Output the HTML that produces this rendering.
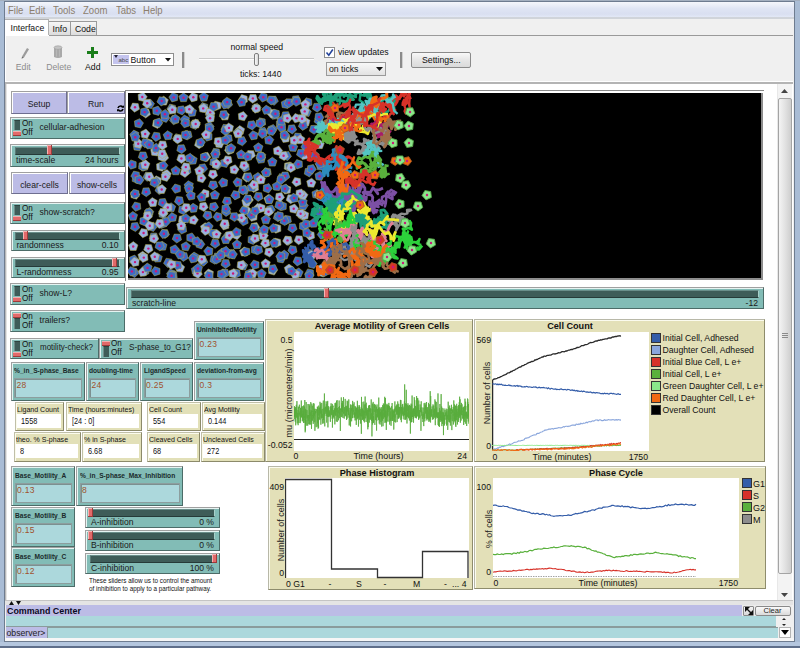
<!DOCTYPE html><html><head><meta charset="utf-8"><style>
*{margin:0;padding:0;box-sizing:border-box}
body{width:800px;height:648px;overflow:hidden;background:#fff;font-family:"Liberation Sans",sans-serif;position:relative}
div{position:absolute}
.t{white-space:nowrap}
</style></head><body>
<div style="left:0px;top:0px;width:800px;height:648px;background:#a9bcd5"></div>
<div style="left:0px;top:0px;width:800px;height:1px;background:#a4b0c0"></div>
<div style="left:4px;top:1px;width:791px;height:641px;background:#f0f0f0;border:1px solid #6e7c90"></div>
<div style="left:5px;top:2px;width:789px;height:15px;background:linear-gradient(#f5f7fc,#dfe5f4 45%,#d9dff1 80%,#e2e8f6)"></div>
<div style="left:5px;top:17px;width:789px;height:2px;background:#d0d4da"></div>
<div class="t" style="left:7.5px;top:3.94px;height:12.72px;line-height:12.72px;font-size:10.6px;color:#8c7e6c;transform:translateX(0) scaleX(0.9);transform-origin:0 50%;">File</div>
<div class="t" style="left:28.75px;top:3.94px;height:12.72px;line-height:12.72px;font-size:10.6px;color:#8c7e6c;transform:translateX(0) scaleX(0.9);transform-origin:0 50%;">Edit</div>
<div class="t" style="left:52.5px;top:3.94px;height:12.72px;line-height:12.72px;font-size:10.6px;color:#8c7e6c;transform:translateX(0) scaleX(0.9);transform-origin:0 50%;">Tools</div>
<div class="t" style="left:82.5px;top:3.94px;height:12.72px;line-height:12.72px;font-size:10.6px;color:#8c7e6c;transform:translateX(0) scaleX(0.9);transform-origin:0 50%;">Zoom</div>
<div class="t" style="left:116.25px;top:3.94px;height:12.72px;line-height:12.72px;font-size:10.6px;color:#8c7e6c;transform:translateX(0) scaleX(0.9);transform-origin:0 50%;">Tabs</div>
<div class="t" style="left:142.5px;top:3.94px;height:12.72px;line-height:12.72px;font-size:10.6px;color:#8c7e6c;transform:translateX(0) scaleX(0.9);transform-origin:0 50%;">Help</div>
<div style="left:5px;top:19px;width:788px;height:18px;background:#f0f0f0"></div>
<div style="left:48px;top:21px;width:23px;height:15px;background:linear-gradient(#f6f6f6,#dcdcdc);border:1px solid #9a9a9a"></div>
<div style="left:70px;top:21px;width:27px;height:15px;background:linear-gradient(#f6f6f6,#dcdcdc);border:1px solid #9a9a9a"></div>
<div style="left:5px;top:19px;width:44px;height:17px;background:#fff;border:1px solid #b0b0b0;border-bottom:none;border-left:none"></div>
<div class="t" style="left:10.5px;top:22.98px;height:10.44px;line-height:10.44px;font-size:8.7px;color:#111;transform:translateX(0) scaleX(1.0);transform-origin:0 50%;">Interface</div>
<div class="t" style="left:52.5px;top:24.28px;height:10.44px;line-height:10.44px;font-size:8.7px;color:#111;transform:translateX(0) scaleX(1.0);transform-origin:0 50%;">Info</div>
<div class="t" style="left:75px;top:24.28px;height:10.44px;line-height:10.44px;font-size:8.7px;color:#111;transform:translateX(0) scaleX(1.0);transform-origin:0 50%;">Code</div>
<div style="left:5px;top:35px;width:788px;height:49px;background:#f0f0f0;border-top:1px solid #9a9a9a;border-bottom:2px solid #b4b4b4;box-shadow:inset 1px -1px 0 #fff"></div>
<div style="left:49px;top:35px;width:744px;height:1px;background:#9a9a9a"></div>
<div style="left:5px;top:35px;width:44px;height:1px;background:#fff"></div>
<svg style="position:absolute;left:17px;top:46px" width="14" height="13" viewBox="0 0 14 13"><path d="M5 10.5 L10 2 L12 3.2 L7 11.6 Z" fill="#9c9c9c"/><path d="M5 10.5 L4.6 12.8 L7 11.6Z" fill="#6e6e6e"/></svg>
<div class="t" style="left:15.75px;top:61.78px;height:10.44px;line-height:10.44px;font-size:8.7px;color:#8c8c8c;transform:translateX(0) scaleX(1.0);transform-origin:0 50%;">Edit</div>
<svg style="position:absolute;left:52px;top:45px" width="12" height="14" viewBox="0 0 12 14"><path d="M2 2.8 L10 2.8 L10 12 Q6 14 2 12 Z" fill="#a9a9a9"/><ellipse cx="6" cy="2.6" rx="4" ry="1.8" fill="#c4c4c4" stroke="#9a9a9a" stroke-width="0.6"/><path d="M4.5 4.5 L4.5 11.5 M7.5 4.5 L7.5 11.5" stroke="#bcbcbc" stroke-width="0.8"/></svg>
<div class="t" style="left:46.25px;top:61.78px;height:10.44px;line-height:10.44px;font-size:8.7px;color:#8c8c8c;transform:translateX(0) scaleX(1.0);transform-origin:0 50%;">Delete</div>
<div style="left:91px;top:47px;width:3px;height:11px;background:#1a7e1a"></div>
<div style="left:87px;top:51px;width:11px;height:3px;background:#1a7e1a"></div>
<div class="t" style="left:85px;top:61.78px;height:10.44px;line-height:10.44px;font-size:8.7px;color:#111;transform:translateX(0) scaleX(1.0);transform-origin:0 50%;">Add</div>
<div style="left:111px;top:53px;width:63px;height:13px;background:#fff;border:1px solid #8e8e8e"></div>
<div style="left:113px;top:55px;width:16px;height:9px;background:#c4c4ee"></div>
<svg style="position:absolute;left:114px;top:55px" width="4" height="3"><path d="M0 0 L4 0 L2 3Z" fill="#223"/></svg>
<div class="t" style="left:118.5px;top:56.90px;height:7.20px;line-height:7.20px;font-size:6px;color:#444;transform:translateX(0) scaleX(1);transform-origin:0 50%;">abc</div>
<div class="t" style="left:130.5px;top:54.78px;height:10.44px;line-height:10.44px;font-size:8.7px;color:#111;transform:translateX(0) scaleX(1.0);transform-origin:0 50%;">Button</div>
<svg style="position:absolute;left:165px;top:58px" width="6" height="4"><path d="M0 0 L6 0 L3 3.5Z" fill="#111"/></svg>
<div style="left:182px;top:52px;width:3px;height:16px;background:#8a8a8a;border-right:1px solid #cfcfcf"></div>
<div style="left:400px;top:52px;width:3px;height:16px;background:#8a8a8a;border-right:1px solid #cfcfcf"></div>
<div class="t" style="left:230.5px;top:41.78px;height:10.44px;line-height:10.44px;font-size:8.7px;color:#111;transform:translateX(0) scaleX(1.0);transform-origin:0 50%;">normal speed</div>
<div style="left:199px;top:58px;width:115px;height:2px;background:#c9c9c9;border-bottom:1px solid #fff"></div>
<div style="left:254px;top:53px;width:5px;height:13px;background:linear-gradient(90deg,#fafafa,#d8d8d8);border:1px solid #7e7e7e;border-radius:2px"></div>
<div class="t" style="left:240px;top:68.78px;height:10.44px;line-height:10.44px;font-size:8.7px;color:#111;transform:translateX(0) scaleX(1.0);transform-origin:0 50%;">ticks: 1440</div>
<div style="left:324px;top:47px;width:11px;height:11px;background:#fff;border:1px solid #8e8f8f"></div>
<svg style="position:absolute;left:325px;top:48px" width="9" height="9"><path d="M1.5 4.5 L3.8 7.2 L7.8 1.5" fill="none" stroke="#24439a" stroke-width="1.6"/></svg>
<div class="t" style="left:338px;top:47.28px;height:10.44px;line-height:10.44px;font-size:8.7px;color:#111;transform:translateX(0) scaleX(1.0);transform-origin:0 50%;">view updates</div>
<div style="left:326px;top:62px;width:60px;height:14px;background:linear-gradient(#f8f8f8,#e2e2e2);border:1px solid #9a9a9a"></div>
<div class="t" style="left:329px;top:63.78px;height:10.44px;line-height:10.44px;font-size:8.7px;color:#111;transform:translateX(0) scaleX(1.0);transform-origin:0 50%;">on ticks</div>
<svg style="position:absolute;left:376px;top:67px" width="7" height="4"><path d="M0 0 L7 0 L3.5 4Z" fill="#111"/></svg>
<div style="left:411px;top:52px;width:60px;height:16px;background:linear-gradient(#f8f8f8,#e6e6e6 50%,#dadada);border:1px solid #8a8a8a;border-radius:2px"></div>
<div class="t" style="left:422px;top:54.78px;height:10.44px;line-height:10.44px;font-size:8.7px;color:#111;transform:translateX(0) scaleX(1.0);transform-origin:0 50%;">Settings...</div>
<div style="left:5px;top:84px;width:788px;height:516px;background:#fff;border-left:1px solid #b8b8b8;box-shadow:inset 1px 0 0 #e4e4e4"></div>
<div style="left:777px;top:84px;width:15px;height:516px;background:#f3f3f3;border-left:1px solid #e8e8e8"></div>
<svg style="position:absolute;left:781px;top:89px" width="7" height="4"><path d="M0 4 L7 4 L3.5 0Z" fill="#444"/></svg>
<div style="left:778px;top:98px;width:14px;height:476px;background:linear-gradient(90deg,#f4f4f4,#e2e2e2 50%,#cecece);border:1px solid #a4a4a4;border-radius:2px"></div>
<div style="left:782px;top:333px;width:6px;height:1px;background:#8a8a8a"></div>
<div style="left:782px;top:335px;width:6px;height:1px;background:#8a8a8a"></div>
<div style="left:782px;top:337px;width:6px;height:1px;background:#8a8a8a"></div>
<svg style="position:absolute;left:781px;top:593px" width="7" height="4"><path d="M0 0 L7 0 L3.5 4Z" fill="#444"/></svg>
<div style="left:11px;top:91px;width:56px;height:23px;background:#bcbce6;border-style:solid;border-width:1px;border-color:#a0a0a0 #6e6e90 #6e6e90 #a0a0a0;box-shadow:inset 1px 1px 0 #ffffff"></div>
<div class="t" style="left:39.0px;top:99.04px;height:10.32px;line-height:10.32px;font-size:8.6px;color:#1a1a1a;transform:translateX(-50%) scaleX(1.0);transform-origin:50% 50%;">Setup</div>
<div style="left:67px;top:91px;width:58px;height:23px;background:#bcbce6;border-style:solid;border-width:1px;border-color:#a0a0a0 #6e6e90 #6e6e90 #a0a0a0;box-shadow:inset 1px 1px 0 #ffffff"></div>
<div class="t" style="left:96px;top:99.04px;height:10.32px;line-height:10.32px;font-size:8.6px;color:#1a1a1a;transform:translateX(-50%) scaleX(1.0);transform-origin:50% 50%;">Run</div>
<svg style="position:absolute;left:116.5px;top:105px" width="7" height="7" viewBox="0 0 7 7"><path d="M1.0 3.0 Q1.6 1.0 3.6 1.0 Q5.0 1.0 5.6 2.0" fill="none" stroke="#000" stroke-width="1.6"/><path d="M6.0 4.0 Q5.4 6.0 3.4 6.0 Q2.0 6.0 1.4 5.0" fill="none" stroke="#000" stroke-width="1.6"/><path d="M4.4 2.8 L7 2.8 L7 0.2Z" fill="#000"/><path d="M2.6 4.2 L0 4.2 L0 6.8Z" fill="#000"/></svg>
<div style="left:10px;top:117px;width:115px;height:22px;background:#82bcb6;border-style:solid;border-width:1px;border-color:#a0a0a0 #4c6c68 #4c6c68 #a0a0a0;box-shadow:inset 1px 1px 0 #e6f4f2"></div>
<div style="left:14px;top:120px;width:6px;height:10px;background:#3e5c58;border-left:1px solid #6d8c88;border-top:1px solid #2e4440"></div>
<div style="left:13px;top:131px;width:8px;height:5px;background:#e26a6a;border-bottom:1px solid #9e3a3a;box-shadow:inset 0 1px 0 #f3b0b0"></div>
<div class="t" style="left:22px;top:117.70px;height:10.80px;line-height:10.80px;font-size:9px;color:#111;transform:translateX(0) scaleX(0.9);transform-origin:0 50%;">On</div>
<div class="t" style="left:22px;top:126.50px;height:10.80px;line-height:10.80px;font-size:9px;color:#111;transform:translateX(0) scaleX(0.9);transform-origin:0 50%;">Off</div>
<div class="t" style="left:39.5px;top:121.64px;height:10.32px;line-height:10.32px;font-size:8.6px;color:#1a1a1a;transform:translateX(0) scaleX(1.0);transform-origin:0 50%;">cellular-adhesion</div>
<div style="left:10px;top:144px;width:115px;height:23px;background:#82bcb6;border-style:solid;border-width:1px;border-color:#a0a0a0 #4c6c68 #4c6c68 #a0a0a0;box-shadow:inset 1px 1px 0 #e6f4f2"></div>
<div style="left:15px;top:147px;width:105px;height:8px;background:#3e5c58;border-top:1px solid #6a8e8a;border-left:1px solid #5a7a76;border-bottom:1px solid #263a38;border-right:1px solid #a8d0ca"></div>
<div style="left:47px;top:145px;width:5px;height:10px;background:#e26a6a;border-right:1px solid #9e3a3a;border-bottom:1px solid #9e3a3a;box-shadow:inset 1px 1px 0 #f5b4b4"></div>
<div class="t" style="left:16px;top:154.94px;height:10.32px;line-height:10.32px;font-size:8.6px;color:#1a1a1a;transform:translateX(0) scaleX(1.0);transform-origin:0 50%;">time-scale</div>
<div class="t" style="left:118.5px;top:154.94px;height:10.32px;line-height:10.32px;font-size:8.6px;color:#1a1a1a;transform:translateX(-100%) scaleX(1.0);transform-origin:100% 50%;">24 hours</div>
<div style="left:11px;top:172px;width:57px;height:22px;background:#bcbce6;border-style:solid;border-width:1px;border-color:#a0a0a0 #6e6e90 #6e6e90 #a0a0a0;box-shadow:inset 1px 1px 0 #ffffff"></div>
<div class="t" style="left:39.5px;top:179.54px;height:10.32px;line-height:10.32px;font-size:8.6px;color:#1a1a1a;transform:translateX(-50%) scaleX(1.0);transform-origin:50% 50%;">clear-cells</div>
<div style="left:69px;top:172px;width:56px;height:22px;background:#bcbce6;border-style:solid;border-width:1px;border-color:#a0a0a0 #6e6e90 #6e6e90 #a0a0a0;box-shadow:inset 1px 1px 0 #ffffff"></div>
<div class="t" style="left:97.0px;top:179.54px;height:10.32px;line-height:10.32px;font-size:8.6px;color:#1a1a1a;transform:translateX(-50%) scaleX(1.0);transform-origin:50% 50%;">show-cells</div>
<div style="left:10px;top:202px;width:115px;height:22px;background:#82bcb6;border-style:solid;border-width:1px;border-color:#a0a0a0 #4c6c68 #4c6c68 #a0a0a0;box-shadow:inset 1px 1px 0 #e6f4f2"></div>
<div style="left:14px;top:205px;width:6px;height:10px;background:#3e5c58;border-left:1px solid #6d8c88;border-top:1px solid #2e4440"></div>
<div style="left:13px;top:216px;width:8px;height:5px;background:#e26a6a;border-bottom:1px solid #9e3a3a;box-shadow:inset 0 1px 0 #f3b0b0"></div>
<div class="t" style="left:22px;top:202.70px;height:10.80px;line-height:10.80px;font-size:9px;color:#111;transform:translateX(0) scaleX(0.9);transform-origin:0 50%;">On</div>
<div class="t" style="left:22px;top:211.50px;height:10.80px;line-height:10.80px;font-size:9px;color:#111;transform:translateX(0) scaleX(0.9);transform-origin:0 50%;">Off</div>
<div class="t" style="left:39.5px;top:206.64px;height:10.32px;line-height:10.32px;font-size:8.6px;color:#1a1a1a;transform:translateX(0) scaleX(1.0);transform-origin:0 50%;">show-scratch?</div>
<div style="left:11px;top:230px;width:114px;height:21px;background:#82bcb6;border-style:solid;border-width:1px;border-color:#a0a0a0 #4c6c68 #4c6c68 #a0a0a0;box-shadow:inset 1px 1px 0 #e6f4f2"></div>
<div style="left:15px;top:232px;width:105px;height:8px;background:#3e5c58;border-top:1px solid #6a8e8a;border-left:1px solid #5a7a76;border-bottom:1px solid #263a38;border-right:1px solid #a8d0ca"></div>
<div style="left:23px;top:231px;width:5px;height:9px;background:#e26a6a;border-right:1px solid #9e3a3a;border-bottom:1px solid #9e3a3a;box-shadow:inset 1px 1px 0 #f5b4b4"></div>
<div class="t" style="left:16.5px;top:240.44px;height:10.32px;line-height:10.32px;font-size:8.6px;color:#1a1a1a;transform:translateX(0) scaleX(1.0);transform-origin:0 50%;">randomness</div>
<div class="t" style="left:118.5px;top:240.44px;height:10.32px;line-height:10.32px;font-size:8.6px;color:#1a1a1a;transform:translateX(-100%) scaleX(1.0);transform-origin:100% 50%;">0.10</div>
<div style="left:11px;top:257px;width:114px;height:21px;background:#82bcb6;border-style:solid;border-width:1px;border-color:#a0a0a0 #4c6c68 #4c6c68 #a0a0a0;box-shadow:inset 1px 1px 0 #e6f4f2"></div>
<div style="left:15px;top:259px;width:105px;height:8px;background:#3e5c58;border-top:1px solid #6a8e8a;border-left:1px solid #5a7a76;border-bottom:1px solid #263a38;border-right:1px solid #a8d0ca"></div>
<div style="left:112px;top:258px;width:5px;height:9px;background:#e26a6a;border-right:1px solid #9e3a3a;border-bottom:1px solid #9e3a3a;box-shadow:inset 1px 1px 0 #f5b4b4"></div>
<div class="t" style="left:16.5px;top:267.44px;height:10.32px;line-height:10.32px;font-size:8.6px;color:#1a1a1a;transform:translateX(0) scaleX(1.0);transform-origin:0 50%;">L-randomness</div>
<div class="t" style="left:118.5px;top:267.44px;height:10.32px;line-height:10.32px;font-size:8.6px;color:#1a1a1a;transform:translateX(-100%) scaleX(1.0);transform-origin:100% 50%;">0.95</div>
<div style="left:10px;top:283px;width:115px;height:22px;background:#82bcb6;border-style:solid;border-width:1px;border-color:#a0a0a0 #4c6c68 #4c6c68 #a0a0a0;box-shadow:inset 1px 1px 0 #e6f4f2"></div>
<div style="left:14px;top:286px;width:6px;height:10px;background:#3e5c58;border-left:1px solid #6d8c88;border-top:1px solid #2e4440"></div>
<div style="left:13px;top:297px;width:8px;height:5px;background:#e26a6a;border-bottom:1px solid #9e3a3a;box-shadow:inset 0 1px 0 #f3b0b0"></div>
<div class="t" style="left:22px;top:283.70px;height:10.80px;line-height:10.80px;font-size:9px;color:#111;transform:translateX(0) scaleX(0.9);transform-origin:0 50%;">On</div>
<div class="t" style="left:22px;top:292.50px;height:10.80px;line-height:10.80px;font-size:9px;color:#111;transform:translateX(0) scaleX(0.9);transform-origin:0 50%;">Off</div>
<div class="t" style="left:39.5px;top:287.64px;height:10.32px;line-height:10.32px;font-size:8.6px;color:#1a1a1a;transform:translateX(0) scaleX(1.0);transform-origin:0 50%;">show-L?</div>
<div style="left:10px;top:310px;width:115px;height:22px;background:#82bcb6;border-style:solid;border-width:1px;border-color:#a0a0a0 #4c6c68 #4c6c68 #a0a0a0;box-shadow:inset 1px 1px 0 #e6f4f2"></div>
<div style="left:14px;top:318px;width:6px;height:11px;background:#3e5c58;border-left:1px solid #6d8c88;border-top:1px solid #2e4440"></div>
<div style="left:13px;top:313px;width:8px;height:5px;background:#e26a6a;border-bottom:1px solid #9e3a3a;box-shadow:inset 0 1px 0 #f3b0b0"></div>
<div class="t" style="left:22px;top:310.70px;height:10.80px;line-height:10.80px;font-size:9px;color:#111;transform:translateX(0) scaleX(0.9);transform-origin:0 50%;">On</div>
<div class="t" style="left:22px;top:319.50px;height:10.80px;line-height:10.80px;font-size:9px;color:#111;transform:translateX(0) scaleX(0.9);transform-origin:0 50%;">Off</div>
<div class="t" style="left:39.5px;top:314.64px;height:10.32px;line-height:10.32px;font-size:8.6px;color:#1a1a1a;transform:translateX(0) scaleX(1.0);transform-origin:0 50%;">trailers?</div>
<div style="left:10px;top:338px;width:89px;height:21px;background:#82bcb6;border-style:solid;border-width:1px;border-color:#a0a0a0 #4c6c68 #4c6c68 #a0a0a0;box-shadow:inset 1px 1px 0 #e6f4f2"></div>
<div style="left:14px;top:341px;width:6px;height:10px;background:#3e5c58;border-left:1px solid #6d8c88;border-top:1px solid #2e4440"></div>
<div style="left:13px;top:352px;width:8px;height:5px;background:#e26a6a;border-bottom:1px solid #9e3a3a;box-shadow:inset 0 1px 0 #f3b0b0"></div>
<div class="t" style="left:22px;top:338.70px;height:10.80px;line-height:10.80px;font-size:9px;color:#111;transform:translateX(0) scaleX(0.9);transform-origin:0 50%;">On</div>
<div class="t" style="left:22px;top:347.50px;height:10.80px;line-height:10.80px;font-size:9px;color:#111;transform:translateX(0) scaleX(0.9);transform-origin:0 50%;">Off</div>
<div class="t" style="left:39.5px;top:342.14px;height:10.32px;line-height:10.32px;font-size:8.6px;color:#1a1a1a;transform:translateX(0) scaleX(0.93);transform-origin:0 50%;">motility-check?</div>
<div style="left:99px;top:338px;width:94px;height:21px;background:#82bcb6;border-style:solid;border-width:1px;border-color:#a0a0a0 #4c6c68 #4c6c68 #a0a0a0;box-shadow:inset 1px 1px 0 #e6f4f2"></div>
<div style="left:103px;top:346px;width:6px;height:11px;background:#3e5c58;border-left:1px solid #6d8c88;border-top:1px solid #2e4440"></div>
<div style="left:102px;top:341px;width:8px;height:5px;background:#e26a6a;border-bottom:1px solid #9e3a3a;box-shadow:inset 0 1px 0 #f3b0b0"></div>
<div class="t" style="left:111px;top:338.20px;height:10.80px;line-height:10.80px;font-size:9px;color:#111;transform:translateX(0) scaleX(0.9);transform-origin:0 50%;">On</div>
<div class="t" style="left:111px;top:347.00px;height:10.80px;line-height:10.80px;font-size:9px;color:#111;transform:translateX(0) scaleX(0.9);transform-origin:0 50%;">Off</div>
<div class="t" style="left:128.5px;top:341.89px;height:10.32px;line-height:10.32px;font-size:8.6px;color:#1a1a1a;transform:translateX(0) scaleX(0.95);transform-origin:0 50%;">S-phase_to_G1?</div>
<div style="left:194px;top:321px;width:70px;height:39px;background:#82bcb6;border-style:solid;border-width:1px;border-color:#a0a0a0 #4c6c68 #4c6c68 #a0a0a0;box-shadow:inset 1px 1px 0 #e6f4f2"></div>
<div class="t" style="left:197.0px;top:325.00px;height:9.60px;line-height:9.60px;font-size:8px;font-weight:bold;color:#1a2a2a;transform:translateX(0) scaleX(0.83);transform-origin:0 50%;">UninhibitedMotility</div>
<div style="left:197px;top:337px;width:64px;height:20px;background:#acd8dc;border:1px solid #8c9e9e;box-shadow:inset 1px 1px 0 #7c9090"></div>
<div class="t" style="left:199.5px;top:339.40px;height:10.20px;line-height:10.20px;font-size:8.5px;color:#a0522d;transform:translateX(0) scaleX(1.0);transform-origin:0 50%;letter-spacing:0.3px">0.23</div>
<div style="left:11px;top:362px;width:74px;height:39px;background:#82bcb6;border-style:solid;border-width:1px;border-color:#a0a0a0 #4c6c68 #4c6c68 #a0a0a0;box-shadow:inset 1px 1px 0 #e6f4f2"></div>
<div class="t" style="left:14.0px;top:366.00px;height:9.60px;line-height:9.60px;font-size:8px;font-weight:bold;color:#1a2a2a;transform:translateX(0) scaleX(0.83);transform-origin:0 50%;">%_in_S-phase_Base</div>
<div style="left:14px;top:378px;width:68px;height:20px;background:#acd8dc;border:1px solid #8c9e9e;box-shadow:inset 1px 1px 0 #7c9090"></div>
<div class="t" style="left:16.5px;top:380.40px;height:10.20px;line-height:10.20px;font-size:8.5px;color:#a0522d;transform:translateX(0) scaleX(1.0);transform-origin:0 50%;letter-spacing:0.3px">28</div>
<div style="left:86px;top:362px;width:53px;height:39px;background:#82bcb6;border-style:solid;border-width:1px;border-color:#a0a0a0 #4c6c68 #4c6c68 #a0a0a0;box-shadow:inset 1px 1px 0 #e6f4f2"></div>
<div class="t" style="left:89.0px;top:366.00px;height:9.60px;line-height:9.60px;font-size:8px;font-weight:bold;color:#1a2a2a;transform:translateX(0) scaleX(0.83);transform-origin:0 50%;">doubling-time</div>
<div style="left:89px;top:378px;width:47px;height:20px;background:#acd8dc;border:1px solid #8c9e9e;box-shadow:inset 1px 1px 0 #7c9090"></div>
<div class="t" style="left:91.5px;top:380.40px;height:10.20px;line-height:10.20px;font-size:8.5px;color:#a0522d;transform:translateX(0) scaleX(1.0);transform-origin:0 50%;letter-spacing:0.3px">24</div>
<div style="left:140px;top:362px;width:53px;height:39px;background:#82bcb6;border-style:solid;border-width:1px;border-color:#a0a0a0 #4c6c68 #4c6c68 #a0a0a0;box-shadow:inset 1px 1px 0 #e6f4f2"></div>
<div class="t" style="left:143.5px;top:366.00px;height:9.60px;line-height:9.60px;font-size:8px;font-weight:bold;color:#1a2a2a;transform:translateX(0) scaleX(0.83);transform-origin:0 50%;">LigandSpeed</div>
<div style="left:144px;top:378px;width:46px;height:20px;background:#acd8dc;border:1px solid #8c9e9e;box-shadow:inset 1px 1px 0 #7c9090"></div>
<div class="t" style="left:146px;top:380.40px;height:10.20px;line-height:10.20px;font-size:8.5px;color:#a0522d;transform:translateX(0) scaleX(1.0);transform-origin:0 50%;letter-spacing:0.3px">0.25</div>
<div style="left:194px;top:362px;width:70px;height:39px;background:#82bcb6;border-style:solid;border-width:1px;border-color:#a0a0a0 #4c6c68 #4c6c68 #a0a0a0;box-shadow:inset 1px 1px 0 #e6f4f2"></div>
<div class="t" style="left:197.0px;top:366.00px;height:9.60px;line-height:9.60px;font-size:8px;font-weight:bold;color:#1a2a2a;transform:translateX(0) scaleX(0.83);transform-origin:0 50%;">deviation-from-avg</div>
<div style="left:197px;top:378px;width:64px;height:20px;background:#acd8dc;border:1px solid #8c9e9e;box-shadow:inset 1px 1px 0 #7c9090"></div>
<div class="t" style="left:199.5px;top:380.40px;height:10.20px;line-height:10.20px;font-size:8.5px;color:#a0522d;transform:translateX(0) scaleX(1.0);transform-origin:0 50%;letter-spacing:0.3px">0.3</div>
<div style="left:15px;top:402px;width:49px;height:29px;background:#e2e0b8;border-style:solid;border-width:1px;border-color:#c0bfa8 #8c8a6a #8c8a6a #c0bfa8;box-shadow:inset 1px 1px 0 #fbfbec"></div>
<div class="t" style="left:16.8px;top:404.90px;height:9.60px;line-height:9.60px;font-size:8px;color:#111;transform:translateX(0) scaleX(0.88);transform-origin:0 50%;">Ligand Count</div>
<div style="left:17px;top:414px;width:44px;height:14px;background:#fff"></div>
<div class="t" style="left:20.5px;top:416.40px;height:10.20px;line-height:10.20px;font-size:8.5px;color:#111;transform:translateX(0) scaleX(0.86);transform-origin:0 50%;">1558</div>
<div style="left:66px;top:402px;width:76px;height:29px;background:#e2e0b8;border-style:solid;border-width:1px;border-color:#c0bfa8 #8c8a6a #8c8a6a #c0bfa8;box-shadow:inset 1px 1px 0 #fbfbec"></div>
<div class="t" style="left:67.8px;top:404.90px;height:9.60px;line-height:9.60px;font-size:8px;color:#111;transform:translateX(0) scaleX(0.88);transform-origin:0 50%;">Time (hours:minutes)</div>
<div style="left:68px;top:414px;width:71px;height:14px;background:#fff"></div>
<div class="t" style="left:71.5px;top:416.40px;height:10.20px;line-height:10.20px;font-size:8.5px;color:#111;transform:translateX(0) scaleX(0.86);transform-origin:0 50%;">[24 : 0]</div>
<div style="left:147px;top:402px;width:54px;height:29px;background:#e2e0b8;border-style:solid;border-width:1px;border-color:#c0bfa8 #8c8a6a #8c8a6a #c0bfa8;box-shadow:inset 1px 1px 0 #fbfbec"></div>
<div class="t" style="left:148.8px;top:404.90px;height:9.60px;line-height:9.60px;font-size:8px;color:#111;transform:translateX(0) scaleX(0.88);transform-origin:0 50%;">Cell Count</div>
<div style="left:149px;top:414px;width:49px;height:14px;background:#fff"></div>
<div class="t" style="left:152.5px;top:416.40px;height:10.20px;line-height:10.20px;font-size:8.5px;color:#111;transform:translateX(0) scaleX(0.86);transform-origin:0 50%;">554</div>
<div style="left:202px;top:402px;width:63px;height:29px;background:#e2e0b8;border-style:solid;border-width:1px;border-color:#c0bfa8 #8c8a6a #8c8a6a #c0bfa8;box-shadow:inset 1px 1px 0 #fbfbec"></div>
<div class="t" style="left:203.8px;top:404.90px;height:9.60px;line-height:9.60px;font-size:8px;color:#111;transform:translateX(0) scaleX(0.88);transform-origin:0 50%;">Avg Motility</div>
<div style="left:204px;top:414px;width:58px;height:14px;background:#fff"></div>
<div class="t" style="left:207.5px;top:416.40px;height:10.20px;line-height:10.20px;font-size:8.5px;color:#111;transform:translateX(0) scaleX(0.86);transform-origin:0 50%;">0.144</div>
<div style="left:14px;top:432px;width:67px;height:30px;background:#e2e0b8;border-style:solid;border-width:1px;border-color:#c0bfa8 #8c8a6a #8c8a6a #c0bfa8;box-shadow:inset 1px 1px 0 #fbfbec"></div>
<div class="t" style="left:15.8px;top:434.90px;height:9.60px;line-height:9.60px;font-size:8px;color:#111;transform:translateX(0) scaleX(0.88);transform-origin:0 50%;">theo. % S-phase</div>
<div style="left:16px;top:444px;width:62px;height:14px;background:#fff"></div>
<div class="t" style="left:19.5px;top:446.40px;height:10.20px;line-height:10.20px;font-size:8.5px;color:#111;transform:translateX(0) scaleX(0.86);transform-origin:0 50%;">8</div>
<div style="left:82px;top:432px;width:60px;height:30px;background:#e2e0b8;border-style:solid;border-width:1px;border-color:#c0bfa8 #8c8a6a #8c8a6a #c0bfa8;box-shadow:inset 1px 1px 0 #fbfbec"></div>
<div class="t" style="left:83.8px;top:434.90px;height:9.60px;line-height:9.60px;font-size:8px;color:#111;transform:translateX(0) scaleX(0.88);transform-origin:0 50%;">% in S-phase</div>
<div style="left:84px;top:444px;width:55px;height:14px;background:#fff"></div>
<div class="t" style="left:87.5px;top:446.40px;height:10.20px;line-height:10.20px;font-size:8.5px;color:#111;transform:translateX(0) scaleX(0.86);transform-origin:0 50%;">6.68</div>
<div style="left:147px;top:432px;width:53px;height:30px;background:#e2e0b8;border-style:solid;border-width:1px;border-color:#c0bfa8 #8c8a6a #8c8a6a #c0bfa8;box-shadow:inset 1px 1px 0 #fbfbec"></div>
<div class="t" style="left:148.8px;top:434.90px;height:9.60px;line-height:9.60px;font-size:8px;color:#111;transform:translateX(0) scaleX(0.88);transform-origin:0 50%;">Cleaved Cells</div>
<div style="left:149px;top:444px;width:48px;height:14px;background:#fff"></div>
<div class="t" style="left:152.5px;top:446.40px;height:10.20px;line-height:10.20px;font-size:8.5px;color:#111;transform:translateX(0) scaleX(0.86);transform-origin:0 50%;">68</div>
<div style="left:201px;top:432px;width:64px;height:30px;background:#e2e0b8;border-style:solid;border-width:1px;border-color:#c0bfa8 #8c8a6a #8c8a6a #c0bfa8;box-shadow:inset 1px 1px 0 #fbfbec"></div>
<div class="t" style="left:202.8px;top:434.90px;height:9.60px;line-height:9.60px;font-size:8px;color:#111;transform:translateX(0) scaleX(0.88);transform-origin:0 50%;">Uncleaved Cells</div>
<div style="left:203px;top:444px;width:59px;height:14px;background:#fff"></div>
<div class="t" style="left:206.5px;top:446.40px;height:10.20px;line-height:10.20px;font-size:8.5px;color:#111;transform:translateX(0) scaleX(0.86);transform-origin:0 50%;">272</div>
<div style="left:11px;top:466px;width:64px;height:40px;background:#82bcb6;border-style:solid;border-width:1px;border-color:#a0a0a0 #4c6c68 #4c6c68 #a0a0a0;box-shadow:inset 1px 1px 0 #e6f4f2"></div>
<div class="t" style="left:14.5px;top:470.50px;height:9.60px;line-height:9.60px;font-size:8px;font-weight:bold;color:#1a2a2a;transform:translateX(0) scaleX(0.83);transform-origin:0 50%;">Base_Motility_A</div>
<div style="left:15px;top:483px;width:57px;height:20px;background:#acd8dc;border:1px solid #8c9e9e;box-shadow:inset 1px 1px 0 #7c9090"></div>
<div class="t" style="left:17px;top:484.90px;height:10.20px;line-height:10.20px;font-size:8.5px;color:#a0522d;transform:translateX(0) scaleX(1.0);transform-origin:0 50%;letter-spacing:0.3px">0.13</div>
<div style="left:76px;top:466px;width:107px;height:40px;background:#82bcb6;border-style:solid;border-width:1px;border-color:#a0a0a0 #4c6c68 #4c6c68 #a0a0a0;box-shadow:inset 1px 1px 0 #e6f4f2"></div>
<div class="t" style="left:79.5px;top:470.50px;height:9.60px;line-height:9.60px;font-size:8px;font-weight:bold;color:#1a2a2a;transform:translateX(0) scaleX(0.83);transform-origin:0 50%;">%_in_S-phase_Max_Inhibition</div>
<div style="left:80px;top:483px;width:100px;height:20px;background:#acd8dc;border:1px solid #8c9e9e;box-shadow:inset 1px 1px 0 #7c9090"></div>
<div class="t" style="left:82px;top:484.90px;height:10.20px;line-height:10.20px;font-size:8.5px;color:#a0522d;transform:translateX(0) scaleX(1.0);transform-origin:0 50%;letter-spacing:0.3px">8</div>
<div style="left:11px;top:507px;width:64px;height:40px;background:#82bcb6;border-style:solid;border-width:1px;border-color:#a0a0a0 #4c6c68 #4c6c68 #a0a0a0;box-shadow:inset 1px 1px 0 #e6f4f2"></div>
<div class="t" style="left:14.5px;top:511.00px;height:9.60px;line-height:9.60px;font-size:8px;font-weight:bold;color:#1a2a2a;transform:translateX(0) scaleX(0.83);transform-origin:0 50%;">Base_Motility_B</div>
<div style="left:15px;top:523px;width:57px;height:21px;background:#acd8dc;border:1px solid #8c9e9e;box-shadow:inset 1px 1px 0 #7c9090"></div>
<div class="t" style="left:17px;top:525.40px;height:10.20px;line-height:10.20px;font-size:8.5px;color:#a0522d;transform:translateX(0) scaleX(1.0);transform-origin:0 50%;letter-spacing:0.3px">0.15</div>
<div style="left:11px;top:547px;width:64px;height:40px;background:#82bcb6;border-style:solid;border-width:1px;border-color:#a0a0a0 #4c6c68 #4c6c68 #a0a0a0;box-shadow:inset 1px 1px 0 #e6f4f2"></div>
<div class="t" style="left:14.5px;top:551.50px;height:9.60px;line-height:9.60px;font-size:8px;font-weight:bold;color:#1a2a2a;transform:translateX(0) scaleX(0.83);transform-origin:0 50%;">Base_Motility_C</div>
<div style="left:15px;top:564px;width:57px;height:20px;background:#acd8dc;border:1px solid #8c9e9e;box-shadow:inset 1px 1px 0 #7c9090"></div>
<div class="t" style="left:17px;top:565.90px;height:10.20px;line-height:10.20px;font-size:8.5px;color:#a0522d;transform:translateX(0) scaleX(1.0);transform-origin:0 50%;letter-spacing:0.3px">0.12</div>
<div style="left:85px;top:507px;width:135px;height:21px;background:#82bcb6;border-style:solid;border-width:1px;border-color:#a0a0a0 #4c6c68 #4c6c68 #a0a0a0;box-shadow:inset 1px 1px 0 #e6f4f2"></div>
<div style="left:90px;top:509px;width:125px;height:8px;background:#3e5c58;border-top:1px solid #6a8e8a;border-left:1px solid #5a7a76;border-bottom:1px solid #263a38;border-right:1px solid #a8d0ca"></div>
<div style="left:88px;top:508px;width:5px;height:9px;background:#e26a6a;border-right:1px solid #9e3a3a;border-bottom:1px solid #9e3a3a;box-shadow:inset 1px 1px 0 #f5b4b4"></div>
<div class="t" style="left:91px;top:517.44px;height:10.32px;line-height:10.32px;font-size:8.6px;color:#1a1a1a;transform:translateX(0) scaleX(1.0);transform-origin:0 50%;">A-inhibition</div>
<div class="t" style="left:214px;top:517.44px;height:10.32px;line-height:10.32px;font-size:8.6px;color:#1a1a1a;transform:translateX(-100%) scaleX(1.0);transform-origin:100% 50%;">0 %</div>
<div style="left:85px;top:530px;width:135px;height:21px;background:#82bcb6;border-style:solid;border-width:1px;border-color:#a0a0a0 #4c6c68 #4c6c68 #a0a0a0;box-shadow:inset 1px 1px 0 #e6f4f2"></div>
<div style="left:90px;top:532px;width:125px;height:8px;background:#3e5c58;border-top:1px solid #6a8e8a;border-left:1px solid #5a7a76;border-bottom:1px solid #263a38;border-right:1px solid #a8d0ca"></div>
<div style="left:88px;top:531px;width:5px;height:9px;background:#e26a6a;border-right:1px solid #9e3a3a;border-bottom:1px solid #9e3a3a;box-shadow:inset 1px 1px 0 #f5b4b4"></div>
<div class="t" style="left:91px;top:540.44px;height:10.32px;line-height:10.32px;font-size:8.6px;color:#1a1a1a;transform:translateX(0) scaleX(1.0);transform-origin:0 50%;">B-inhibition</div>
<div class="t" style="left:214px;top:540.44px;height:10.32px;line-height:10.32px;font-size:8.6px;color:#1a1a1a;transform:translateX(-100%) scaleX(1.0);transform-origin:100% 50%;">0 %</div>
<div style="left:85px;top:553px;width:135px;height:21px;background:#82bcb6;border-style:solid;border-width:1px;border-color:#a0a0a0 #4c6c68 #4c6c68 #a0a0a0;box-shadow:inset 1px 1px 0 #e6f4f2"></div>
<div style="left:90px;top:555px;width:125px;height:8px;background:#3e5c58;border-top:1px solid #6a8e8a;border-left:1px solid #5a7a76;border-bottom:1px solid #263a38;border-right:1px solid #a8d0ca"></div>
<div style="left:212px;top:554px;width:5px;height:9px;background:#e26a6a;border-right:1px solid #9e3a3a;border-bottom:1px solid #9e3a3a;box-shadow:inset 1px 1px 0 #f5b4b4"></div>
<div class="t" style="left:91px;top:563.44px;height:10.32px;line-height:10.32px;font-size:8.6px;color:#1a1a1a;transform:translateX(0) scaleX(1.0);transform-origin:0 50%;">C-inhibition</div>
<div class="t" style="left:214px;top:563.44px;height:10.32px;line-height:10.32px;font-size:8.6px;color:#1a1a1a;transform:translateX(-100%) scaleX(1.0);transform-origin:100% 50%;">100 %</div>
<div class="t" style="left:88.5px;top:576.00px;height:9.00px;line-height:9.00px;font-size:7.5px;color:#111;transform:translateX(0) scaleX(0.84);transform-origin:0 50%;">These sliders allow us to control the amount</div>
<div class="t" style="left:88.5px;top:584.00px;height:9.00px;line-height:9.00px;font-size:7.5px;color:#111;transform:translateX(0) scaleX(0.84);transform-origin:0 50%;">of inhibition to apply to a particular pathway.</div>
<div style="left:126px;top:287px;width:638px;height:22px;background:#82bcb6;border-style:solid;border-width:1px;border-color:#a0a0a0 #4c6c68 #4c6c68 #a0a0a0;box-shadow:inset 1px 1px 0 #e6f4f2"></div>
<div style="left:131px;top:290px;width:628px;height:8px;background:#3e5c58;border-top:1px solid #6a8e8a;border-left:1px solid #5a7a76;border-bottom:1px solid #263a38;border-right:1px solid #a8d0ca"></div>
<div style="left:324px;top:288px;width:5px;height:10px;background:#e26a6a;border-right:1px solid #9e3a3a;border-bottom:1px solid #9e3a3a;box-shadow:inset 1px 1px 0 #f5b4b4"></div>
<div class="t" style="left:132px;top:297.94px;height:10.32px;line-height:10.32px;font-size:8.6px;color:#1a1a1a;transform:translateX(0) scaleX(1.0);transform-origin:0 50%;">scratch-line</div>
<div class="t" style="left:758px;top:297.94px;height:10.32px;line-height:10.32px;font-size:8.6px;color:#1a1a1a;transform:translateX(-100%) scaleX(1.0);transform-origin:100% 50%;">-12</div>
<div style="left:125px;top:90px;width:639px;height:191px;background:#fff;border-top:1px solid #8a8a8a;border-left:1px solid #8a8a8a"></div>
<div style="left:761px;top:93px;width:2px;height:187px;background:#8c8c8c"></div>
<div style="left:128px;top:278px;width:635px;height:2px;background:#8c8c8c"></div>
<svg style="position:absolute;left:128px;top:93px" width="633" height="185" viewBox="0 0 633 185"><rect width="633" height="185" fill="#000"/><polygon points="64.3,27.0 70.1,26.5 72.2,31.9 67.8,35.6 62.9,32.5" fill="#98b0e0" stroke="#b8b040" stroke-width="0.5"/><circle cx="67.5" cy="30.7" r="1.2" fill="#c8187a"/><polygon points="62.5,34.4 62.9,28.6 68.4,27.2 71.5,32.1 67.8,36.5" fill="#3c6bc6" stroke="#b8b040" stroke-width="0.5"/><circle cx="66.6" cy="31.8" r="1.2" fill="#c8187a"/><polygon points="67.7,26.1 72.4,29.5 70.6,35.0 64.8,35.0 63.0,29.5" fill="#98b0e0" stroke="#b8b040" stroke-width="0.5"/><circle cx="67.7" cy="31.0" r="1.2" fill="#c8187a"/><polygon points="18.3,103.7 13.6,100.5 15.2,95.0 21.0,94.8 22.9,100.3" fill="#3c6bc6" stroke="#b8b040" stroke-width="0.5"/><circle cx="18.2" cy="98.9" r="1.2" fill="#c8187a"/><polygon points="79.6,17.2 74.1,18.9 70.8,14.2 74.2,9.6 79.7,11.4" fill="#3c6bc6" stroke="#b8b040" stroke-width="0.5"/><circle cx="75.7" cy="14.3" r="1.2" fill="#c8187a"/><polygon points="76.0,10.5 80.1,14.6 77.5,19.7 71.8,18.8 70.9,13.1" fill="#98b0e0" stroke="#b8b040" stroke-width="0.5"/><circle cx="75.2" cy="15.4" r="1.2" fill="#c8187a"/><polygon points="17.7,25.0 13.0,21.6 14.8,16.1 20.6,16.1 22.4,21.6" fill="#98b0e0" stroke="#b8b040" stroke-width="0.5"/><circle cx="17.7" cy="20.1" r="1.2" fill="#c8187a"/><polygon points="12.4,21.6 12.8,15.9 18.4,14.5 21.4,19.4 17.7,23.8" fill="#3c6bc6" stroke="#b8b040" stroke-width="0.5"/><circle cx="16.6" cy="19.1" r="1.2" fill="#c8187a"/><polygon points="90.1,146.4 91.8,151.9 87.1,155.3 82.5,151.8 84.4,146.3" fill="#3c6bc6" stroke="#b8b040" stroke-width="0.5"/><circle cx="87.2" cy="150.4" r="1.2" fill="#c8187a"/><polygon points="25.9,39.2 31.6,39.9 32.7,45.6 27.7,48.4 23.5,44.5" fill="#3c6bc6" stroke="#b8b040" stroke-width="0.5"/><circle cx="28.3" cy="43.5" r="1.2" fill="#c8187a"/><polygon points="125.3,176.3 122.1,171.6 125.6,167.0 131.0,169.0 130.8,174.8" fill="#3c6bc6" stroke="#b8b040" stroke-width="0.5"/><circle cx="127.0" cy="171.7" r="1.2" fill="#c8187a"/><polygon points="116.0,79.0 112.2,74.6 115.3,69.7 120.8,71.0 121.3,76.8" fill="#3c6bc6" stroke="#b8b040" stroke-width="0.5"/><circle cx="117.1" cy="74.2" r="1.2" fill="#c8187a"/><polygon points="118.6,68.2 120.8,73.6 116.5,77.3 111.5,74.3 112.9,68.7" fill="#98b0e0" stroke="#b8b040" stroke-width="0.5"/><circle cx="116.1" cy="72.4" r="1.2" fill="#c8187a"/><polygon points="31.9,57.7 29.5,62.9 23.7,62.2 22.7,56.5 27.7,53.7" fill="#98b0e0" stroke="#b8b040" stroke-width="0.5"/><circle cx="27.1" cy="58.6" r="1.2" fill="#c8187a"/><polygon points="30.6,59.2 24.9,58.9 23.5,53.3 28.3,50.2 32.8,53.9" fill="#3c6bc6" stroke="#b8b040" stroke-width="0.5"/><circle cx="28.0" cy="55.1" r="1.2" fill="#c8187a"/><polygon points="166.4,31.8 168.7,37.0 164.4,40.9 159.5,37.9 160.7,32.3" fill="#3c6bc6" stroke="#b8b040" stroke-width="0.5"/><circle cx="164.0" cy="36.0" r="1.2" fill="#c8187a"/><polygon points="122.7,115.7 120.8,121.1 115.0,121.0 113.4,115.4 118.1,112.2" fill="#98b0e0" stroke="#b8b040" stroke-width="0.5"/><circle cx="118.0" cy="117.1" r="1.2" fill="#c8187a"/><polygon points="111.2,118.1 114.3,113.2 119.9,114.6 120.3,120.4 114.9,122.5" fill="#3c6bc6" stroke="#b8b040" stroke-width="0.5"/><circle cx="116.1" cy="117.8" r="1.2" fill="#c8187a"/><polygon points="80.9,103.8 75.5,105.6 72.1,100.9 75.5,96.3 81.0,98.1" fill="#98b0e0" stroke="#b8b040" stroke-width="0.5"/><circle cx="77.0" cy="101.0" r="1.2" fill="#c8187a"/><polygon points="78.1,102.1 77.2,107.8 71.5,108.6 68.9,103.5 73.0,99.4" fill="#3c6bc6" stroke="#b8b040" stroke-width="0.5"/><circle cx="73.7" cy="104.3" r="1.2" fill="#c8187a"/><polygon points="39.6,123.5 43.8,119.6 48.8,122.4 47.7,128.0 42.0,128.7" fill="#3c6bc6" stroke="#b8b040" stroke-width="0.5"/><circle cx="44.4" cy="124.4" r="1.2" fill="#c8187a"/><polygon points="91.2,56.1 92.2,61.7 87.1,64.5 83.0,60.5 85.5,55.3" fill="#3c6bc6" stroke="#b8b040" stroke-width="0.5"/><circle cx="87.8" cy="59.6" r="1.2" fill="#c8187a"/><polygon points="82.5,60.5 86.6,56.5 91.7,59.2 90.7,64.8 85.0,65.7" fill="#3c6bc6" stroke="#b8b040" stroke-width="0.5"/><circle cx="87.3" cy="61.3" r="1.2" fill="#c8187a"/><polygon points="123.3,86.1 118.4,89.1 114.0,85.3 116.2,80.0 122.0,80.5" fill="#98b0e0" stroke="#b8b040" stroke-width="0.5"/><circle cx="118.8" cy="84.2" r="1.2" fill="#c8187a"/><polygon points="117.0,80.3 122.7,79.8 124.9,85.2 120.5,88.9 115.6,85.9" fill="#3c6bc6" stroke="#b8b040" stroke-width="0.5"/><circle cx="120.1" cy="84.0" r="1.2" fill="#c8187a"/><polygon points="58.8,141.7 64.2,139.9 67.7,144.6 64.3,149.3 58.8,147.5" fill="#3c6bc6" stroke="#b8b040" stroke-width="0.5"/><circle cx="62.8" cy="144.6" r="1.2" fill="#c8187a"/><polygon points="143.2,51.6 137.5,50.6 136.7,44.9 141.8,42.4 145.8,46.5" fill="#3c6bc6" stroke="#b8b040" stroke-width="0.5"/><circle cx="141.0" cy="47.2" r="1.2" fill="#c8187a"/><polygon points="116.9,92.1 121.3,95.7 119.2,101.1 113.5,100.8 112.0,95.2" fill="#3c6bc6" stroke="#b8b040" stroke-width="0.5"/><circle cx="116.6" cy="97.0" r="1.2" fill="#c8187a"/><polygon points="111.5,93.2 117.2,92.7 119.5,98.0 115.2,101.8 110.2,98.9" fill="#3c6bc6" stroke="#b8b040" stroke-width="0.5"/><circle cx="114.7" cy="96.9" r="1.2" fill="#c8187a"/><polygon points="171.7,130.0 177.3,128.5 180.4,133.4 176.8,137.9 171.4,135.8" fill="#3c6bc6" stroke="#b8b040" stroke-width="0.5"/><circle cx="175.5" cy="133.1" r="1.2" fill="#c8187a"/><polygon points="176.2,126.5 181.8,128.0 182.1,133.7 176.8,135.8 173.1,131.4" fill="#3c6bc6" stroke="#b8b040" stroke-width="0.5"/><circle cx="178.0" cy="131.1" r="1.2" fill="#c8187a"/><polygon points="148.5,33.9 148.4,28.1 153.8,26.2 157.3,30.8 154.1,35.5" fill="#3c6bc6" stroke="#b8b040" stroke-width="0.5"/><circle cx="152.4" cy="30.9" r="1.2" fill="#c8187a"/><polygon points="148.6,34.6 151.7,29.7 157.3,31.1 157.7,36.9 152.3,39.0" fill="#3c6bc6" stroke="#b8b040" stroke-width="0.5"/><circle cx="153.5" cy="34.3" r="1.2" fill="#c8187a"/><polygon points="154.3,23.0 158.3,27.1 155.6,32.2 149.9,31.2 149.1,25.5" fill="#3c6bc6" stroke="#b8b040" stroke-width="0.5"/><circle cx="153.4" cy="27.8" r="1.2" fill="#c8187a"/><polygon points="95.4,13.0 96.5,7.3 102.3,6.7 104.6,11.9 100.4,15.8" fill="#3c6bc6" stroke="#b8b040" stroke-width="0.5"/><circle cx="99.8" cy="10.9" r="1.2" fill="#c8187a"/><polygon points="95.6,16.0 92.4,11.2 96.0,6.7 101.4,8.7 101.1,14.5" fill="#3c6bc6" stroke="#b8b040" stroke-width="0.5"/><circle cx="97.3" cy="11.4" r="1.2" fill="#c8187a"/><polygon points="102.4,12.8 96.6,13.2 94.4,7.9 98.8,4.2 103.7,7.2" fill="#3c6bc6" stroke="#b8b040" stroke-width="0.5"/><circle cx="99.2" cy="9.1" r="1.2" fill="#c8187a"/><polygon points="136.8,143.9 131.2,142.5 130.8,136.7 136.2,134.6 139.9,139.0" fill="#3c6bc6" stroke="#b8b040" stroke-width="0.5"/><circle cx="135.0" cy="139.3" r="1.2" fill="#c8187a"/><polygon points="131.3,140.1 136.6,138.0 140.3,142.5 137.2,147.3 131.6,145.9" fill="#98b0e0" stroke="#b8b040" stroke-width="0.5"/><circle cx="135.4" cy="142.8" r="1.2" fill="#c8187a"/><polygon points="139.6,140.3 133.9,141.0 131.4,135.8 135.6,131.8 140.7,134.6" fill="#3c6bc6" stroke="#b8b040" stroke-width="0.5"/><circle cx="136.3" cy="136.7" r="1.2" fill="#c8187a"/><polygon points="116.2,154.1 121.0,157.4 119.2,162.9 113.5,163.0 111.6,157.5" fill="#98b0e0" stroke="#b8b040" stroke-width="0.5"/><circle cx="116.3" cy="159.0" r="1.2" fill="#c8187a"/><polygon points="115.9,154.2 121.5,155.6 121.9,161.3 116.6,163.5 112.9,159.1" fill="#3c6bc6" stroke="#b8b040" stroke-width="0.5"/><circle cx="117.7" cy="158.8" r="1.2" fill="#c8187a"/><polygon points="61.4,124.4 66.8,122.3 70.4,126.8 67.3,131.6 61.7,130.2" fill="#98b0e0" stroke="#b8b040" stroke-width="0.5"/><circle cx="65.5" cy="127.1" r="1.2" fill="#c8187a"/><polygon points="116.3,109.2 116.7,103.5 122.3,102.1 125.4,107.0 121.7,111.4" fill="#98b0e0" stroke="#b8b040" stroke-width="0.5"/><circle cx="120.5" cy="106.6" r="1.2" fill="#c8187a"/><polygon points="121.0,113.3 115.3,112.9 113.8,107.3 118.7,104.2 123.1,107.9" fill="#98b0e0" stroke="#b8b040" stroke-width="0.5"/><circle cx="118.4" cy="109.1" r="1.2" fill="#c8187a"/><polygon points="123.7,108.6 118.4,110.9 114.6,106.6 117.6,101.6 123.2,102.9" fill="#3c6bc6" stroke="#b8b040" stroke-width="0.5"/><circle cx="119.5" cy="106.1" r="1.2" fill="#c8187a"/><polygon points="17.1,132.9 11.8,130.8 12.1,125.1 17.7,123.6 20.8,128.4" fill="#3c6bc6" stroke="#b8b040" stroke-width="0.5"/><circle cx="15.9" cy="128.2" r="1.2" fill="#c8187a"/><polygon points="169.8,53.2 167.7,58.5 162.0,58.1 160.5,52.6 165.4,49.5" fill="#3c6bc6" stroke="#b8b040" stroke-width="0.5"/><circle cx="165.1" cy="54.4" r="1.2" fill="#c8187a"/><polygon points="79.1,127.2 74.8,123.3 77.2,118.1 82.9,118.7 84.1,124.4" fill="#3c6bc6" stroke="#b8b040" stroke-width="0.5"/><circle cx="79.6" cy="122.4" r="1.2" fill="#c8187a"/><polygon points="4.7,82.5 10.3,81.2 13.3,86.1 9.6,90.5 4.2,88.3" fill="#3c6bc6" stroke="#b8b040" stroke-width="0.5"/><circle cx="8.4" cy="85.7" r="1.2" fill="#c8187a"/><polygon points="5.6,78.1 11.2,79.2 11.9,84.9 6.7,87.4 2.8,83.2" fill="#3c6bc6" stroke="#b8b040" stroke-width="0.5"/><circle cx="7.6" cy="82.6" r="1.2" fill="#c8187a"/><polygon points="7.2,84.1 12.7,82.3 16.1,86.9 12.8,91.6 7.3,89.9" fill="#3c6bc6" stroke="#b8b040" stroke-width="0.5"/><circle cx="11.2" cy="86.9" r="1.2" fill="#c8187a"/><polygon points="38.6,20.1 41.8,24.9 38.3,29.4 32.9,27.5 33.1,21.7" fill="#3c6bc6" stroke="#b8b040" stroke-width="0.5"/><circle cx="36.9" cy="24.7" r="1.2" fill="#c8187a"/><polygon points="32.4,19.4 37.3,16.4 41.7,20.3 39.3,25.5 33.6,25.0" fill="#3c6bc6" stroke="#b8b040" stroke-width="0.5"/><circle cx="36.9" cy="21.3" r="1.2" fill="#c8187a"/><polygon points="10.7,140.7 13.4,135.6 19.1,136.5 19.9,142.2 14.7,144.8" fill="#98b0e0" stroke="#b8b040" stroke-width="0.5"/><circle cx="15.6" cy="140.0" r="1.2" fill="#c8187a"/><polygon points="84.8,155.6 84.4,161.4 78.8,162.8 75.7,157.9 79.4,153.5" fill="#3c6bc6" stroke="#b8b040" stroke-width="0.5"/><circle cx="80.6" cy="158.2" r="1.2" fill="#c8187a"/><polygon points="17.7,79.1 23.3,80.1 24.1,85.8 18.9,88.3 14.9,84.2" fill="#3c6bc6" stroke="#b8b040" stroke-width="0.5"/><circle cx="19.8" cy="83.5" r="1.2" fill="#c8187a"/><polygon points="23.5,79.3 26.1,84.5 21.9,88.5 16.8,85.8 17.8,80.2" fill="#98b0e0" stroke="#b8b040" stroke-width="0.5"/><circle cx="21.2" cy="83.7" r="1.2" fill="#c8187a"/><polygon points="169.0,159.0 164.0,161.8 159.8,157.8 162.2,152.6 167.9,153.4" fill="#3c6bc6" stroke="#b8b040" stroke-width="0.5"/><circle cx="164.6" cy="156.9" r="1.2" fill="#c8187a"/><polygon points="53.8,78.4 56.2,73.2 61.9,74.0 63.0,79.6 57.9,82.4" fill="#3c6bc6" stroke="#b8b040" stroke-width="0.5"/><circle cx="58.6" cy="77.5" r="1.2" fill="#c8187a"/><polygon points="59.5,75.4 61.5,80.8 57.0,84.4 52.2,81.2 53.7,75.7" fill="#98b0e0" stroke="#b8b040" stroke-width="0.5"/><circle cx="56.8" cy="79.5" r="1.2" fill="#c8187a"/><polygon points="61.3,70.6 62.2,76.3 57.1,78.9 53.0,74.8 55.6,69.7" fill="#98b0e0" stroke="#b8b040" stroke-width="0.5"/><circle cx="57.8" cy="74.1" r="1.2" fill="#c8187a"/><polygon points="48.2,50.0 44.6,45.5 47.8,40.7 53.3,42.3 53.5,48.0" fill="#3c6bc6" stroke="#b8b040" stroke-width="0.5"/><circle cx="49.5" cy="45.3" r="1.2" fill="#c8187a"/><polygon points="45.0,47.3 46.9,41.9 52.7,42.0 54.3,47.6 49.6,50.8" fill="#98b0e0" stroke="#b8b040" stroke-width="0.5"/><circle cx="49.7" cy="45.9" r="1.2" fill="#c8187a"/><polygon points="98.5,113.1 94.3,109.3 96.6,104.0 102.3,104.6 103.5,110.3" fill="#3c6bc6" stroke="#b8b040" stroke-width="0.5"/><circle cx="99.1" cy="108.3" r="1.2" fill="#c8187a"/><polygon points="60.1,3.1 58.4,8.6 52.7,8.7 50.8,3.3 55.4,-0.2" fill="#3c6bc6" stroke="#b8b040" stroke-width="0.5"/><circle cx="55.5" cy="4.7" r="1.2" fill="#c8187a"/><polygon points="88.3,65.0 91.0,70.0 87.0,74.2 81.8,71.7 82.6,66.0" fill="#3c6bc6" stroke="#b8b040" stroke-width="0.5"/><circle cx="86.1" cy="69.4" r="1.2" fill="#c8187a"/><polygon points="91.0,67.5 93.9,72.5 90.0,76.8 84.8,74.5 85.3,68.7" fill="#3c6bc6" stroke="#b8b040" stroke-width="0.5"/><circle cx="89.0" cy="72.0" r="1.2" fill="#c8187a"/><polygon points="93.0,70.3 90.2,75.4 84.6,74.4 83.8,68.7 89.0,66.2" fill="#98b0e0" stroke="#b8b040" stroke-width="0.5"/><circle cx="88.1" cy="71.0" r="1.2" fill="#c8187a"/><polygon points="115.6,167.8 119.8,171.8 117.4,177.0 111.7,176.3 110.6,170.6" fill="#3c6bc6" stroke="#b8b040" stroke-width="0.5"/><circle cx="115.0" cy="172.7" r="1.2" fill="#c8187a"/><polygon points="118.2,172.6 114.3,176.9 109.1,174.5 109.7,168.8 115.3,167.6" fill="#98b0e0" stroke="#b8b040" stroke-width="0.5"/><circle cx="113.3" cy="172.1" r="1.2" fill="#c8187a"/><polygon points="140.7,100.0 135.3,98.0 135.5,92.2 141.0,90.6 144.2,95.4" fill="#3c6bc6" stroke="#b8b040" stroke-width="0.5"/><circle cx="139.3" cy="95.2" r="1.2" fill="#c8187a"/><polygon points="128.8,126.8 123.3,128.3 120.2,123.4 123.8,119.0 129.2,121.0" fill="#98b0e0" stroke="#b8b040" stroke-width="0.5"/><circle cx="125.0" cy="123.7" r="1.2" fill="#c8187a"/><polygon points="121.8,117.4 127.4,119.0 127.6,124.8 122.2,126.7 118.6,122.2" fill="#3c6bc6" stroke="#b8b040" stroke-width="0.5"/><circle cx="123.5" cy="122.0" r="1.2" fill="#c8187a"/><polygon points="14.7,158.3 19.3,161.8 17.4,167.2 11.6,167.1 9.9,161.6" fill="#98b0e0" stroke="#b8b040" stroke-width="0.5"/><circle cx="14.6" cy="163.2" r="1.2" fill="#c8187a"/><polygon points="19.4,161.3 20.0,167.1 14.7,169.4 10.9,165.1 13.8,160.1" fill="#98b0e0" stroke="#b8b040" stroke-width="0.5"/><circle cx="15.8" cy="164.6" r="1.2" fill="#c8187a"/><polygon points="156.7,70.2 162.3,69.0 165.3,73.9 161.4,78.2 156.2,75.9" fill="#98b0e0" stroke="#b8b040" stroke-width="0.5"/><circle cx="160.4" cy="73.5" r="1.2" fill="#c8187a"/><polygon points="157.7,71.3 163.1,69.2 166.8,73.6 163.7,78.5 158.1,77.0" fill="#3c6bc6" stroke="#b8b040" stroke-width="0.5"/><circle cx="161.9" cy="73.9" r="1.2" fill="#c8187a"/><polygon points="167.6,76.5 162.6,79.4 158.3,75.5 160.7,70.2 166.4,70.9" fill="#98b0e0" stroke="#b8b040" stroke-width="0.5"/><circle cx="163.1" cy="74.5" r="1.2" fill="#c8187a"/><polygon points="86.6,20.2 85.6,25.8 79.9,26.7 77.4,21.5 81.5,17.5" fill="#3c6bc6" stroke="#b8b040" stroke-width="0.5"/><circle cx="82.2" cy="22.3" r="1.2" fill="#c8187a"/><polygon points="79.1,15.5 84.9,15.3 86.9,20.8 82.3,24.3 77.5,21.1" fill="#98b0e0" stroke="#b8b040" stroke-width="0.5"/><circle cx="82.2" cy="19.4" r="1.2" fill="#c8187a"/><polygon points="81.1,20.4 86.4,22.7 85.8,28.4 80.2,29.7 77.3,24.7" fill="#98b0e0" stroke="#b8b040" stroke-width="0.5"/><circle cx="82.1" cy="25.2" r="1.2" fill="#c8187a"/><polygon points="129.3,10.2 133.2,14.5 130.3,19.5 124.7,18.3 124.1,12.6" fill="#3c6bc6" stroke="#b8b040" stroke-width="0.5"/><circle cx="128.3" cy="15.0" r="1.2" fill="#c8187a"/><polygon points="123.3,15.7 126.4,10.9 132.0,12.3 132.3,18.1 126.9,20.2" fill="#98b0e0" stroke="#b8b040" stroke-width="0.5"/><circle cx="128.2" cy="15.4" r="1.2" fill="#c8187a"/><polygon points="12.8,38.7 18.0,36.1 22.0,40.2 19.4,45.3 13.7,44.4" fill="#98b0e0" stroke="#b8b040" stroke-width="0.5"/><circle cx="17.2" cy="41.0" r="1.2" fill="#c8187a"/><polygon points="36.6,69.0 31.4,66.4 32.4,60.7 38.1,59.8 40.6,65.0" fill="#98b0e0" stroke="#b8b040" stroke-width="0.5"/><circle cx="35.8" cy="64.2" r="1.2" fill="#c8187a"/><polygon points="35.0,58.7 38.9,63.0 36.0,68.0 30.3,66.7 29.8,61.0" fill="#98b0e0" stroke="#b8b040" stroke-width="0.5"/><circle cx="34.0" cy="63.5" r="1.2" fill="#c8187a"/><polygon points="29.6,62.4 31.3,56.9 37.0,56.8 38.9,62.2 34.4,65.7" fill="#98b0e0" stroke="#b8b040" stroke-width="0.5"/><circle cx="34.2" cy="60.8" r="1.2" fill="#c8187a"/><polygon points="16.2,8.6 10.6,7.2 10.1,1.5 15.5,-0.7 19.2,3.7" fill="#98b0e0" stroke="#b8b040" stroke-width="0.5"/><circle cx="14.3" cy="4.0" r="1.2" fill="#c8187a"/><polygon points="177.2,117.2 171.6,115.9 171.2,110.1 176.5,107.9 180.3,112.3" fill="#3c6bc6" stroke="#b8b040" stroke-width="0.5"/><circle cx="175.4" cy="112.7" r="1.2" fill="#c8187a"/><polygon points="174.2,104.4 179.2,107.3 178.0,112.9 172.3,113.5 169.9,108.2" fill="#3c6bc6" stroke="#b8b040" stroke-width="0.5"/><circle cx="174.7" cy="109.3" r="1.2" fill="#c8187a"/><polygon points="50.6,61.5 56.3,61.5 58.1,67.0 53.4,70.4 48.8,67.0" fill="#98b0e0" stroke="#b8b040" stroke-width="0.5"/><circle cx="53.4" cy="65.5" r="1.2" fill="#c8187a"/><polygon points="175.2,178.7 172.9,184.0 167.1,183.4 165.9,177.8 170.9,174.9" fill="#3c6bc6" stroke="#b8b040" stroke-width="0.5"/><circle cx="170.4" cy="179.8" r="1.2" fill="#c8187a"/><polygon points="165.0,185.5 162.4,180.4 166.5,176.3 171.6,179.0 170.6,184.6" fill="#98b0e0" stroke="#b8b040" stroke-width="0.5"/><circle cx="167.2" cy="181.2" r="1.2" fill="#c8187a"/><polygon points="94.1,84.9 99.5,87.0 99.1,92.8 93.5,94.2 90.4,89.3" fill="#3c6bc6" stroke="#b8b040" stroke-width="0.5"/><circle cx="95.3" cy="89.6" r="1.2" fill="#c8187a"/><polygon points="66.5,52.4 68.3,46.9 74.1,46.9 75.8,52.4 71.1,55.8" fill="#98b0e0" stroke="#b8b040" stroke-width="0.5"/><circle cx="71.2" cy="50.9" r="1.2" fill="#c8187a"/><polygon points="74.4,54.0 68.8,52.6 68.3,46.9 73.7,44.7 77.4,49.1" fill="#3c6bc6" stroke="#b8b040" stroke-width="0.5"/><circle cx="72.5" cy="49.5" r="1.2" fill="#c8187a"/><polygon points="38.4,12.1 32.7,12.0 31.0,6.5 35.7,3.2 40.3,6.7" fill="#98b0e0" stroke="#b8b040" stroke-width="0.5"/><circle cx="35.6" cy="8.1" r="1.2" fill="#c8187a"/><polygon points="28.9,9.0 31.3,3.8 37.0,4.4 38.2,10.0 33.2,12.9" fill="#3c6bc6" stroke="#b8b040" stroke-width="0.5"/><circle cx="33.7" cy="8.0" r="1.2" fill="#c8187a"/><polygon points="41.5,141.8 37.1,145.5 32.2,142.5 33.6,136.9 39.3,136.5" fill="#3c6bc6" stroke="#b8b040" stroke-width="0.5"/><circle cx="36.7" cy="140.6" r="1.2" fill="#c8187a"/><polygon points="40.0,143.6 34.5,145.5 31.0,140.9 34.3,136.2 39.8,137.8" fill="#3c6bc6" stroke="#b8b040" stroke-width="0.5"/><circle cx="35.9" cy="140.8" r="1.2" fill="#c8187a"/><polygon points="109.2,146.7 104.0,144.2 104.9,138.5 110.6,137.5 113.2,142.6" fill="#98b0e0" stroke="#b8b040" stroke-width="0.5"/><circle cx="108.4" cy="141.9" r="1.2" fill="#c8187a"/><polygon points="103.9,138.5 107.9,134.4 113.0,136.9 112.3,142.6 106.6,143.6" fill="#3c6bc6" stroke="#b8b040" stroke-width="0.5"/><circle cx="108.7" cy="139.2" r="1.2" fill="#c8187a"/><polygon points="164.6,139.9 159.8,136.7 161.4,131.1 167.1,130.9 169.1,136.3" fill="#3c6bc6" stroke="#b8b040" stroke-width="0.5"/><circle cx="164.4" cy="135.0" r="1.2" fill="#c8187a"/><polygon points="46.9,91.0 52.4,92.7 52.4,98.5 46.9,100.3 43.5,95.6" fill="#3c6bc6" stroke="#b8b040" stroke-width="0.5"/><circle cx="48.4" cy="95.6" r="1.2" fill="#c8187a"/><polygon points="10.2,48.6 14.3,52.6 11.8,57.8 6.1,57.0 5.1,51.3" fill="#3c6bc6" stroke="#b8b040" stroke-width="0.5"/><circle cx="9.5" cy="53.5" r="1.2" fill="#c8187a"/><polygon points="12.2,55.2 6.6,54.0 6.0,48.3 11.2,46.0 15.1,50.2" fill="#98b0e0" stroke="#b8b040" stroke-width="0.5"/><circle cx="10.2" cy="50.8" r="1.2" fill="#c8187a"/><polygon points="59.7,127.2 55.7,131.4 50.5,128.9 51.3,123.2 56.9,122.2" fill="#98b0e0" stroke="#b8b040" stroke-width="0.5"/><circle cx="54.8" cy="126.6" r="1.2" fill="#c8187a"/><polygon points="60.2,129.8 54.5,129.3 53.2,123.7 58.1,120.7 62.5,124.5" fill="#3c6bc6" stroke="#b8b040" stroke-width="0.5"/><circle cx="57.7" cy="125.6" r="1.2" fill="#c8187a"/><polygon points="187.1,80.9 192.3,78.3 196.3,82.4 193.7,87.5 188.0,86.6" fill="#3c6bc6" stroke="#b8b040" stroke-width="0.5"/><circle cx="191.5" cy="83.2" r="1.2" fill="#c8187a"/><polygon points="172.3,85.6 173.0,91.3 167.8,93.7 163.9,89.4 166.7,84.4" fill="#98b0e0" stroke="#b8b040" stroke-width="0.5"/><circle cx="168.7" cy="88.9" r="1.2" fill="#c8187a"/><polygon points="186.0,139.3 186.5,145.0 181.2,147.2 177.4,142.9 180.4,138.0" fill="#98b0e0" stroke="#b8b040" stroke-width="0.5"/><circle cx="182.3" cy="142.5" r="1.2" fill="#c8187a"/><polygon points="174.8,137.3 180.2,135.2 183.8,139.7 180.6,144.5 175.1,143.0" fill="#3c6bc6" stroke="#b8b040" stroke-width="0.5"/><circle cx="178.9" cy="140.0" r="1.2" fill="#c8187a"/><polygon points="102.2,37.6 97.1,40.5 92.9,36.6 95.3,31.3 101.0,32.0" fill="#3c6bc6" stroke="#b8b040" stroke-width="0.5"/><circle cx="97.7" cy="35.6" r="1.2" fill="#c8187a"/><polygon points="102.1,39.4 97.3,42.6 92.8,39.0 94.8,33.6 100.6,33.8" fill="#3c6bc6" stroke="#b8b040" stroke-width="0.5"/><circle cx="97.5" cy="37.7" r="1.2" fill="#c8187a"/><polygon points="105.5,33.0 104.2,38.6 98.5,39.1 96.2,33.9 100.5,30.0" fill="#98b0e0" stroke="#b8b040" stroke-width="0.5"/><circle cx="101.0" cy="34.9" r="1.2" fill="#c8187a"/><polygon points="163.5,63.4 159.7,67.6 154.4,65.3 155.0,59.6 160.6,58.4" fill="#3c6bc6" stroke="#b8b040" stroke-width="0.5"/><circle cx="158.7" cy="62.9" r="1.2" fill="#c8187a"/><polygon points="151.2,64.7 152.4,59.1 158.1,58.5 160.4,63.8 156.2,67.6" fill="#98b0e0" stroke="#b8b040" stroke-width="0.5"/><circle cx="155.6" cy="62.8" r="1.2" fill="#c8187a"/><polygon points="158.1,179.9 156.3,174.4 161.0,171.1 165.6,174.5 163.8,180.0" fill="#98b0e0" stroke="#b8b040" stroke-width="0.5"/><circle cx="161.0" cy="176.0" r="1.2" fill="#c8187a"/><polygon points="159.6,181.1 159.4,175.4 164.8,173.4 168.3,177.9 165.1,182.7" fill="#3c6bc6" stroke="#b8b040" stroke-width="0.5"/><circle cx="163.4" cy="178.1" r="1.2" fill="#c8187a"/><polygon points="33.7,31.5 29.7,35.6 24.5,33.0 25.4,27.3 31.1,26.4" fill="#98b0e0" stroke="#b8b040" stroke-width="0.5"/><circle cx="28.9" cy="30.8" r="1.2" fill="#c8187a"/><polygon points="26.0,26.9 31.5,25.1 34.9,29.8 31.5,34.4 26.0,32.7" fill="#3c6bc6" stroke="#b8b040" stroke-width="0.5"/><circle cx="30.0" cy="29.8" r="1.2" fill="#c8187a"/><polygon points="132.2,61.2 137.3,64.0 136.2,69.6 130.4,70.3 128.0,65.1" fill="#3c6bc6" stroke="#b8b040" stroke-width="0.5"/><circle cx="132.8" cy="66.0" r="1.2" fill="#c8187a"/><polygon points="128.6,62.1 133.0,58.4 137.9,61.4 136.5,67.0 130.8,67.4" fill="#3c6bc6" stroke="#b8b040" stroke-width="0.5"/><circle cx="133.4" cy="63.2" r="1.2" fill="#c8187a"/><polygon points="129.9,59.5 135.7,59.5 137.5,65.0 132.8,68.3 128.1,65.0" fill="#3c6bc6" stroke="#b8b040" stroke-width="0.5"/><circle cx="132.8" cy="63.4" r="1.2" fill="#c8187a"/><polygon points="56.0,51.7 58.1,57.1 53.7,60.7 48.8,57.7 50.2,52.1" fill="#3c6bc6" stroke="#b8b040" stroke-width="0.5"/><circle cx="53.4" cy="55.9" r="1.2" fill="#c8187a"/><polygon points="55.6,109.7 50.7,112.7 46.4,108.9 48.6,103.6 54.4,104.1" fill="#3c6bc6" stroke="#b8b040" stroke-width="0.5"/><circle cx="51.1" cy="107.8" r="1.2" fill="#c8187a"/><polygon points="32.7,168.9 27.0,169.1 25.0,163.7 29.5,160.2 34.3,163.4" fill="#3c6bc6" stroke="#b8b040" stroke-width="0.5"/><circle cx="29.7" cy="165.1" r="1.2" fill="#c8187a"/><polygon points="29.9,167.5 24.2,167.8 22.1,162.4 26.6,158.8 31.4,161.9" fill="#98b0e0" stroke="#b8b040" stroke-width="0.5"/><circle cx="26.8" cy="163.7" r="1.2" fill="#c8187a"/><polygon points="69.3,82.3 74.8,80.4 78.2,85.0 75.0,89.7 69.4,88.1" fill="#98b0e0" stroke="#b8b040" stroke-width="0.5"/><circle cx="73.3" cy="85.1" r="1.2" fill="#c8187a"/><polygon points="88.9,162.2 91.2,167.5 86.9,171.3 81.9,168.4 83.2,162.8" fill="#3c6bc6" stroke="#b8b040" stroke-width="0.5"/><circle cx="86.4" cy="166.4" r="1.2" fill="#c8187a"/><polygon points="94.5,164.9 90.3,168.7 85.3,165.8 86.5,160.2 92.2,159.6" fill="#3c6bc6" stroke="#b8b040" stroke-width="0.5"/><circle cx="89.7" cy="163.9" r="1.2" fill="#c8187a"/><polygon points="84.0,167.1 86.5,161.8 92.2,162.6 93.3,168.2 88.2,171.0" fill="#3c6bc6" stroke="#b8b040" stroke-width="0.5"/><circle cx="88.9" cy="166.1" r="1.2" fill="#c8187a"/><polygon points="100.8,129.5 100.8,135.2 95.3,137.0 91.9,132.4 95.3,127.7" fill="#98b0e0" stroke="#b8b040" stroke-width="0.5"/><circle cx="96.8" cy="132.4" r="1.2" fill="#c8187a"/><polygon points="101.2,132.8 96.2,135.6 91.9,131.7 94.3,126.5 100.0,127.1" fill="#98b0e0" stroke="#b8b040" stroke-width="0.5"/><circle cx="96.7" cy="130.7" r="1.2" fill="#c8187a"/><polygon points="117.8,60.4 115.8,65.8 110.0,65.5 108.5,60.0 113.3,56.8" fill="#3c6bc6" stroke="#b8b040" stroke-width="0.5"/><circle cx="113.1" cy="61.7" r="1.2" fill="#c8187a"/><polygon points="162.4,24.1 157.9,27.7 153.1,24.4 154.7,18.9 160.5,18.7" fill="#3c6bc6" stroke="#b8b040" stroke-width="0.5"/><circle cx="157.7" cy="22.8" r="1.2" fill="#c8187a"/><polygon points="155.5,22.2 161.1,20.7 164.2,25.6 160.5,30.0 155.2,27.9" fill="#98b0e0" stroke="#b8b040" stroke-width="0.5"/><circle cx="159.3" cy="25.3" r="1.2" fill="#c8187a"/><polygon points="110.4,44.5 116.1,43.6 118.6,48.8 114.5,52.8 109.4,50.2" fill="#3c6bc6" stroke="#b8b040" stroke-width="0.5"/><circle cx="113.8" cy="48.0" r="1.2" fill="#c8187a"/><polygon points="153.8,160.7 157.8,164.8 155.1,169.9 149.5,168.9 148.6,163.2" fill="#3c6bc6" stroke="#b8b040" stroke-width="0.5"/><circle cx="153.0" cy="165.5" r="1.2" fill="#c8187a"/><polygon points="151.6,160.5 156.3,157.1 160.9,160.5 159.1,166.0 153.4,166.0" fill="#3c6bc6" stroke="#b8b040" stroke-width="0.5"/><circle cx="156.3" cy="162.0" r="1.2" fill="#c8187a"/><polygon points="147.8,163.3 151.2,158.6 156.7,160.4 156.7,166.2 151.2,167.9" fill="#3c6bc6" stroke="#b8b040" stroke-width="0.5"/><circle cx="152.7" cy="163.3" r="1.2" fill="#c8187a"/><polygon points="94.9,166.6 100.6,166.7 102.3,172.2 97.6,175.5 93.0,172.1" fill="#3c6bc6" stroke="#b8b040" stroke-width="0.5"/><circle cx="97.7" cy="170.6" r="1.2" fill="#c8187a"/><polygon points="145.9,160.0 141.7,164.0 136.6,161.3 137.6,155.6 143.4,154.8" fill="#98b0e0" stroke="#b8b040" stroke-width="0.5"/><circle cx="141.0" cy="159.1" r="1.2" fill="#c8187a"/><polygon points="29.4,130.8 32.7,126.1 38.2,127.8 38.3,133.6 32.8,135.4" fill="#3c6bc6" stroke="#b8b040" stroke-width="0.5"/><circle cx="34.3" cy="130.8" r="1.2" fill="#c8187a"/><polygon points="39.6,124.3 42.4,129.3 38.5,133.5 33.3,131.1 34.0,125.4" fill="#3c6bc6" stroke="#b8b040" stroke-width="0.5"/><circle cx="37.6" cy="128.7" r="1.2" fill="#c8187a"/><polygon points="34.9,126.9 36.2,132.5 31.2,135.4 26.9,131.6 29.2,126.3" fill="#98b0e0" stroke="#b8b040" stroke-width="0.5"/><circle cx="31.7" cy="130.6" r="1.2" fill="#c8187a"/><polygon points="128.5,29.8 131.4,24.8 137.1,26.0 137.6,31.8 132.4,34.1" fill="#3c6bc6" stroke="#b8b040" stroke-width="0.5"/><circle cx="133.4" cy="29.3" r="1.2" fill="#c8187a"/><polygon points="127.9,33.0 128.3,27.3 133.9,25.9 136.9,30.8 133.2,35.2" fill="#3c6bc6" stroke="#b8b040" stroke-width="0.5"/><circle cx="132.0" cy="30.4" r="1.2" fill="#c8187a"/><polygon points="146.3,12.3 141.2,9.7 142.1,4.0 147.7,3.1 150.4,8.2" fill="#3c6bc6" stroke="#b8b040" stroke-width="0.5"/><circle cx="145.5" cy="7.4" r="1.2" fill="#c8187a"/><polygon points="138.7,8.3 140.8,3.0 146.6,3.4 148.0,9.0 143.1,12.0" fill="#3c6bc6" stroke="#b8b040" stroke-width="0.5"/><circle cx="143.4" cy="7.1" r="1.2" fill="#c8187a"/><polygon points="130.6,96.9 125.5,99.5 121.4,95.4 124.1,90.3 129.8,91.2" fill="#98b0e0" stroke="#b8b040" stroke-width="0.5"/><circle cx="126.3" cy="94.7" r="1.2" fill="#c8187a"/><polygon points="124.1,89.4 128.6,92.9 126.7,98.3 120.9,98.1 119.3,92.6" fill="#3c6bc6" stroke="#b8b040" stroke-width="0.5"/><circle cx="123.9" cy="94.2" r="1.2" fill="#c8187a"/><polygon points="121.2,91.9 124.4,87.1 130.0,88.7 130.2,94.4 124.8,96.4" fill="#98b0e0" stroke="#b8b040" stroke-width="0.5"/><circle cx="126.1" cy="91.7" r="1.2" fill="#c8187a"/><polygon points="14.5,173.9 20.2,175.0 20.9,180.7 15.7,183.2 11.7,179.0" fill="#3c6bc6" stroke="#b8b040" stroke-width="0.5"/><circle cx="16.6" cy="178.4" r="1.2" fill="#c8187a"/><polygon points="19.3,177.0 18.3,182.6 12.5,183.4 10.1,178.2 14.3,174.2" fill="#98b0e0" stroke="#b8b040" stroke-width="0.5"/><circle cx="14.9" cy="179.1" r="1.2" fill="#c8187a"/><polygon points="22.7,178.6 16.9,179.0 14.8,173.7 19.2,170.0 24.1,173.0" fill="#3c6bc6" stroke="#b8b040" stroke-width="0.5"/><circle cx="19.5" cy="174.9" r="1.2" fill="#c8187a"/><polygon points="52.2,26.1 56.3,22.1 61.4,24.7 60.4,30.4 54.8,31.3" fill="#3c6bc6" stroke="#b8b040" stroke-width="0.5"/><circle cx="57.0" cy="26.9" r="1.2" fill="#c8187a"/><polygon points="55.8,25.5 61.4,27.1 61.5,32.9 56.1,34.8 52.6,30.3" fill="#3c6bc6" stroke="#b8b040" stroke-width="0.5"/><circle cx="57.5" cy="30.1" r="1.2" fill="#c8187a"/><polygon points="111.0,128.8 113.6,123.6 119.3,124.5 120.2,130.2 115.1,132.8" fill="#3c6bc6" stroke="#b8b040" stroke-width="0.5"/><circle cx="115.8" cy="128.0" r="1.2" fill="#c8187a"/><polygon points="115.7,120.4 118.3,125.5 114.2,129.6 109.1,126.9 110.0,121.2" fill="#98b0e0" stroke="#b8b040" stroke-width="0.5"/><circle cx="113.5" cy="124.7" r="1.2" fill="#c8187a"/><polygon points="143.3,81.5 138.1,84.1 134.0,80.0 136.7,74.9 142.4,75.8" fill="#3c6bc6" stroke="#b8b040" stroke-width="0.5"/><circle cx="138.9" cy="79.3" r="1.2" fill="#c8187a"/><polygon points="137.7,74.8 142.6,77.9 141.2,83.5 135.4,83.9 133.3,78.5" fill="#3c6bc6" stroke="#b8b040" stroke-width="0.5"/><circle cx="138.0" cy="79.7" r="1.2" fill="#c8187a"/><polygon points="23.4,151.7 25.0,157.2 20.3,160.5 15.7,156.9 17.6,151.5" fill="#98b0e0" stroke="#b8b040" stroke-width="0.5"/><circle cx="20.4" cy="155.6" r="1.2" fill="#c8187a"/><polygon points="58.5,96.8 56.0,91.6 60.2,87.7 65.3,90.4 64.2,96.1" fill="#3c6bc6" stroke="#b8b040" stroke-width="0.5"/><circle cx="60.8" cy="92.5" r="1.2" fill="#c8187a"/><polygon points="60.8,90.7 65.6,93.9 64.1,99.4 58.3,99.7 56.3,94.3" fill="#3c6bc6" stroke="#b8b040" stroke-width="0.5"/><circle cx="61.0" cy="95.6" r="1.2" fill="#c8187a"/><polygon points="9.5,129.5 11.8,134.8 7.5,138.6 2.5,135.8 3.7,130.1" fill="#3c6bc6" stroke="#b8b040" stroke-width="0.5"/><circle cx="7.0" cy="133.8" r="1.2" fill="#c8187a"/><polygon points="107.3,36.3 111.7,32.6 116.6,35.7 115.1,41.3 109.4,41.7" fill="#98b0e0" stroke="#b8b040" stroke-width="0.5"/><circle cx="112.0" cy="37.5" r="1.2" fill="#c8187a"/><polygon points="110.3,35.0 114.7,38.7 112.6,44.0 106.8,43.6 105.4,38.0" fill="#3c6bc6" stroke="#b8b040" stroke-width="0.5"/><circle cx="110.0" cy="39.9" r="1.2" fill="#c8187a"/><polygon points="113.4,44.3 107.6,44.8 105.4,39.5 109.8,35.7 114.7,38.7" fill="#98b0e0" stroke="#b8b040" stroke-width="0.5"/><circle cx="110.2" cy="40.6" r="1.2" fill="#c8187a"/><polygon points="147.4,117.0 143.7,121.3 138.3,119.1 138.8,113.4 144.4,112.0" fill="#3c6bc6" stroke="#b8b040" stroke-width="0.5"/><circle cx="142.5" cy="116.6" r="1.2" fill="#c8187a"/><polygon points="145.3,119.7 141.0,123.5 136.0,120.7 137.2,115.0 142.9,114.4" fill="#98b0e0" stroke="#b8b040" stroke-width="0.5"/><circle cx="140.5" cy="118.7" r="1.2" fill="#c8187a"/><polygon points="179.4,123.8 175.1,127.6 170.1,124.6 171.4,119.0 177.1,118.5" fill="#3c6bc6" stroke="#b8b040" stroke-width="0.5"/><circle cx="174.6" cy="122.7" r="1.2" fill="#c8187a"/><polygon points="180.7,120.1 179.8,125.8 174.1,126.6 171.5,121.5 175.6,117.4" fill="#98b0e0" stroke="#b8b040" stroke-width="0.5"/><circle cx="176.4" cy="122.3" r="1.2" fill="#c8187a"/><polygon points="168.0,122.4 169.6,116.8 175.3,116.6 177.3,122.0 172.8,125.6" fill="#98b0e0" stroke="#b8b040" stroke-width="0.5"/><circle cx="172.6" cy="120.7" r="1.2" fill="#c8187a"/><polygon points="92.0,45.7 96.2,49.7 93.7,54.9 88.0,54.1 87.0,48.5" fill="#98b0e0" stroke="#b8b040" stroke-width="0.5"/><circle cx="91.4" cy="50.6" r="1.2" fill="#c8187a"/><polygon points="86.0,50.7 86.9,45.0 92.6,44.2 95.2,49.4 91.1,53.4" fill="#98b0e0" stroke="#b8b040" stroke-width="0.5"/><circle cx="90.3" cy="48.5" r="1.2" fill="#c8187a"/><polygon points="56.7,173.8 54.5,179.1 48.7,178.6 47.4,173.0 52.3,170.0" fill="#98b0e0" stroke="#b8b040" stroke-width="0.5"/><circle cx="51.9" cy="174.9" r="1.2" fill="#c8187a"/><polygon points="52.9,168.8 53.9,174.4 48.9,177.1 44.7,173.1 47.2,168.0" fill="#3c6bc6" stroke="#b8b040" stroke-width="0.5"/><circle cx="49.5" cy="172.3" r="1.2" fill="#c8187a"/><polygon points="69.2,65.3 67.8,70.9 62.1,71.3 59.9,65.9 64.3,62.2" fill="#3c6bc6" stroke="#b8b040" stroke-width="0.5"/><circle cx="64.7" cy="67.1" r="1.2" fill="#c8187a"/><polygon points="64.0,69.4 58.3,68.7 57.3,63.0 62.3,60.3 66.5,64.3" fill="#3c6bc6" stroke="#b8b040" stroke-width="0.5"/><circle cx="61.7" cy="65.1" r="1.2" fill="#c8187a"/><polygon points="-0.7,71.4 2.8,66.9 8.2,68.8 8.1,74.5 2.6,76.2" fill="#3c6bc6" stroke="#b8b040" stroke-width="0.5"/><circle cx="4.2" cy="71.5" r="1.2" fill="#c8187a"/><polygon points="123.3,130.6 128.9,129.4 131.8,134.4 128.0,138.7 122.7,136.3" fill="#98b0e0" stroke="#b8b040" stroke-width="0.5"/><circle cx="127.0" cy="133.9" r="1.2" fill="#c8187a"/><polygon points="130.3,137.1 125.1,139.6 121.1,135.5 123.8,130.4 129.5,131.4" fill="#3c6bc6" stroke="#b8b040" stroke-width="0.5"/><circle cx="125.9" cy="134.8" r="1.2" fill="#c8187a"/><polygon points="138.0,121.8 142.5,125.3 140.6,130.8 134.9,130.6 133.2,125.1" fill="#3c6bc6" stroke="#b8b040" stroke-width="0.5"/><circle cx="137.8" cy="126.7" r="1.2" fill="#c8187a"/><polygon points="55.5,12.8 58.3,17.8 54.3,22.0 49.1,19.5 49.9,13.8" fill="#3c6bc6" stroke="#b8b040" stroke-width="0.5"/><circle cx="53.4" cy="17.2" r="1.2" fill="#c8187a"/><polygon points="158.2,116.3 152.6,117.8 149.4,113.0 153.0,108.5 158.4,110.5" fill="#3c6bc6" stroke="#b8b040" stroke-width="0.5"/><circle cx="154.3" cy="113.2" r="1.2" fill="#c8187a"/><polygon points="148.2,108.4 154.0,108.0 156.1,113.4 151.7,117.1 146.8,114.0" fill="#3c6bc6" stroke="#b8b040" stroke-width="0.5"/><circle cx="151.3" cy="112.2" r="1.2" fill="#c8187a"/><polygon points="151.6,62.4 146.0,61.1 145.5,55.4 150.8,53.1 154.6,57.5" fill="#98b0e0" stroke="#b8b040" stroke-width="0.5"/><circle cx="149.7" cy="57.9" r="1.2" fill="#c8187a"/><polygon points="119.4,8.9 114.0,10.9 110.4,6.4 113.6,1.6 119.1,3.2" fill="#98b0e0" stroke="#b8b040" stroke-width="0.5"/><circle cx="115.3" cy="6.2" r="1.2" fill="#c8187a"/><polygon points="108.8,8.4 112.9,4.3 118.0,6.9 117.1,12.6 111.4,13.5" fill="#3c6bc6" stroke="#b8b040" stroke-width="0.5"/><circle cx="113.6" cy="9.2" r="1.2" fill="#c8187a"/><polygon points="31.2,101.6 27.0,97.7 29.4,92.5 35.1,93.2 36.2,98.8" fill="#3c6bc6" stroke="#b8b040" stroke-width="0.5"/><circle cx="31.8" cy="96.8" r="1.2" fill="#c8187a"/><polygon points="36.2,100.6 30.5,100.2 29.1,94.6 34.1,91.6 38.4,95.3" fill="#98b0e0" stroke="#b8b040" stroke-width="0.5"/><circle cx="33.7" cy="96.5" r="1.2" fill="#c8187a"/><polygon points="186.1,28.9 187.9,23.5 193.7,23.5 195.4,29.0 190.7,32.4" fill="#3c6bc6" stroke="#b8b040" stroke-width="0.5"/><circle cx="190.7" cy="27.5" r="1.2" fill="#c8187a"/><polygon points="196.0,24.8 192.0,28.9 186.8,26.3 187.6,20.6 193.3,19.7" fill="#3c6bc6" stroke="#b8b040" stroke-width="0.5"/><circle cx="191.1" cy="24.1" r="1.2" fill="#c8187a"/><polygon points="105.9,156.6 108.6,161.6 104.6,165.8 99.4,163.3 100.2,157.6" fill="#3c6bc6" stroke="#b8b040" stroke-width="0.5"/><circle cx="103.7" cy="161.0" r="1.2" fill="#c8187a"/><polygon points="101.3,165.6 96.5,162.3 98.2,156.8 103.9,156.7 105.8,162.1" fill="#3c6bc6" stroke="#b8b040" stroke-width="0.5"/><circle cx="101.1" cy="160.7" r="1.2" fill="#c8187a"/><polygon points="109.4,161.0 106.6,166.0 100.9,164.8 100.3,159.1 105.6,156.8" fill="#3c6bc6" stroke="#b8b040" stroke-width="0.5"/><circle cx="104.6" cy="161.6" r="1.2" fill="#c8187a"/><polygon points="163.6,25.1 167.1,20.5 172.5,22.5 172.3,28.3 166.8,29.8" fill="#98b0e0" stroke="#b8b040" stroke-width="0.5"/><circle cx="168.5" cy="25.2" r="1.2" fill="#c8187a"/><polygon points="185.4,125.3 190.2,128.5 188.6,134.1 182.8,134.3 180.9,128.9" fill="#3c6bc6" stroke="#b8b040" stroke-width="0.5"/><circle cx="185.6" cy="130.2" r="1.2" fill="#c8187a"/><polygon points="84.4,184.3 78.7,185.1 76.2,180.0 80.3,175.9 85.4,178.6" fill="#98b0e0" stroke="#b8b040" stroke-width="0.5"/><circle cx="81.0" cy="180.8" r="1.2" fill="#c8187a"/><polygon points="79.8,187.2 76.1,182.8 79.2,177.9 84.7,179.4 85.1,185.1" fill="#3c6bc6" stroke="#b8b040" stroke-width="0.5"/><circle cx="81.0" cy="182.5" r="1.2" fill="#c8187a"/><polygon points="186.8,158.9 191.5,155.6 196.1,159.1 194.2,164.5 188.5,164.4" fill="#98b0e0" stroke="#b8b040" stroke-width="0.5"/><circle cx="191.4" cy="160.5" r="1.2" fill="#c8187a"/><polygon points="189.9,157.7 195.6,156.8 198.3,161.9 194.2,166.0 189.1,163.4" fill="#3c6bc6" stroke="#b8b040" stroke-width="0.5"/><circle cx="193.4" cy="161.2" r="1.2" fill="#c8187a"/><polygon points="190.6,105.6 184.9,104.6 184.0,98.9 189.2,96.4 193.2,100.5" fill="#3c6bc6" stroke="#b8b040" stroke-width="0.5"/><circle cx="188.4" cy="101.2" r="1.2" fill="#c8187a"/><polygon points="195.2,104.3 190.0,106.8 186.1,102.6 188.8,97.5 194.5,98.6" fill="#98b0e0" stroke="#b8b040" stroke-width="0.5"/><circle cx="190.9" cy="102.0" r="1.2" fill="#c8187a"/><polygon points="135.0,53.1 133.2,58.6 127.5,58.7 125.6,53.2 130.3,49.8" fill="#3c6bc6" stroke="#b8b040" stroke-width="0.5"/><circle cx="130.3" cy="54.7" r="1.2" fill="#c8187a"/><polygon points="26.9,92.0 24.1,87.0 28.0,82.8 33.2,85.2 32.6,90.9" fill="#98b0e0" stroke="#b8b040" stroke-width="0.5"/><circle cx="29.0" cy="87.6" r="1.2" fill="#c8187a"/><polygon points="30.2,93.3 24.5,92.3 23.6,86.6 28.8,84.0 32.8,88.1" fill="#3c6bc6" stroke="#b8b040" stroke-width="0.5"/><circle cx="28.0" cy="88.9" r="1.2" fill="#c8187a"/><polygon points="27.0,94.5 22.0,91.6 23.2,85.9 29.0,85.4 31.3,90.6" fill="#3c6bc6" stroke="#b8b040" stroke-width="0.5"/><circle cx="26.5" cy="89.6" r="1.2" fill="#c8187a"/><polygon points="66.6,106.0 60.9,107.1 58.1,102.1 62.0,97.8 67.2,100.3" fill="#3c6bc6" stroke="#b8b040" stroke-width="0.5"/><circle cx="63.0" cy="102.6" r="1.2" fill="#c8187a"/><polygon points="77.5,36.7 77.2,31.0 82.6,28.9 86.2,33.4 83.1,38.2" fill="#3c6bc6" stroke="#b8b040" stroke-width="0.5"/><circle cx="81.3" cy="33.6" r="1.2" fill="#c8187a"/><polygon points="77.2,38.5 77.5,32.7 83.0,31.2 86.2,36.0 82.6,40.5" fill="#3c6bc6" stroke="#b8b040" stroke-width="0.5"/><circle cx="81.3" cy="35.8" r="1.2" fill="#c8187a"/><polygon points="180.6,185.2 176.8,180.9 179.6,175.9 185.3,177.1 185.9,182.8" fill="#3c6bc6" stroke="#b8b040" stroke-width="0.5"/><circle cx="181.6" cy="180.4" r="1.2" fill="#c8187a"/><polygon points="176.7,181.0 181.7,178.1 186.0,181.9 183.7,187.2 177.9,186.6" fill="#3c6bc6" stroke="#b8b040" stroke-width="0.5"/><circle cx="181.2" cy="183.0" r="1.2" fill="#c8187a"/><polygon points="73.7,66.5 74.1,60.7 79.7,59.3 82.8,64.2 79.1,68.6" fill="#98b0e0" stroke="#b8b040" stroke-width="0.5"/><circle cx="77.9" cy="63.9" r="1.2" fill="#c8187a"/><polygon points="72.5,67.0 72.5,61.2 78.0,59.4 81.4,64.1 78.0,68.7" fill="#3c6bc6" stroke="#b8b040" stroke-width="0.5"/><circle cx="76.5" cy="64.1" r="1.2" fill="#c8187a"/><polygon points="132.3,156.8 128.9,161.4 123.4,159.6 123.5,153.8 129.0,152.1" fill="#3c6bc6" stroke="#b8b040" stroke-width="0.5"/><circle cx="127.4" cy="156.7" r="1.2" fill="#c8187a"/><polygon points="134.7,159.1 129.6,161.8 125.5,157.7 128.0,152.6 133.7,153.4" fill="#3c6bc6" stroke="#b8b040" stroke-width="0.5"/><circle cx="130.3" cy="156.9" r="1.2" fill="#c8187a"/><polygon points="142.3,168.9 140.8,174.4 135.0,174.8 133.0,169.4 137.4,165.8" fill="#98b0e0" stroke="#b8b040" stroke-width="0.5"/><circle cx="137.7" cy="170.6" r="1.2" fill="#c8187a"/><polygon points="153.4,89.8 149.1,86.0 151.4,80.7 157.2,81.3 158.4,86.9" fill="#3c6bc6" stroke="#b8b040" stroke-width="0.5"/><circle cx="153.9" cy="84.9" r="1.2" fill="#c8187a"/><polygon points="152.6,84.7 154.1,79.1 159.9,78.9 161.9,84.3 157.4,87.9" fill="#3c6bc6" stroke="#b8b040" stroke-width="0.5"/><circle cx="157.2" cy="83.0" r="1.2" fill="#c8187a"/><polygon points="153.4,91.4 148.5,88.5 149.8,82.9 155.5,82.3 157.8,87.6" fill="#3c6bc6" stroke="#b8b040" stroke-width="0.5"/><circle cx="153.0" cy="86.5" r="1.2" fill="#c8187a"/><polygon points="160.8,48.7 155.1,49.5 152.5,44.4 156.6,40.3 161.7,43.0" fill="#98b0e0" stroke="#b8b040" stroke-width="0.5"/><circle cx="157.3" cy="45.2" r="1.2" fill="#c8187a"/><polygon points="152.5,44.7 153.2,39.0 158.8,37.9 161.6,42.9 157.7,47.1" fill="#3c6bc6" stroke="#b8b040" stroke-width="0.5"/><circle cx="156.8" cy="42.3" r="1.2" fill="#c8187a"/><polygon points="152.9,45.6 152.1,39.9 157.3,37.4 161.3,41.6 158.5,46.6" fill="#3c6bc6" stroke="#b8b040" stroke-width="0.5"/><circle cx="156.4" cy="42.2" r="1.2" fill="#c8187a"/><polygon points="78.5,48.2 75.2,43.6 78.6,38.9 84.0,40.7 84.0,46.5" fill="#3c6bc6" stroke="#b8b040" stroke-width="0.5"/><circle cx="80.1" cy="43.6" r="1.2" fill="#c8187a"/><polygon points="73.3,41.0 77.4,36.9 82.5,39.5 81.6,45.2 75.9,46.1" fill="#98b0e0" stroke="#b8b040" stroke-width="0.5"/><circle cx="78.1" cy="41.8" r="1.2" fill="#c8187a"/><polygon points="196.7,119.1 192.5,123.0 187.5,120.1 188.7,114.5 194.4,113.8" fill="#98b0e0" stroke="#b8b040" stroke-width="0.5"/><circle cx="192.0" cy="118.1" r="1.2" fill="#c8187a"/><polygon points="186.7,120.8 188.4,115.3 194.2,115.1 196.1,120.6 191.5,124.1" fill="#3c6bc6" stroke="#b8b040" stroke-width="0.5"/><circle cx="191.4" cy="119.2" r="1.2" fill="#c8187a"/><polygon points="151.3,97.6 145.6,97.0 144.4,91.4 149.4,88.5 153.7,92.4" fill="#3c6bc6" stroke="#b8b040" stroke-width="0.5"/><circle cx="148.9" cy="93.4" r="1.2" fill="#c8187a"/><polygon points="52.5,76.4 50.6,81.8 44.8,81.7 43.1,76.2 47.9,72.9" fill="#3c6bc6" stroke="#b8b040" stroke-width="0.5"/><circle cx="47.8" cy="77.8" r="1.2" fill="#c8187a"/><polygon points="33.9,68.9 37.6,73.3 34.5,78.2 28.9,76.8 28.5,71.0" fill="#98b0e0" stroke="#b8b040" stroke-width="0.5"/><circle cx="32.7" cy="73.6" r="1.2" fill="#c8187a"/><polygon points="37.0,77.2 31.4,75.9 31.0,70.1 36.3,67.9 40.0,72.3" fill="#3c6bc6" stroke="#b8b040" stroke-width="0.5"/><circle cx="35.1" cy="72.7" r="1.2" fill="#c8187a"/><polygon points="14.7,68.8 20.0,71.1 19.5,76.9 13.8,78.1 10.9,73.1" fill="#3c6bc6" stroke="#b8b040" stroke-width="0.5"/><circle cx="15.8" cy="73.6" r="1.2" fill="#c8187a"/><polygon points="11.1,70.0 16.7,68.7 19.7,73.6 15.9,78.0 10.6,75.7" fill="#3c6bc6" stroke="#b8b040" stroke-width="0.5"/><circle cx="14.8" cy="73.2" r="1.2" fill="#c8187a"/><polygon points="14.0,75.4 12.7,69.8 17.7,66.8 22.0,70.6 19.8,75.9" fill="#98b0e0" stroke="#b8b040" stroke-width="0.5"/><circle cx="17.3" cy="71.7" r="1.2" fill="#c8187a"/><polygon points="183.3,156.8 184.5,162.4 179.5,165.3 175.2,161.4 177.6,156.1" fill="#3c6bc6" stroke="#b8b040" stroke-width="0.5"/><circle cx="180.0" cy="160.4" r="1.2" fill="#c8187a"/><polygon points="186.0,166.4 180.3,165.9 179.0,160.3 184.0,157.3 188.3,161.1" fill="#98b0e0" stroke="#b8b040" stroke-width="0.5"/><circle cx="183.5" cy="162.2" r="1.2" fill="#c8187a"/><polygon points="38.2,165.2 43.9,166.2 44.7,172.0 39.5,174.5 35.5,170.3" fill="#3c6bc6" stroke="#b8b040" stroke-width="0.5"/><circle cx="40.4" cy="169.7" r="1.2" fill="#c8187a"/><polygon points="47.8,173.9 42.5,176.2 38.7,171.9 41.5,167.0 47.2,168.2" fill="#98b0e0" stroke="#b8b040" stroke-width="0.5"/><circle cx="43.5" cy="171.4" r="1.2" fill="#c8187a"/><polygon points="87.6,17.5 83.9,13.1 86.9,8.2 92.5,9.6 92.9,15.3" fill="#98b0e0" stroke="#b8b040" stroke-width="0.5"/><circle cx="88.8" cy="12.7" r="1.2" fill="#c8187a"/><polygon points="82.9,9.6 88.7,9.8 90.3,15.3 85.5,18.5 80.9,15.0" fill="#3c6bc6" stroke="#b8b040" stroke-width="0.5"/><circle cx="85.6" cy="13.6" r="1.2" fill="#c8187a"/><polygon points="98.6,74.5 93.0,73.1 92.7,67.3 98.1,65.2 101.7,69.7" fill="#3c6bc6" stroke="#b8b040" stroke-width="0.5"/><circle cx="96.8" cy="70.0" r="1.2" fill="#c8187a"/><polygon points="97.3,62.9 103.0,63.6 104.1,69.2 99.1,72.0 94.9,68.1" fill="#98b0e0" stroke="#b8b040" stroke-width="0.5"/><circle cx="99.7" cy="67.2" r="1.2" fill="#c8187a"/><polygon points="178.5,14.1 174.9,9.6 178.1,4.8 183.6,6.3 183.9,12.0" fill="#3c6bc6" stroke="#b8b040" stroke-width="0.5"/><circle cx="179.8" cy="9.4" r="1.2" fill="#c8187a"/><polygon points="172.7,9.9 177.4,6.5 182.0,9.9 180.3,15.4 174.5,15.4" fill="#98b0e0" stroke="#b8b040" stroke-width="0.5"/><circle cx="177.4" cy="11.4" r="1.2" fill="#c8187a"/><polygon points="49.5,136.8 52.4,131.8 58.0,133.0 58.6,138.7 53.4,141.1" fill="#3c6bc6" stroke="#b8b040" stroke-width="0.5"/><circle cx="54.4" cy="136.3" r="1.2" fill="#c8187a"/><polygon points="48.6,131.1 53.4,128.0 57.9,131.6 55.8,137.0 50.1,136.7" fill="#98b0e0" stroke="#b8b040" stroke-width="0.5"/><circle cx="53.2" cy="132.9" r="1.2" fill="#c8187a"/><polygon points="182.9,32.5 188.6,32.3 190.6,37.7 186.1,41.3 181.3,38.1" fill="#3c6bc6" stroke="#b8b040" stroke-width="0.5"/><circle cx="185.9" cy="36.4" r="1.2" fill="#c8187a"/><polygon points="143.9,150.1 146.8,145.1 152.4,146.4 153.0,152.1 147.7,154.4" fill="#98b0e0" stroke="#b8b040" stroke-width="0.5"/><circle cx="148.7" cy="149.6" r="1.2" fill="#c8187a"/><polygon points="149.7,153.7 144.0,154.3 141.6,149.1 145.8,145.2 150.8,148.0" fill="#3c6bc6" stroke="#b8b040" stroke-width="0.5"/><circle cx="146.4" cy="150.1" r="1.2" fill="#c8187a"/><polygon points="72.7,176.7 70.1,181.8 64.4,181.0 63.4,175.4 68.5,172.7" fill="#3c6bc6" stroke="#b8b040" stroke-width="0.5"/><circle cx="67.8" cy="177.5" r="1.2" fill="#c8187a"/><polygon points="70.2,185.3 65.1,182.6 66.0,176.9 71.7,176.1 74.3,181.2" fill="#98b0e0" stroke="#b8b040" stroke-width="0.5"/><circle cx="69.5" cy="180.4" r="1.2" fill="#c8187a"/><polygon points="65.2,174.2 69.7,170.6 74.5,173.7 73.0,179.3 67.3,179.6" fill="#3c6bc6" stroke="#b8b040" stroke-width="0.5"/><circle cx="69.9" cy="175.5" r="1.2" fill="#c8187a"/><polygon points="87.7,109.3 90.6,114.3 86.7,118.6 81.4,116.2 82.1,110.5" fill="#3c6bc6" stroke="#b8b040" stroke-width="0.5"/><circle cx="85.7" cy="113.8" r="1.2" fill="#c8187a"/><polygon points="72.5,133.1 77.2,129.7 81.8,133.2 79.9,138.6 74.2,138.6" fill="#98b0e0" stroke="#b8b040" stroke-width="0.5"/><circle cx="77.1" cy="134.6" r="1.2" fill="#c8187a"/><polygon points="85.2,132.8 82.7,138.0 77.0,137.2 75.9,131.6 81.0,128.8" fill="#3c6bc6" stroke="#b8b040" stroke-width="0.5"/><circle cx="80.4" cy="133.7" r="1.2" fill="#c8187a"/><polygon points="72.9,138.4 75.4,133.2 81.1,134.1 82.1,139.8 77.0,142.4" fill="#98b0e0" stroke="#b8b040" stroke-width="0.5"/><circle cx="77.7" cy="137.6" r="1.2" fill="#c8187a"/><polygon points="19.9,108.5 24.2,104.6 29.2,107.5 28.0,113.2 22.3,113.8" fill="#98b0e0" stroke="#b8b040" stroke-width="0.5"/><circle cx="24.7" cy="109.5" r="1.2" fill="#c8187a"/><polygon points="129.0,45.9 123.3,46.9 120.7,41.8 124.7,37.7 129.9,40.2" fill="#3c6bc6" stroke="#b8b040" stroke-width="0.5"/><circle cx="125.5" cy="42.5" r="1.2" fill="#c8187a"/><polygon points="177.3,75.5 183.0,74.7 185.5,79.9 181.4,83.9 176.3,81.1" fill="#3c6bc6" stroke="#b8b040" stroke-width="0.5"/><circle cx="180.7" cy="79.0" r="1.2" fill="#c8187a"/><polygon points="179.1,78.4 179.7,72.7 185.4,71.5 188.3,76.5 184.4,80.8" fill="#3c6bc6" stroke="#b8b040" stroke-width="0.5"/><circle cx="183.4" cy="76.0" r="1.2" fill="#c8187a"/><polygon points="8.3,96.9 11.8,101.4 8.6,106.2 3.0,104.6 2.8,98.9" fill="#98b0e0" stroke="#b8b040" stroke-width="0.5"/><circle cx="6.9" cy="101.6" r="1.2" fill="#c8187a"/><polygon points="5.4,96.3 10.9,97.8 11.2,103.6 5.8,105.6 2.2,101.1" fill="#3c6bc6" stroke="#b8b040" stroke-width="0.5"/><circle cx="7.1" cy="100.9" r="1.2" fill="#c8187a"/><polygon points="43.1,46.3 37.3,46.8 35.1,41.5 39.5,37.7 44.4,40.7" fill="#3c6bc6" stroke="#b8b040" stroke-width="0.5"/><circle cx="39.9" cy="42.6" r="1.2" fill="#c8187a"/><polygon points="6.7,109.0 12.3,110.4 12.8,116.1 7.4,118.3 3.7,113.9" fill="#3c6bc6" stroke="#b8b040" stroke-width="0.5"/><circle cx="8.6" cy="113.5" r="1.2" fill="#c8187a"/><polygon points="104.3,47.8 99.3,50.5 95.1,46.5 97.6,41.3 103.4,42.1" fill="#3c6bc6" stroke="#b8b040" stroke-width="0.5"/><circle cx="99.9" cy="45.6" r="1.2" fill="#c8187a"/><polygon points="93.6,50.4 93.1,44.7 98.5,42.5 102.2,46.9 99.2,51.8" fill="#3c6bc6" stroke="#b8b040" stroke-width="0.5"/><circle cx="97.3" cy="47.2" r="1.2" fill="#c8187a"/><polygon points="96.6,18.1 101.3,21.2 99.8,26.8 94.0,27.0 92.0,21.6" fill="#98b0e0" stroke="#b8b040" stroke-width="0.5"/><circle cx="96.8" cy="23.0" r="1.2" fill="#c8187a"/><polygon points="100.6,22.9 96.1,26.6 91.3,23.6 92.6,18.0 98.4,17.6" fill="#3c6bc6" stroke="#b8b040" stroke-width="0.5"/><circle cx="95.8" cy="21.8" r="1.2" fill="#c8187a"/><polygon points="174.8,52.7 178.2,48.0 183.7,49.8 183.7,55.5 178.2,57.3" fill="#98b0e0" stroke="#b8b040" stroke-width="0.5"/><circle cx="179.7" cy="52.7" r="1.2" fill="#c8187a"/><polygon points="176.5,58.4 172.8,54.0 175.8,49.1 181.4,50.5 181.9,56.2" fill="#3c6bc6" stroke="#b8b040" stroke-width="0.5"/><circle cx="177.7" cy="53.6" r="1.2" fill="#c8187a"/><polygon points="180.0,101.7 177.2,106.7 171.5,105.6 170.8,99.9 176.0,97.5" fill="#98b0e0" stroke="#b8b040" stroke-width="0.5"/><circle cx="175.1" cy="102.3" r="1.2" fill="#c8187a"/><polygon points="173.7,96.0 176.9,100.8 173.3,105.3 167.9,103.3 168.2,97.5" fill="#98b0e0" stroke="#b8b040" stroke-width="0.5"/><circle cx="172.0" cy="100.6" r="1.2" fill="#c8187a"/><polygon points="60.4,4.1 64.0,-0.4 69.4,1.6 69.1,7.4 63.6,8.9" fill="#98b0e0" stroke="#b8b040" stroke-width="0.5"/><circle cx="65.3" cy="4.3" r="1.2" fill="#c8187a"/><polygon points="6.4,28.0 11.7,25.7 15.5,30.0 12.6,34.9 7.0,33.7" fill="#3c6bc6" stroke="#b8b040" stroke-width="0.5"/><circle cx="10.6" cy="30.4" r="1.2" fill="#c8187a"/><polygon points="130.1,108.4 125.7,104.7 127.8,99.4 133.6,99.8 135.0,105.4" fill="#3c6bc6" stroke="#b8b040" stroke-width="0.5"/><circle cx="130.4" cy="103.5" r="1.2" fill="#c8187a"/><polygon points="0.6,151.9 5.3,148.6 9.9,152.0 8.1,157.5 2.3,157.4" fill="#98b0e0" stroke="#b8b040" stroke-width="0.5"/><circle cx="5.2" cy="153.5" r="1.2" fill="#c8187a"/><polygon points="157.5,91.8 162.8,94.1 162.2,99.9 156.6,101.1 153.7,96.1" fill="#98b0e0" stroke="#b8b040" stroke-width="0.5"/><circle cx="158.5" cy="96.6" r="1.2" fill="#c8187a"/><polygon points="153.1,98.8 152.8,93.0 158.2,91.0 161.8,95.5 158.6,100.3" fill="#3c6bc6" stroke="#b8b040" stroke-width="0.5"/><circle cx="156.9" cy="95.7" r="1.2" fill="#c8187a"/><polygon points="174.3,66.5 171.7,61.4 175.7,57.3 180.9,59.9 180.0,65.6" fill="#98b0e0" stroke="#b8b040" stroke-width="0.5"/><circle cx="176.5" cy="62.2" r="1.2" fill="#c8187a"/><polygon points="168.5,62.0 170.1,56.5 175.9,56.3 177.8,61.8 173.2,65.3" fill="#3c6bc6" stroke="#b8b040" stroke-width="0.5"/><circle cx="173.1" cy="60.4" r="1.2" fill="#c8187a"/><polygon points="167.7,120.3 162.1,119.0 161.5,113.3 166.7,111.0 170.6,115.3" fill="#98b0e0" stroke="#b8b040" stroke-width="0.5"/><circle cx="165.7" cy="115.8" r="1.2" fill="#c8187a"/><polygon points="149.0,67.6 147.2,73.1 141.4,73.1 139.6,67.6 144.3,64.2" fill="#3c6bc6" stroke="#b8b040" stroke-width="0.5"/><circle cx="144.3" cy="69.1" r="1.2" fill="#c8187a"/><polygon points="80.3,82.8 82.0,77.3 87.8,77.3 89.6,82.7 85.0,86.2" fill="#98b0e0" stroke="#b8b040" stroke-width="0.5"/><circle cx="84.9" cy="81.3" r="1.2" fill="#c8187a"/><polygon points="42.8,159.9 42.2,154.2 47.4,151.8 51.3,156.1 48.5,161.1" fill="#3c6bc6" stroke="#b8b040" stroke-width="0.5"/><circle cx="46.4" cy="156.6" r="1.2" fill="#c8187a"/><polygon points="76.9,151.3 73.5,155.9 68.1,154.1 68.1,148.3 73.6,146.6" fill="#3c6bc6" stroke="#b8b040" stroke-width="0.5"/><circle cx="72.0" cy="151.2" r="1.2" fill="#c8187a"/><polygon points="73.5,148.3 70.3,153.0 64.7,151.4 64.6,145.6 70.0,143.7" fill="#3c6bc6" stroke="#b8b040" stroke-width="0.5"/><circle cx="68.6" cy="148.4" r="1.2" fill="#c8187a"/><polygon points="57.0,37.8 62.8,38.3 64.1,43.9 59.2,46.9 54.8,43.2" fill="#3c6bc6" stroke="#b8b040" stroke-width="0.5"/><circle cx="59.6" cy="42.0" r="1.2" fill="#c8187a"/><polygon points="58.5,46.7 53.2,44.4 53.8,38.7 59.4,37.4 62.3,42.4" fill="#3c6bc6" stroke="#b8b040" stroke-width="0.5"/><circle cx="57.5" cy="41.9" r="1.2" fill="#c8187a"/><polygon points="180.9,23.5 175.2,22.8 174.1,17.2 179.1,14.4 183.3,18.3" fill="#3c6bc6" stroke="#b8b040" stroke-width="0.5"/><circle cx="178.5" cy="19.3" r="1.2" fill="#c8187a"/><polygon points="181.4,16.9 179.6,22.3 173.8,22.4 172.0,16.9 176.7,13.5" fill="#98b0e0" stroke="#b8b040" stroke-width="0.5"/><circle cx="176.7" cy="18.4" r="1.2" fill="#c8187a"/><polygon points="60.2,165.3 55.3,168.4 50.9,164.8 52.9,159.4 58.7,159.7" fill="#3c6bc6" stroke="#b8b040" stroke-width="0.5"/><circle cx="55.6" cy="163.5" r="1.2" fill="#c8187a"/><polygon points="50.2,166.0 47.2,161.1 51.0,156.7 56.3,158.9 55.8,164.7" fill="#3c6bc6" stroke="#b8b040" stroke-width="0.5"/><circle cx="52.1" cy="161.5" r="1.2" fill="#c8187a"/><polygon points="37.5,157.1 31.7,157.3 29.7,151.9 34.2,148.3 39.0,151.5" fill="#3c6bc6" stroke="#b8b040" stroke-width="0.5"/><circle cx="34.4" cy="153.2" r="1.2" fill="#c8187a"/><polygon points="27.0,154.6 28.5,149.1 34.3,148.8 36.3,154.2 31.8,157.8" fill="#3c6bc6" stroke="#b8b040" stroke-width="0.5"/><circle cx="31.6" cy="152.9" r="1.2" fill="#c8187a"/><polygon points="142.0,21.1 146.3,17.2 151.3,20.0 150.1,25.6 144.4,26.3" fill="#3c6bc6" stroke="#b8b040" stroke-width="0.5"/><circle cx="146.8" cy="22.0" r="1.2" fill="#c8187a"/><polygon points="139.2,21.0 142.1,16.1 147.8,17.3 148.3,23.0 143.0,25.3" fill="#98b0e0" stroke="#b8b040" stroke-width="0.5"/><circle cx="144.1" cy="20.6" r="1.2" fill="#c8187a"/><polygon points="151.4,23.4 146.0,25.4 142.5,20.9 145.7,16.1 151.2,17.7" fill="#3c6bc6" stroke="#b8b040" stroke-width="0.5"/><circle cx="147.4" cy="20.7" r="1.2" fill="#c8187a"/><polygon points="154.2,127.4 156.9,122.3 162.5,123.3 163.4,129.0 158.2,131.6" fill="#3c6bc6" stroke="#b8b040" stroke-width="0.5"/><circle cx="159.0" cy="126.7" r="1.2" fill="#c8187a"/><polygon points="156.9,132.6 151.9,129.9 152.9,124.2 158.6,123.5 161.1,128.7" fill="#3c6bc6" stroke="#b8b040" stroke-width="0.5"/><circle cx="156.3" cy="127.8" r="1.2" fill="#c8187a"/><polygon points="126.6,88.1 125.2,82.6 130.0,79.4 134.5,83.1 132.4,88.5" fill="#3c6bc6" stroke="#b8b040" stroke-width="0.5"/><circle cx="129.7" cy="84.3" r="1.2" fill="#c8187a"/><polygon points="136.1,90.5 130.3,91.0 128.1,85.7 132.4,81.9 137.4,84.9" fill="#98b0e0" stroke="#b8b040" stroke-width="0.5"/><circle cx="132.9" cy="86.8" r="1.2" fill="#c8187a"/><polygon points="68.5,118.9 62.8,119.4 60.6,114.0 65.0,110.3 69.9,113.3" fill="#3c6bc6" stroke="#b8b040" stroke-width="0.5"/><circle cx="65.4" cy="115.2" r="1.2" fill="#c8187a"/><polygon points="107.3,71.8 111.1,76.2 108.2,81.1 102.6,79.9 102.0,74.1" fill="#98b0e0" stroke="#b8b040" stroke-width="0.5"/><circle cx="106.3" cy="76.6" r="1.2" fill="#c8187a"/><polygon points="32.0,175.5 31.9,181.2 26.4,182.9 23.1,178.2 26.6,173.6" fill="#3c6bc6" stroke="#b8b040" stroke-width="0.5"/><circle cx="28.0" cy="178.3" r="1.2" fill="#c8187a"/><polygon points="70.6,170.5 71.7,164.8 77.4,164.1 79.9,169.3 75.7,173.2" fill="#3c6bc6" stroke="#b8b040" stroke-width="0.5"/><circle cx="75.0" cy="168.4" r="1.2" fill="#c8187a"/><polygon points="78.3,168.4 73.3,171.2 69.0,167.3 71.4,162.1 77.2,162.7" fill="#98b0e0" stroke="#b8b040" stroke-width="0.5"/><circle cx="73.8" cy="166.3" r="1.2" fill="#c8187a"/><polygon points="191.3,61.2 189.2,66.6 183.5,66.3 182.0,60.7 186.8,57.6" fill="#3c6bc6" stroke="#b8b040" stroke-width="0.5"/><circle cx="186.6" cy="62.5" r="1.2" fill="#c8187a"/><polygon points="83.8,105.9 82.2,100.4 87.0,97.2 91.5,100.7 89.5,106.1" fill="#3c6bc6" stroke="#b8b040" stroke-width="0.5"/><circle cx="86.8" cy="102.1" r="1.2" fill="#c8187a"/><polygon points="158.5,6.3 162.5,10.3 159.9,15.5 154.2,14.5 153.3,8.9" fill="#3c6bc6" stroke="#b8b040" stroke-width="0.5"/><circle cx="157.7" cy="11.1" r="1.2" fill="#c8187a"/><polygon points="164.0,5.9 165.6,11.4 160.9,14.7 156.3,11.2 158.2,5.8" fill="#3c6bc6" stroke="#b8b040" stroke-width="0.5"/><circle cx="161.0" cy="9.8" r="1.2" fill="#c8187a"/><polygon points="160.0,101.8 165.8,101.9 167.4,107.5 162.7,110.7 158.1,107.2" fill="#98b0e0" stroke="#b8b040" stroke-width="0.5"/><circle cx="162.8" cy="105.8" r="1.2" fill="#c8187a"/><polygon points="161.3,104.7 165.1,100.3 170.4,102.7 169.8,108.4 164.2,109.6" fill="#3c6bc6" stroke="#b8b040" stroke-width="0.5"/><circle cx="166.1" cy="105.1" r="1.2" fill="#c8187a"/><polygon points="88.1,119.3 93.7,120.7 94.2,126.4 88.8,128.6 85.1,124.2" fill="#3c6bc6" stroke="#b8b040" stroke-width="0.5"/><circle cx="90.0" cy="123.8" r="1.2" fill="#c8187a"/><polygon points="168.2,142.7 174.0,143.1 175.4,148.7 170.5,151.7 166.1,148.0" fill="#98b0e0" stroke="#b8b040" stroke-width="0.5"/><circle cx="170.8" cy="146.8" r="1.2" fill="#c8187a"/><polygon points="31.5,106.0 37.2,105.5 39.4,110.9 35.0,114.6 30.1,111.5" fill="#3c6bc6" stroke="#b8b040" stroke-width="0.5"/><circle cx="34.6" cy="109.7" r="1.2" fill="#c8187a"/><polygon points="39.1,53.7 34.3,56.9 29.8,53.3 31.8,47.9 37.6,48.2" fill="#98b0e0" stroke="#b8b040" stroke-width="0.5"/><circle cx="34.5" cy="52.0" r="1.2" fill="#c8187a"/><polygon points="66.0,159.0 70.9,162.0 69.5,167.6 63.7,168.0 61.6,162.7" fill="#3c6bc6" stroke="#b8b040" stroke-width="0.5"/><circle cx="66.3" cy="163.9" r="1.2" fill="#c8187a"/><polygon points="69.4,163.1 68.7,168.8 63.0,169.9 60.3,164.8 64.2,160.6" fill="#3c6bc6" stroke="#b8b040" stroke-width="0.5"/><circle cx="65.1" cy="165.4" r="1.2" fill="#c8187a"/><polygon points="38.8,16.0 41.8,11.1 47.4,12.4 47.8,18.2 42.5,20.4" fill="#3c6bc6" stroke="#b8b040" stroke-width="0.5"/><circle cx="43.6" cy="15.6" r="1.2" fill="#c8187a"/><polygon points="39.5,15.9 43.7,11.9 48.7,14.7 47.7,20.3 42.0,21.1" fill="#98b0e0" stroke="#b8b040" stroke-width="0.5"/><circle cx="44.3" cy="16.8" r="1.2" fill="#c8187a"/><polygon points="192.7,146.2 189.2,141.6 192.4,136.9 197.9,138.4 198.1,144.2" fill="#3c6bc6" stroke="#b8b040" stroke-width="0.5"/><circle cx="194.1" cy="141.5" r="1.2" fill="#c8187a"/><polygon points="152.6,132.4 152.9,138.2 147.6,140.3 143.9,135.9 147.0,131.0" fill="#98b0e0" stroke="#b8b040" stroke-width="0.5"/><circle cx="148.8" cy="135.6" r="1.2" fill="#c8187a"/><polygon points="145.0,130.4 150.1,133.0 149.2,138.7 143.5,139.6 140.9,134.5" fill="#3c6bc6" stroke="#b8b040" stroke-width="0.5"/><circle cx="145.8" cy="135.2" r="1.2" fill="#c8187a"/><polygon points="136.7,34.2 139.8,39.0 136.3,43.5 130.9,41.5 131.1,35.8" fill="#3c6bc6" stroke="#b8b040" stroke-width="0.5"/><circle cx="134.9" cy="38.8" r="1.2" fill="#c8187a"/><polygon points="132.3,36.3 138.0,37.1 139.0,42.8 134.0,45.5 129.8,41.5" fill="#3c6bc6" stroke="#b8b040" stroke-width="0.5"/><circle cx="134.6" cy="40.6" r="1.2" fill="#c8187a"/><polygon points="111.6,177.0 112.5,182.7 107.4,185.3 103.3,181.3 105.9,176.1" fill="#3c6bc6" stroke="#b8b040" stroke-width="0.5"/><circle cx="108.2" cy="180.5" r="1.2" fill="#c8187a"/><polygon points="106.0,175.7 109.9,179.9 107.1,185.0 101.5,183.8 100.8,178.1" fill="#98b0e0" stroke="#b8b040" stroke-width="0.5"/><circle cx="105.1" cy="180.5" r="1.2" fill="#c8187a"/><polygon points="120.0,149.4 120.3,143.7 125.9,142.2 129.0,147.0 125.4,151.5" fill="#3c6bc6" stroke="#b8b040" stroke-width="0.5"/><circle cx="124.1" cy="146.8" r="1.2" fill="#c8187a"/><polygon points="131.4,147.7 126.3,150.3 122.2,146.3 124.8,141.1 130.5,142.0" fill="#98b0e0" stroke="#b8b040" stroke-width="0.5"/><circle cx="127.0" cy="145.5" r="1.2" fill="#c8187a"/><polygon points="97.5,139.6 103.0,141.5 102.8,147.3 97.3,148.9 94.0,144.2" fill="#3c6bc6" stroke="#b8b040" stroke-width="0.5"/><circle cx="98.9" cy="144.3" r="1.2" fill="#c8187a"/><polygon points="93.1,145.2 97.6,141.6 102.4,144.8 100.8,150.4 95.0,150.6" fill="#3c6bc6" stroke="#b8b040" stroke-width="0.5"/><circle cx="97.8" cy="146.5" r="1.2" fill="#c8187a"/><polygon points="97.0,144.7 97.9,139.0 103.6,138.1 106.2,143.2 102.2,147.3" fill="#98b0e0" stroke="#b8b040" stroke-width="0.5"/><circle cx="101.4" cy="142.5" r="1.2" fill="#c8187a"/><polygon points="26.0,149.0 21.2,145.8 22.8,140.2 28.5,140.0 30.5,145.4" fill="#3c6bc6" stroke="#b8b040" stroke-width="0.5"/><circle cx="25.8" cy="144.1" r="1.2" fill="#c8187a"/><polygon points="21.6,148.1 22.2,142.4 27.8,141.1 30.7,146.1 26.9,150.4" fill="#98b0e0" stroke="#b8b040" stroke-width="0.5"/><circle cx="25.8" cy="145.6" r="1.2" fill="#c8187a"/><polygon points="180.5,32.9 174.8,33.2 172.7,27.9 177.1,24.2 182.0,27.3" fill="#98b0e0" stroke="#b8b040" stroke-width="0.5"/><circle cx="177.4" cy="29.1" r="1.2" fill="#c8187a"/><polygon points="178.4,28.8 179.6,34.5 174.6,37.4 170.3,33.5 172.6,28.2" fill="#3c6bc6" stroke="#b8b040" stroke-width="0.5"/><circle cx="175.1" cy="32.5" r="1.2" fill="#c8187a"/><polygon points="173.9,30.6 169.3,27.1 171.4,21.7 177.1,21.9 178.7,27.5" fill="#98b0e0" stroke="#b8b040" stroke-width="0.5"/><circle cx="174.1" cy="25.7" r="1.2" fill="#c8187a"/><polygon points="1.7,181.7 2.8,176.0 8.5,175.3 10.9,180.5 6.7,184.5" fill="#3c6bc6" stroke="#b8b040" stroke-width="0.5"/><circle cx="6.1" cy="179.6" r="1.2" fill="#c8187a"/><polygon points="-1.0,178.5 2.3,173.7 7.8,175.4 7.9,181.2 2.5,183.1" fill="#3c6bc6" stroke="#b8b040" stroke-width="0.5"/><circle cx="3.9" cy="178.4" r="1.2" fill="#c8187a"/><polygon points="140.5,174.8 145.9,172.8 149.5,177.3 146.3,182.1 140.7,180.5" fill="#98b0e0" stroke="#b8b040" stroke-width="0.5"/><circle cx="144.6" cy="177.5" r="1.2" fill="#c8187a"/><polygon points="141.4,172.4 147.1,171.6 149.6,176.7 145.5,180.8 140.4,178.1" fill="#3c6bc6" stroke="#b8b040" stroke-width="0.5"/><circle cx="144.8" cy="175.9" r="1.2" fill="#c8187a"/><polygon points="119.4,22.8 116.4,27.8 110.8,26.5 110.3,20.8 115.5,18.5" fill="#98b0e0" stroke="#b8b040" stroke-width="0.5"/><circle cx="114.5" cy="23.3" r="1.2" fill="#c8187a"/><polygon points="7.6,171.3 1.9,170.0 1.4,164.3 6.7,162.0 10.5,166.3" fill="#3c6bc6" stroke="#b8b040" stroke-width="0.5"/><circle cx="5.6" cy="166.8" r="1.2" fill="#c8187a"/><polygon points="10.6,172.4 4.9,173.5 2.1,168.5 6.0,164.3 11.2,166.7" fill="#98b0e0" stroke="#b8b040" stroke-width="0.5"/><circle cx="7.0" cy="169.1" r="1.2" fill="#c8187a"/><polygon points="134.7,112.9 133.8,118.6 128.1,119.5 125.5,114.3 129.6,110.3" fill="#98b0e0" stroke="#b8b040" stroke-width="0.5"/><circle cx="130.3" cy="115.1" r="1.2" fill="#c8187a"/><polygon points="137.0,112.4 136.7,118.2 131.1,119.7 128.0,114.8 131.6,110.4" fill="#98b0e0" stroke="#b8b040" stroke-width="0.5"/><circle cx="132.9" cy="115.1" r="1.2" fill="#c8187a"/><polygon points="127.7,122.8 122.7,119.9 124.0,114.3 129.7,113.8 132.0,119.1" fill="#3c6bc6" stroke="#b8b040" stroke-width="0.5"/><circle cx="127.2" cy="118.0" r="1.2" fill="#c8187a"/><polygon points="174.2,170.1 169.2,172.9 165.0,169.0 167.4,163.8 173.1,164.4" fill="#3c6bc6" stroke="#b8b040" stroke-width="0.5"/><circle cx="169.8" cy="168.0" r="1.2" fill="#c8187a"/><polygon points="26.5,10.6 23.5,15.6 17.9,14.3 17.4,8.5 22.7,6.3" fill="#3c6bc6" stroke="#b8b040" stroke-width="0.5"/><circle cx="21.6" cy="11.1" r="1.2" fill="#c8187a"/><polygon points="22.0,6.3 23.8,11.8 19.2,15.2 14.5,11.8 16.2,6.4" fill="#98b0e0" stroke="#b8b040" stroke-width="0.5"/><circle cx="19.2" cy="10.3" r="1.2" fill="#c8187a"/><polygon points="95.6,114.5 101.3,114.8 102.8,120.3 98.0,123.5 93.5,119.8" fill="#3c6bc6" stroke="#b8b040" stroke-width="0.5"/><circle cx="98.2" cy="118.6" r="1.2" fill="#c8187a"/><polygon points="99.8,111.3 102.8,116.3 99.0,120.6 93.7,118.4 94.2,112.6" fill="#3c6bc6" stroke="#b8b040" stroke-width="0.5"/><circle cx="97.9" cy="115.9" r="1.2" fill="#c8187a"/><polygon points="135.2,145.8 140.9,146.7 141.7,152.4 136.6,155.0 132.5,150.9" fill="#98b0e0" stroke="#b8b040" stroke-width="0.5"/><circle cx="137.4" cy="150.1" r="1.2" fill="#c8187a"/><polygon points="148.1,100.6 153.7,99.5 156.5,104.5 152.6,108.7 147.4,106.3" fill="#98b0e0" stroke="#b8b040" stroke-width="0.5"/><circle cx="151.6" cy="103.9" r="1.2" fill="#c8187a"/><polygon points="169.2,49.1 164.9,45.2 167.2,40.0 173.0,40.6 174.2,46.2" fill="#3c6bc6" stroke="#b8b040" stroke-width="0.5"/><circle cx="169.7" cy="44.2" r="1.2" fill="#c8187a"/><polygon points="175.2,50.6 169.5,50.7 167.6,45.2 172.2,41.8 176.9,45.1" fill="#98b0e0" stroke="#b8b040" stroke-width="0.5"/><circle cx="172.3" cy="46.7" r="1.2" fill="#c8187a"/><polygon points="171.1,46.9 168.1,51.8 162.5,50.5 162.0,44.7 167.4,42.5" fill="#98b0e0" stroke="#b8b040" stroke-width="0.5"/><circle cx="166.2" cy="47.3" r="1.2" fill="#c8187a"/><polygon points="45.8,118.7 40.1,118.6 38.4,113.0 43.1,109.8 47.7,113.2" fill="#3c6bc6" stroke="#b8b040" stroke-width="0.5"/><circle cx="43.0" cy="114.7" r="1.2" fill="#c8187a"/><polygon points="43.8,117.3 38.4,119.2 34.9,114.7 38.1,109.9 43.7,111.6" fill="#98b0e0" stroke="#b8b040" stroke-width="0.5"/><circle cx="39.8" cy="114.5" r="1.2" fill="#c8187a"/><polygon points="21.5,114.6 25.8,118.4 23.6,123.7 17.9,123.2 16.5,117.6" fill="#3c6bc6" stroke="#b8b040" stroke-width="0.5"/><circle cx="21.1" cy="119.5" r="1.2" fill="#c8187a"/><polygon points="19.9,124.8 15.6,120.9 18.1,115.7 23.8,116.3 24.9,122.0" fill="#3c6bc6" stroke="#b8b040" stroke-width="0.5"/><circle cx="20.5" cy="119.9" r="1.2" fill="#c8187a"/><polygon points="20.0,127.7 15.1,124.7 16.4,119.1 22.2,118.6 24.4,123.9" fill="#98b0e0" stroke="#b8b040" stroke-width="0.5"/><circle cx="19.6" cy="122.8" r="1.2" fill="#c8187a"/><polygon points="111.1,125.0 106.6,128.6 101.8,125.5 103.3,119.9 109.0,119.7" fill="#3c6bc6" stroke="#b8b040" stroke-width="0.5"/><circle cx="106.3" cy="123.7" r="1.2" fill="#c8187a"/><polygon points="58.2,148.7 62.5,152.6 60.1,157.8 54.4,157.1 53.2,151.5" fill="#3c6bc6" stroke="#b8b040" stroke-width="0.5"/><circle cx="57.7" cy="153.5" r="1.2" fill="#c8187a"/><polygon points="10.9,39.6 10.0,45.3 4.4,46.3 1.7,41.2 5.7,37.1" fill="#3c6bc6" stroke="#b8b040" stroke-width="0.5"/><circle cx="6.5" cy="41.9" r="1.2" fill="#c8187a"/><polygon points="2.7,42.4 7.6,39.3 12.0,43.0 9.8,48.4 4.0,47.9" fill="#3c6bc6" stroke="#b8b040" stroke-width="0.5"/><circle cx="7.2" cy="44.2" r="1.2" fill="#c8187a"/><polygon points="34.0,79.6 39.0,76.6 43.3,80.4 41.1,85.7 35.4,85.2" fill="#98b0e0" stroke="#b8b040" stroke-width="0.5"/><circle cx="38.6" cy="81.5" r="1.2" fill="#c8187a"/><polygon points="38.8,79.0 42.3,83.6 39.1,88.4 33.6,86.8 33.4,81.0" fill="#98b0e0" stroke="#b8b040" stroke-width="0.5"/><circle cx="37.4" cy="83.8" r="1.2" fill="#c8187a"/><polygon points="36.1,115.9 39.9,120.3 36.9,125.2 31.2,123.9 30.8,118.1" fill="#3c6bc6" stroke="#b8b040" stroke-width="0.5"/><circle cx="35.0" cy="120.7" r="1.2" fill="#c8187a"/><polygon points="35.1,124.4 30.5,120.9 32.3,115.5 38.1,115.6 39.8,121.1" fill="#98b0e0" stroke="#b8b040" stroke-width="0.5"/><circle cx="35.2" cy="119.5" r="1.2" fill="#c8187a"/><polygon points="188.5,55.4 187.0,49.8 191.8,46.7 196.3,50.3 194.2,55.7" fill="#98b0e0" stroke="#b8b040" stroke-width="0.5"/><circle cx="191.6" cy="51.6" r="1.2" fill="#c8187a"/><polygon points="44.2,146.3 46.3,141.0 52.1,141.3 53.5,146.9 48.7,150.0" fill="#3c6bc6" stroke="#b8b040" stroke-width="0.5"/><circle cx="49.0" cy="145.1" r="1.2" fill="#c8187a"/><polygon points="146.9,119.9 152.6,119.8 154.6,125.2 150.0,128.7 145.3,125.5" fill="#3c6bc6" stroke="#b8b040" stroke-width="0.5"/><circle cx="149.9" cy="123.8" r="1.2" fill="#c8187a"/><polygon points="150.3,127.9 146.5,123.5 149.4,118.6 155.1,119.8 155.6,125.6" fill="#3c6bc6" stroke="#b8b040" stroke-width="0.5"/><circle cx="151.4" cy="123.1" r="1.2" fill="#c8187a"/><polygon points="128.6,32.9 124.4,36.9 119.3,34.2 120.3,28.5 126.0,27.7" fill="#3c6bc6" stroke="#b8b040" stroke-width="0.5"/><circle cx="123.7" cy="32.0" r="1.2" fill="#c8187a"/><polygon points="189.2,170.5 186.2,175.4 180.6,174.1 180.1,168.4 185.4,166.1" fill="#3c6bc6" stroke="#b8b040" stroke-width="0.5"/><circle cx="184.3" cy="170.9" r="1.2" fill="#c8187a"/><polygon points="10.2,10.6 11.5,16.2 6.5,19.2 2.2,15.3 4.5,10.1" fill="#98b0e0" stroke="#b8b040" stroke-width="0.5"/><circle cx="7.0" cy="14.3" r="1.2" fill="#c8187a"/><polygon points="138.1,110.5 135.9,105.1 140.4,101.4 145.2,104.5 143.9,110.1" fill="#98b0e0" stroke="#b8b040" stroke-width="0.5"/><circle cx="140.7" cy="106.3" r="1.2" fill="#c8187a"/><polygon points="138.0,110.2 136.8,104.5 141.8,101.6 146.1,105.5 143.7,110.8" fill="#3c6bc6" stroke="#b8b040" stroke-width="0.5"/><circle cx="141.3" cy="106.5" r="1.2" fill="#c8187a"/><polygon points="155.4,148.9 157.3,143.4 163.0,143.5 164.7,149.0 160.0,152.4" fill="#3c6bc6" stroke="#b8b040" stroke-width="0.5"/><circle cx="160.1" cy="147.5" r="1.2" fill="#c8187a"/><polygon points="163.8,149.6 158.7,152.2 154.6,148.1 157.3,143.0 163.0,143.9" fill="#98b0e0" stroke="#b8b040" stroke-width="0.5"/><circle cx="159.5" cy="147.4" r="1.2" fill="#c8187a"/><polygon points="40.8,4.1 44.4,-0.4 49.8,1.7 49.4,7.5 43.9,8.9" fill="#3c6bc6" stroke="#b8b040" stroke-width="0.5"/><circle cx="45.7" cy="4.4" r="1.2" fill="#c8187a"/><polygon points="75.5,80.0 70.4,77.4 71.3,71.7 76.9,70.8 79.6,75.9" fill="#3c6bc6" stroke="#b8b040" stroke-width="0.5"/><circle cx="74.7" cy="75.2" r="1.2" fill="#c8187a"/><polygon points="66.7,76.2 71.5,73.0 76.1,76.5 74.1,82.0 68.4,81.8" fill="#98b0e0" stroke="#b8b040" stroke-width="0.5"/><circle cx="71.4" cy="77.9" r="1.2" fill="#c8187a"/><polygon points="170.5,2.7 172.8,8.0 168.5,11.8 163.5,8.9 164.8,3.3" fill="#3c6bc6" stroke="#b8b040" stroke-width="0.5"/><circle cx="168.0" cy="7.0" r="1.2" fill="#c8187a"/><polygon points="172.9,10.5 167.9,13.3 163.7,9.4 166.1,4.2 171.8,4.9" fill="#3c6bc6" stroke="#b8b040" stroke-width="0.5"/><circle cx="168.5" cy="8.5" r="1.2" fill="#c8187a"/><polygon points="189.2,69.6 192.9,65.1 198.3,67.2 197.9,73.0 192.4,74.5" fill="#3c6bc6" stroke="#b8b040" stroke-width="0.5"/><circle cx="194.1" cy="69.9" r="1.2" fill="#c8187a"/><polygon points="195.1,77.2 189.4,76.6 188.3,70.9 193.3,68.1 197.5,72.0" fill="#3c6bc6" stroke="#b8b040" stroke-width="0.5"/><circle cx="192.7" cy="73.0" r="1.2" fill="#c8187a"/><polygon points="190.2,66.1 195.7,67.7 195.9,73.4 190.5,75.4 187.0,70.9" fill="#3c6bc6" stroke="#b8b040" stroke-width="0.5"/><circle cx="191.9" cy="70.7" r="1.2" fill="#c8187a"/><polygon points="118.0,63.1 119.8,57.6 125.6,57.7 127.4,63.1 122.7,66.5" fill="#98b0e0" stroke="#b8b040" stroke-width="0.5"/><circle cx="122.7" cy="61.6" r="1.2" fill="#c8187a"/><polygon points="123.9,61.0 123.5,66.8 117.9,68.2 114.8,63.3 118.5,58.9" fill="#3c6bc6" stroke="#b8b040" stroke-width="0.5"/><circle cx="119.7" cy="63.7" r="1.2" fill="#c8187a"/><polygon points="108.8,146.8 113.6,150.0 112.0,155.5 106.2,155.7 104.3,150.3" fill="#3c6bc6" stroke="#b8b040" stroke-width="0.5"/><circle cx="109.0" cy="151.7" r="1.2" fill="#c8187a"/><polygon points="111.2,98.7 112.0,104.4 106.8,106.9 102.8,102.7 105.6,97.6" fill="#3c6bc6" stroke="#b8b040" stroke-width="0.5"/><circle cx="107.7" cy="102.1" r="1.2" fill="#c8187a"/><polygon points="139.5,6.7 134.2,9.1 130.4,4.8 133.2,-0.2 138.9,1.0" fill="#3c6bc6" stroke="#b8b040" stroke-width="0.5"/><circle cx="135.2" cy="4.3" r="1.2" fill="#c8187a"/><polygon points="90.0,142.0 85.3,145.4 80.7,142.0 82.5,136.5 88.2,136.5" fill="#3c6bc6" stroke="#b8b040" stroke-width="0.5"/><circle cx="85.3" cy="140.5" r="1.2" fill="#c8187a"/><polygon points="88.8,136.4 93.3,140.1 91.1,145.5 85.4,145.1 84.0,139.5" fill="#98b0e0" stroke="#b8b040" stroke-width="0.5"/><circle cx="88.5" cy="141.3" r="1.2" fill="#c8187a"/><polygon points="113.6,92.5 108.0,93.8 105.0,88.9 108.7,84.5 114.0,86.7" fill="#3c6bc6" stroke="#b8b040" stroke-width="0.5"/><circle cx="109.9" cy="89.3" r="1.2" fill="#c8187a"/><polygon points="75.6,-0.8 80.4,2.4 78.8,8.0 73.1,8.2 71.1,2.8" fill="#3c6bc6" stroke="#b8b040" stroke-width="0.5"/><circle cx="75.8" cy="4.1" r="1.2" fill="#c8187a"/><polygon points="94.1,176.1 99.8,176.5 101.2,182.1 96.3,185.1 91.9,181.4" fill="#3c6bc6" stroke="#b8b040" stroke-width="0.5"/><circle cx="96.6" cy="180.2" r="1.2" fill="#c8187a"/><polygon points="89.8,178.0 95.4,176.6 98.4,181.5 94.7,185.9 89.4,183.7" fill="#3c6bc6" stroke="#b8b040" stroke-width="0.5"/><circle cx="93.5" cy="181.1" r="1.2" fill="#c8187a"/><polygon points="50.6,29.3 45.4,31.8 41.5,27.6 44.2,22.5 49.9,23.6" fill="#3c6bc6" stroke="#b8b040" stroke-width="0.5"/><circle cx="46.3" cy="27.0" r="1.2" fill="#c8187a"/><polygon points="44.5,30.1 42.6,24.7 47.2,21.2 51.9,24.5 50.3,30.0" fill="#3c6bc6" stroke="#b8b040" stroke-width="0.5"/><circle cx="47.3" cy="26.1" r="1.2" fill="#c8187a"/><polygon points="68.4,17.3 67.1,22.9 61.3,23.4 59.1,18.0 63.5,14.3" fill="#3c6bc6" stroke="#b8b040" stroke-width="0.5"/><circle cx="63.9" cy="19.2" r="1.2" fill="#c8187a"/><polygon points="63.6,20.7 57.9,19.8 56.9,14.1 62.0,11.5 66.1,15.5" fill="#98b0e0" stroke="#b8b040" stroke-width="0.5"/><circle cx="61.3" cy="16.3" r="1.2" fill="#c8187a"/><polygon points="15.0,67.9 10.3,64.5 12.1,59.0 17.8,59.0 19.6,64.5" fill="#3c6bc6" stroke="#b8b040" stroke-width="0.5"/><circle cx="15.0" cy="63.0" r="1.2" fill="#c8187a"/><polygon points="168.7,66.6 174.2,68.3 174.4,74.0 168.9,75.9 165.4,71.3" fill="#3c6bc6" stroke="#b8b040" stroke-width="0.5"/><circle cx="170.3" cy="71.2" r="1.2" fill="#c8187a"/><polygon points="91.4,164.1 89.4,158.7 93.9,155.2 98.7,158.4 97.2,163.9" fill="#3c6bc6" stroke="#b8b040" stroke-width="0.5"/><circle cx="94.1" cy="160.1" r="1.2" fill="#c8187a"/><polygon points="93.2,155.9 98.3,153.3 102.4,157.5 99.7,162.6 94.0,161.6" fill="#3c6bc6" stroke="#b8b040" stroke-width="0.5"/><circle cx="97.5" cy="158.2" r="1.2" fill="#c8187a"/><polygon points="87.7,161.8 91.3,157.4 96.7,159.5 96.4,165.2 90.8,166.7" fill="#3c6bc6" stroke="#b8b040" stroke-width="0.5"/><circle cx="92.6" cy="162.1" r="1.2" fill="#c8187a"/><polygon points="123.5,185.2 117.8,184.0 117.3,178.2 122.6,176.0 126.4,180.3" fill="#3c6bc6" stroke="#b8b040" stroke-width="0.5"/><circle cx="121.5" cy="180.7" r="1.2" fill="#c8187a"/><polygon points="124.7,175.8 129.2,179.3 127.3,184.7 121.5,184.5 119.9,179.0" fill="#98b0e0" stroke="#b8b040" stroke-width="0.5"/><circle cx="124.5" cy="180.6" r="1.2" fill="#c8187a"/><polygon points="116.9,179.8 122.6,178.9 125.2,184.0 121.2,188.1 116.1,185.5" fill="#3c6bc6" stroke="#b8b040" stroke-width="0.5"/><circle cx="120.4" cy="183.3" r="1.2" fill="#c8187a"/><polygon points="7.9,127.2 2.2,127.3 0.3,121.9 4.8,118.4 9.6,121.7" fill="#3c6bc6" stroke="#b8b040" stroke-width="0.5"/><circle cx="5.0" cy="123.3" r="1.2" fill="#c8187a"/><polygon points="130.3,184.5 129.0,178.9 133.9,175.9 138.3,179.7 136.0,185.0" fill="#3c6bc6" stroke="#b8b040" stroke-width="0.5"/><circle cx="133.5" cy="180.8" r="1.2" fill="#c8187a"/><polygon points="188.0,89.0 185.7,94.3 180.0,93.8 178.7,88.1 183.7,85.2" fill="#98b0e0" stroke="#b8b040" stroke-width="0.5"/><circle cx="183.2" cy="90.1" r="1.2" fill="#c8187a"/><polygon points="124.7,10.3 120.2,6.8 122.2,1.4 127.9,1.6 129.5,7.1" fill="#98b0e0" stroke="#b8b040" stroke-width="0.5"/><circle cx="124.9" cy="5.4" r="1.2" fill="#c8187a"/><polygon points="138.1,12.2 143.1,15.1 141.8,20.7 136.1,21.3 133.8,16.0" fill="#3c6bc6" stroke="#b8b040" stroke-width="0.5"/><circle cx="138.6" cy="17.1" r="1.2" fill="#c8187a"/><polygon points="186.0,10.4 191.8,10.3 193.7,15.7 189.1,19.2 184.4,15.9" fill="#3c6bc6" stroke="#b8b040" stroke-width="0.5"/><circle cx="189.0" cy="14.3" r="1.2" fill="#c8187a"/><polygon points="100.1,61.8 96.5,57.3 99.6,52.5 105.2,54.0 105.5,59.7" fill="#98b0e0" stroke="#b8b040" stroke-width="0.5"/><circle cx="101.4" cy="57.1" r="1.2" fill="#c8187a"/><polygon points="102.6,51.2 106.5,55.3 103.8,60.4 98.1,59.3 97.4,53.6" fill="#3c6bc6" stroke="#b8b040" stroke-width="0.5"/><circle cx="101.7" cy="56.0" r="1.2" fill="#c8187a"/><polygon points="107.8,53.9 105.8,59.3 100.1,59.1 98.5,53.6 103.3,50.4" fill="#3c6bc6" stroke="#b8b040" stroke-width="0.5"/><circle cx="103.1" cy="55.3" r="1.2" fill="#c8187a"/><polygon points="88.1,88.2 89.8,93.7 85.0,97.0 80.4,93.6 82.3,88.1" fill="#3c6bc6" stroke="#b8b040" stroke-width="0.5"/><circle cx="85.1" cy="92.1" r="1.2" fill="#c8187a"/><polygon points="51.2,113.5 56.9,112.5 59.7,117.6 55.7,121.7 50.5,119.2" fill="#3c6bc6" stroke="#b8b040" stroke-width="0.5"/><circle cx="54.8" cy="116.9" r="1.2" fill="#c8187a"/><polygon points="55.5,110.6 61.3,110.9 62.8,116.5 57.9,119.6 53.5,116.0" fill="#98b0e0" stroke="#b8b040" stroke-width="0.5"/><circle cx="58.2" cy="114.7" r="1.2" fill="#c8187a"/><polygon points="25.0,20.9 24.7,15.1 30.1,13.1 33.7,17.5 30.6,22.4" fill="#3c6bc6" stroke="#b8b040" stroke-width="0.5"/><circle cx="28.8" cy="17.8" r="1.2" fill="#c8187a"/><polygon points="195.3,184.0 189.8,182.2 189.9,176.4 195.4,174.7 198.7,179.4" fill="#98b0e0" stroke="#b8b040" stroke-width="0.5"/><circle cx="193.8" cy="179.3" r="1.2" fill="#c8187a"/><polygon points="199.6,175.4 200.8,181.1 195.8,183.9 191.5,180.0 193.9,174.8" fill="#3c6bc6" stroke="#b8b040" stroke-width="0.5"/><circle cx="196.3" cy="179.1" r="1.2" fill="#c8187a"/><polygon points="194.9,180.4 189.3,179.6 188.3,173.9 193.4,171.2 197.5,175.3" fill="#98b0e0" stroke="#b8b040" stroke-width="0.5"/><circle cx="192.7" cy="176.1" r="1.2" fill="#c8187a"/><polygon points="20.1,136.5 20.3,130.7 25.8,129.2 29.1,133.9 25.5,138.5" fill="#3c6bc6" stroke="#b8b040" stroke-width="0.5"/><circle cx="24.2" cy="133.8" r="1.2" fill="#c8187a"/><polygon points="25.8,129.9 25.7,135.6 20.3,137.4 16.9,132.7 20.3,128.1" fill="#98b0e0" stroke="#b8b040" stroke-width="0.5"/><circle cx="21.8" cy="132.7" r="1.2" fill="#c8187a"/><polygon points="72.0,110.1 77.7,109.3 80.2,114.4 76.1,118.5 71.0,115.8" fill="#98b0e0" stroke="#b8b040" stroke-width="0.5"/><circle cx="75.4" cy="113.6" r="1.2" fill="#c8187a"/><polygon points="47.3,183.7 41.8,185.4 38.5,180.7 41.9,176.1 47.4,178.0" fill="#3c6bc6" stroke="#b8b040" stroke-width="0.5"/><circle cx="43.4" cy="180.8" r="1.2" fill="#c8187a"/><polygon points="49.2,184.8 43.9,187.2 40.0,182.9 42.9,177.9 48.5,179.1" fill="#3c6bc6" stroke="#b8b040" stroke-width="0.5"/><circle cx="44.9" cy="182.4" r="1.2" fill="#c8187a"/><polygon points="47.9,185.1 42.8,187.6 38.7,183.5 41.4,178.4 47.1,179.4" fill="#3c6bc6" stroke="#b8b040" stroke-width="0.5"/><circle cx="43.6" cy="182.8" r="1.2" fill="#c8187a"/><polygon points="140.1,33.8 145.4,31.5 149.3,35.8 146.4,40.8 140.7,39.5" fill="#3c6bc6" stroke="#b8b040" stroke-width="0.5"/><circle cx="144.4" cy="36.3" r="1.2" fill="#c8187a"/><polygon points="139.6,41.0 139.3,35.3 144.6,33.2 148.3,37.7 145.1,42.5" fill="#3c6bc6" stroke="#b8b040" stroke-width="0.5"/><circle cx="143.4" cy="37.9" r="1.2" fill="#c8187a"/><polygon points="24.1,47.2 24.3,53.0 18.8,54.9 15.3,50.3 18.6,45.6" fill="#98b0e0" stroke="#b8b040" stroke-width="0.5"/><circle cx="20.2" cy="50.2" r="1.2" fill="#c8187a"/><polygon points="14.9,45.7 20.6,46.2 21.8,51.9 16.9,54.8 12.6,51.0" fill="#3c6bc6" stroke="#b8b040" stroke-width="0.5"/><circle cx="17.4" cy="49.9" r="1.2" fill="#c8187a"/><polygon points="25.7,49.5 24.8,55.2 19.1,56.0 16.5,50.8 20.6,46.8" fill="#3c6bc6" stroke="#b8b040" stroke-width="0.5"/><circle cx="21.3" cy="51.7" r="1.2" fill="#c8187a"/><path d="M190.0,9.2 L193.9,8.5 L197.4,7.9 L199.1,4.9 L201.5,2.5 L203.3,6.6 L201.3,6.6 L198.7,6.7 L199.7,2.2 L202.3,6.0 L202.3,10.1 L203.2,14.6 L201.0,12.5 L200.3,15.0 L203.6,11.5 L202.1,12.8 L205.7,12.5 L208.5,13.9 L211.8,10.5 L212.2,5.7 L210.8,6.5 L209.4,8.3 L208.1,5.7 L205.7,5.9 L206.9,2.1 L208.1,5.4 L206.2,7.0 L205.0,3.8 L208.2,4.1 L207.4,6.3 L208.8,2.4 L208.3,0.5 L208.8,3.9 L208.5,0.9 L211.8,-0.4 L209.5,-2.0 L207.1,-1.8 L209.6,0.9 L210.5,-3.5 L211.5,0.4 L209.6,-2.0 L208.6,-3.6 L210.3,0.8 L211.7,4.0 L214.4,-0.0 L215.9,3.8 L217.5,1.4 L218.0,-2.3 L219.0,-6.1 L220.7,-7.7 L219.4,-7.5 L221.7,-2.6 L225.6,-0.5 L228.4,1.0 L228.8,-2.1 L232.7,0.3 L232.1,3.9 L231.6,7.2 L235.1,9.4 L236.8,13.6 L238.2,16.5 L236.9,19.7 L236.3,22.0 L239.0,19.2 L238.1,22.0 L241.2,24.9 L243.9,21.3 L247.1,20.4 L250.9,20.1 L249.0,17.6 L251.1,14.6 L253.5,18.5 L255.5,22.3 L255.0,18.4 L255.4,15.1 L257.3,17.4 L256.5,20.3 L260.5,18.1 L262.7,13.3 L264.1,17.2 L263.7,20.4 L266.6,16.7 L265.8,12.4 L263.6,9.2 L262.0,10.4 L264.3,6.7 L262.3,7.9 L265.8,6.7 L263.7,3.9 L266.4,7.7 L266.0,10.3 L267.6,6.1" fill="none" stroke="#1d9f78" stroke-width="2.4" stroke-linejoin="round"/><path d="M190.0,7.4 L193.2,7.7 L191.3,5.7 L189.4,3.0 L188.6,5.4 L191.1,8.9 L193.8,10.7 L194.5,5.7 L194.9,8.6 L195.0,5.1 L197.7,4.1 L195.8,6.9 L197.5,3.6 L197.0,0.9 L197.7,-3.5 L200.5,-2.2 L199.1,0.3 L196.6,-0.3 L197.3,4.6 L195.3,1.6 L194.5,-1.8 L191.9,-1.0 L195.0,-3.3 L198.9,-2.2 L202.8,0.5 L203.5,4.4 L204.1,8.9 L204.9,4.5 L207.7,5.9 L211.2,7.5 L215.3,8.1 L217.1,12.6 L216.1,8.2 L215.5,10.2 L219.4,8.0 L220.8,3.2 L218.3,1.6 L215.9,2.4 L219.5,2.8 L222.2,0.8 L223.3,4.8 L225.6,6.6 L222.6,6.8 L223.8,2.5 L227.8,4.0 L227.3,-0.2 L231.1,-0.6 L233.1,2.0 L237.1,2.6 L236.2,-0.2 L239.2,0.8 L239.4,4.4 L243.1,3.8 L242.0,0.1 L240.4,0.4 L240.6,4.9 L242.1,9.7 L243.9,13.9 L243.5,8.9 L244.9,12.3 L245.0,15.1 L244.3,18.7 L242.8,14.5 L243.9,17.8 L243.8,20.9 L242.8,21.9 L240.7,19.1 L244.3,18.5 L246.3,14.0 L244.2,14.0 L244.4,17.2 L248.0,15.9 L247.3,18.5 L244.8,16.7 L242.8,19.6 L244.9,16.6 L243.5,14.6 L246.6,15.4 L250.2,13.2 L253.5,12.2 L252.4,8.0 L250.2,7.3 L254.6,7.6 L257.6,4.7 L261.7,5.2 L266.1,6.0 L268.9,7.1" fill="none" stroke="#1d9f78" stroke-width="2.6" stroke-linejoin="round"/><path d="M242.0,13.2 L240.2,12.1 L242.6,15.6 L240.7,13.3 L242.3,17.4 L245.2,19.1 L243.9,17.6 L242.7,14.5 L245.2,17.6 L247.2,20.5 L246.6,16.4 L246.1,19.3 L244.8,15.0 L243.0,12.2 L245.9,10.0 L244.8,12.1 L244.0,16.6 L242.8,20.8 L243.0,23.2 L244.6,20.1 L246.0,16.1 L249.7,13.3 L247.3,14.6 L251.5,15.1 L250.4,13.7 L248.9,16.3 L247.5,19.5 L250.8,20.2 L251.6,24.8 L254.7,24.8 L257.5,22.3 L256.9,24.8 L260.2,25.3 L257.6,22.5 L260.0,25.9 L262.3,20.8 L265.7,19.7 L263.3,18.0 L265.8,21.2 L264.6,18.1 L267.3,17.1 L265.1,16.2 L263.3,13.3 L263.4,8.8 L265.3,5.9 L268.0,2.8 L271.6,6.0 L273.8,1.9 L273.8,-2.1 L273.0,2.5 L273.5,0.2 L275.5,-2.4 L273.8,-1.1 L275.7,3.0 L273.2,0.9 L273.7,-1.4 L273.0,-2.8 L275.3,-0.3 L276.1,3.5 L277.9,-0.4 L276.4,-3.3 L273.7,-1.9 L274.9,-4.1 L274.5,-0.8 L277.3,-3.1 L276.7,1.4 L280.0,1.8 L281.6,6.6 L281.3,10.4 L281.7,14.1 L280.7,10.6 L279.2,9.8 L277.3,10.1 L274.5,11.9 L277.0,7.8 L274.6,10.1 L276.0,6.6 L278.1,10.9 L276.4,12.9 L277.5,15.7 L276.6,18.2 L277.7,20.6 L280.7,18.1 L284.4,17.5" fill="none" stroke="#d73229" stroke-width="2.3" stroke-linejoin="round"/><path d="M242.0,13.4 L244.2,11.5 L243.9,7.2 L245.3,11.3 L246.2,14.6 L249.7,13.9 L251.8,10.6 L250.3,8.0 L252.8,11.4 L252.7,16.0 L255.2,18.8 L257.7,16.0 L256.5,17.1 L255.5,14.1 L254.9,10.2 L252.5,11.3 L256.0,12.6 L258.9,10.0 L260.2,13.6 L260.3,10.5 L258.0,10.0 L259.7,13.0 L262.9,14.7 L262.2,12.4 L262.4,17.3 L263.9,13.2 L267.3,11.6 L269.3,8.2 L268.7,5.7 L267.9,2.7 L270.8,6.0 L272.7,2.5 L276.8,1.0 L278.8,-0.8 L281.9,-1.5 L281.0,3.2 L279.0,4.9 L279.4,9.5 L278.3,8.2 L276.0,11.4 L278.3,9.6 L278.1,5.3 L281.0,2.5 L282.5,6.2" fill="none" stroke="#d73229" stroke-width="2.9" stroke-linejoin="round"/><path d="M227.0,14.9 L227.9,11.7 L231.8,11.7 L235.0,12.1 L234.0,13.8 L233.8,17.4 L234.4,19.9 L231.5,18.7 L235.0,18.0 L232.3,16.4 L235.2,12.4 L233.8,10.3 L232.3,14.4 L231.4,16.3 L231.6,20.9 L230.0,23.7 L229.4,19.8 L228.9,17.4 L232.4,19.2 L231.5,21.0 L230.7,23.9 L231.5,26.8 L235.5,25.8 L237.2,22.9 L239.0,18.4 L236.3,16.0 L240.0,16.3 L237.8,13.9 L241.0,15.4 L241.5,18.3 L241.8,13.4 L240.8,9.1 L239.9,13.9 L239.5,17.8 L239.3,13.2 L239.3,18.1 L240.1,20.8 L239.0,24.1 L241.6,24.7 L241.9,21.5 L239.8,20.6 L237.3,19.5 L234.5,17.5 L234.8,21.0 L236.9,23.1 L234.6,23.6 L235.6,20.3 L236.5,16.8 L238.9,19.4 L240.3,15.7 L242.6,20.0 L243.0,22.7 L241.8,23.8 L239.3,22.4 L242.0,23.4 L239.6,24.6 L239.6,19.7 L238.6,16.4 L242.0,15.6 L239.8,13.6 L243.5,11.0 L241.7,10.4 L240.6,13.8 L238.7,10.6 L237.5,7.8 L241.1,8.6 L241.9,5.7 L245.6,5.8 L243.7,8.7 L241.1,7.6 L243.2,11.1 L240.7,12.5 L243.9,13.1 L242.4,9.8 L243.7,14.7 L241.2,14.5 L243.9,13.7 L247.3,10.4 L247.2,6.0 L250.7,8.8 L254.1,6.0 L257.1,5.5 L259.5,9.4 L262.5,8.4 L264.9,10.9 L265.3,14.0 L266.2,17.9 L269.6,20.8" fill="none" stroke="#54c4c4" stroke-width="2.3" stroke-linejoin="round"/><path d="M227.0,16.5 L230.4,19.6 L227.5,20.2 L225.7,22.8 L228.3,24.0 L230.7,21.4 L231.1,17.4 L233.3,15.3 L236.0,12.0 L239.1,15.7 L241.8,18.1 L245.0,21.6 L248.4,20.9 L246.1,22.6 L249.4,22.0 L248.4,18.0 L247.2,20.4 L246.7,24.8 L246.8,20.0 L246.3,15.2 L249.1,14.5 L250.3,11.3 L248.1,11.7 L246.8,10.3 L247.1,14.7 L247.2,11.4 L249.0,15.9 L247.9,11.9 L249.2,8.5 L252.5,5.8 L253.9,2.5 L257.5,2.3 L259.4,7.4 L263.3,6.5 L265.6,4.1 L265.2,1.7 L267.1,5.2" fill="none" stroke="#54c4c4" stroke-width="2.7" stroke-linejoin="round"/><path d="M197.0,24.2 L199.9,22.2 L200.8,19.7 L198.7,17.3 L202.5,20.2 L200.2,17.5 L200.3,21.2 L203.4,20.2 L201.3,22.0 L200.1,20.0 L202.5,17.1 L206.7,17.9 L208.5,13.9 L210.2,18.3 L212.2,23.0 L211.9,27.0 L210.6,25.7 L209.5,24.4 L209.0,21.1 L212.4,19.7 L216.3,20.8 L219.3,17.7" fill="none" stroke="#9d6e48" stroke-width="2.3" stroke-linejoin="round"/><path d="M197.0,26.8 L198.5,30.4 L197.5,33.2 L196.9,29.1 L200.5,25.6 L199.4,22.0 L201.7,26.3 L204.1,28.3 L204.5,32.2 L201.6,30.6 L200.4,29.0 L204.5,27.2 L206.4,31.4 L209.7,32.2 L208.1,28.4 L211.0,25.5 L211.7,22.3 L212.4,25.6 L216.1,24.2 L218.9,26.9" fill="none" stroke="#9d6e48" stroke-width="2.3" stroke-linejoin="round"/><path d="M207.0,25.5 L204.5,27.0 L202.5,30.4 L200.9,29.1 L203.0,26.7 L206.3,29.2 L209.9,31.7 L213.4,33.3 L214.0,37.4 L212.7,37.6 L215.4,38.8 L214.7,42.3 L215.2,44.2 L214.5,40.8 L211.7,40.5 L210.7,43.5 L214.2,45.0 L218.4,42.6 L220.0,45.1 L220.6,40.1 L223.8,39.0" fill="none" stroke="#a71b6a" stroke-width="2.9" stroke-linejoin="round"/><path d="M207.0,25.2 L205.3,26.4 L203.8,26.2 L206.4,29.5 L206.7,33.7 L209.8,36.1 L208.5,38.5 L210.5,41.1 L211.0,37.0 L208.4,34.2 L208.5,37.5 L207.6,41.3 L205.0,40.5 L208.0,37.5 L206.9,34.6 L208.3,38.6 L206.3,36.7 L209.4,35.6 L206.8,34.8 L211.0,35.6 L209.4,32.2 L212.3,30.8 L215.0,28.6 L215.2,25.2 L215.0,27.6 L215.6,24.6 L215.0,29.1 L216.7,25.6 L219.8,23.9 L219.1,21.4 L218.0,23.6 L216.3,26.9 L214.6,29.3 L215.9,25.6 L218.7,25.4 L218.9,28.8 L219.6,33.5 L222.5,34.4" fill="none" stroke="#a71b6a" stroke-width="2.9" stroke-linejoin="round"/><path d="M227.0,29.2 L230.8,29.9 L228.1,29.7 L226.7,29.9 L227.8,33.2 L229.2,30.5 L232.1,27.7 L232.5,23.5 L233.0,20.4 L236.7,19.4 L238.4,22.3 L241.5,19.7 L241.6,16.6 L240.0,20.0 L244.1,20.4 L245.6,24.6 L247.3,27.5 L250.6,27.6 L253.6,27.8 L251.6,25.7 L251.5,21.9 L251.1,19.9 L251.8,24.9 L252.5,29.0 L249.9,28.3 L252.5,25.3 L253.1,28.9 L251.3,26.8 L250.6,23.2 L254.0,26.1 L256.8,25.5 L259.9,27.5 L259.8,22.8 L259.1,27.1 L257.2,25.8 L256.7,28.8 L259.7,31.7 L257.2,29.4 L260.6,29.6 L264.1,31.5" fill="none" stroke="#f16913" stroke-width="2.4" stroke-linejoin="round"/><path d="M227.0,25.7 L230.3,22.2 L229.1,26.0 L231.7,22.5 L229.0,20.8 L228.8,18.3 L231.4,21.0 L234.7,22.0 L237.6,21.4 L239.4,18.0 L242.7,15.8 L242.9,12.5 L243.8,8.6 L245.3,5.0 L248.4,4.0 L247.3,6.7 L246.1,8.5 L245.2,7.4 L249.0,8.3 L248.0,12.4 L247.2,10.6 L245.2,11.2 L248.3,13.9 L250.4,11.1 L248.3,10.4 L250.3,7.6 L253.4,5.3 L256.1,5.3 L259.1,3.5 L258.6,0.8 L260.0,-2.7 L264.4,-1.6" fill="none" stroke="#f16913" stroke-width="2.9" stroke-linejoin="round"/><path d="M190.0,33.3 L193.0,32.4 L195.4,29.9 L195.6,33.4 L194.6,37.4 L196.6,34.5 L200.5,36.9 L198.1,34.3 L201.7,34.3 L202.0,29.3 L202.3,26.3 L201.9,29.3 L203.7,31.8 L206.5,32.0 L208.9,35.1 L209.0,31.9 L207.5,28.0 L210.3,28.3 L209.8,25.9 L212.2,28.4 L209.1,28.7 L213.0,30.4 L211.5,30.4 L214.7,32.8 L212.1,35.2 L210.0,34.6 L207.6,33.8 L205.8,34.5 L207.3,30.8 L209.9,34.9 L208.4,33.6 L211.0,31.6 L211.7,35.2 L213.2,31.8 L215.3,27.3 L216.5,31.3 L214.3,31.0 L214.3,26.6 L214.3,29.4 L211.5,29.3 L214.4,30.2 L213.8,26.5 L216.2,29.4 L215.8,26.9 L217.5,29.8" fill="none" stroke="#54c4c4" stroke-width="2.4" stroke-linejoin="round"/><path d="M190.0,34.6 L191.0,38.9 L189.1,38.5 L192.4,35.9 L190.4,33.8 L187.4,34.5 L190.7,33.2 L190.6,29.6 L191.5,33.4 L194.1,29.9 L194.6,32.8 L192.9,35.4 L192.3,39.4 L192.8,42.1 L191.5,38.9 L191.9,36.1 L195.9,37.3 L195.8,32.4 L193.9,29.0 L194.8,32.7 L198.4,33.6 L201.5,30.5 L203.0,35.1 L205.6,31.0 L203.9,29.7 L206.8,32.5 L204.7,30.1 L204.2,34.2 L203.7,29.9 L205.5,34.5 L209.1,35.0 L212.9,34.1 L214.7,31.4 L217.5,31.0" fill="none" stroke="#54c4c4" stroke-width="2.8" stroke-linejoin="round"/><path d="M207.0,33.5 L204.2,32.8 L206.4,37.2 L208.3,40.8 L208.1,37.6 L206.6,41.1 L206.3,35.9 L208.8,39.7 L209.3,42.8 L212.0,40.4 L211.1,36.6 L214.2,33.1 L215.7,30.5 L213.6,29.7 L210.8,30.5 L213.3,34.4 L210.7,33.6 L213.4,35.4 L210.9,34.4 L209.0,32.7 L206.6,32.0 L203.7,31.0 L204.2,33.9 L201.1,33.5 L200.3,37.5 L204.4,36.7 L205.3,41.2 L206.4,38.0 L210.1,37.0 L208.4,39.0 L208.7,36.0 L207.7,31.6 L205.2,31.6 L203.3,33.2 L201.9,36.3 L204.8,34.1 L203.3,33.0 L201.0,31.3 L202.9,33.5 L205.5,32.3 L208.2,34.4 L210.8,36.1 L208.7,38.1 L209.5,42.6 L212.1,41.0 L215.6,42.5 L216.2,46.0 L219.3,45.9 L219.1,42.6 L221.6,38.5 L219.7,36.8 L222.2,38.4 L219.9,35.0 L220.4,37.9 L218.3,38.0 L217.9,33.3 L220.4,31.2 L224.9,32.0 L225.5,28.0 L228.2,28.9 L226.9,27.0 L227.4,31.7 L225.6,29.4 L225.5,32.5 L229.2,32.8 L231.9,34.6 L233.7,38.3 L232.0,38.7 L232.3,35.5 L234.3,38.6 L238.2,39.4 L237.2,35.6 L235.4,32.7 L234.6,35.1 L237.2,36.6 L238.4,40.1 L238.0,36.5 L239.7,40.8 L241.2,36.3 L244.2,33.3 L247.3,33.6 L246.8,31.4 L245.3,32.8 L247.6,37.0 L250.9,33.9 L251.3,29.7 L254.4,32.2 L254.2,34.9 L257.5,32.1" fill="none" stroke="#ede92f" stroke-width="2.8" stroke-linejoin="round"/><path d="M207.0,35.9 L209.2,34.0 L211.9,34.0 L209.9,36.3 L209.4,38.6 L212.0,36.9 L215.1,34.3 L214.1,38.8 L216.7,34.9 L215.6,39.2 L216.3,34.5 L214.1,33.0 L212.7,34.8 L215.3,31.6 L217.8,28.3 L216.8,26.9 L215.3,26.1 L218.4,27.4 L221.2,24.0 L222.5,29.4 L221.0,31.4 L220.2,28.0 L220.3,31.4 L222.5,29.6 L222.0,32.9 L225.8,31.6 L223.9,30.7 L226.4,26.8 L224.2,25.5 L227.2,27.0 L225.9,31.5 L228.6,27.6 L232.3,29.9 L235.0,28.5 L232.6,27.8 L236.0,27.2 L240.2,26.5 L239.5,22.7 L242.8,23.4 L246.2,21.2 L249.5,22.9 L250.1,19.8 L253.1,22.4 L256.2,20.8 L260.1,21.1" fill="none" stroke="#ede92f" stroke-width="2.3" stroke-linejoin="round"/><path d="M202.0,38.9 L202.8,36.1 L203.0,39.7 L200.8,36.7 L201.5,33.8 L204.7,37.7 L207.5,37.0 L208.4,40.6 L208.8,45.1 L206.8,44.7 L206.3,48.7 L207.2,43.5 L209.2,39.7 L212.4,39.8 L215.5,40.1 L217.2,35.2 L220.5,32.5 L222.3,29.3 L224.9,30.9 L227.2,34.5 L228.2,37.6 L229.1,34.6 L231.0,30.4 L231.0,33.9 L232.6,31.1" fill="none" stroke="#f16913" stroke-width="2.5" stroke-linejoin="round"/><path d="M202.0,41.9 L204.5,46.2 L206.8,42.0 L208.9,39.1 L210.7,36.5 L213.3,35.8 L211.8,39.7 L210.5,41.9 L213.2,42.4 L211.5,38.5 L212.3,34.2 L211.6,37.3 L210.8,41.4 L210.1,43.9 L214.4,45.1 L213.0,46.9 L211.7,46.2 L212.1,42.3 L213.3,47.1 L214.9,42.9 L219.1,41.9 L219.6,37.8 L222.4,41.7 L222.5,46.1 L221.0,43.2 L221.3,39.4 L219.1,36.9 L220.8,33.3 L222.7,37.9 L225.4,39.4 L227.1,34.9 L230.5,38.5 L234.1,36.9" fill="none" stroke="#f16913" stroke-width="2.2" stroke-linejoin="round"/><path d="M247.0,29.9 L244.9,32.2 L243.5,30.9 L247.9,31.7 L247.8,28.4 L248.1,32.3 L246.3,32.7 L248.0,37.1 L251.9,35.0 L252.9,31.8 L256.8,30.4 L256.2,34.8 L255.5,38.7 L253.8,40.3 L253.8,44.1 L252.5,41.0 L251.2,36.7 L249.6,36.7 L251.8,38.1 L255.1,37.8 L257.6,40.3 L257.0,36.9 L255.9,39.0 L254.6,40.4 L253.4,41.2 L256.8,37.3 L257.0,32.3 L254.6,32.0 L255.8,34.6 L253.9,37.8 L256.1,40.6 L257.6,43.6 L259.7,40.9 L262.7,37.6" fill="none" stroke="#a71b6a" stroke-width="2.9" stroke-linejoin="round"/><path d="M247.0,32.3 L249.7,29.2 L247.0,29.5 L247.4,34.2 L244.6,34.4 L243.0,34.6 L247.0,36.6 L250.1,37.9 L247.3,36.2 L248.3,39.7 L247.0,41.8 L250.9,40.8 L249.5,40.2 L252.8,39.6 L252.9,44.0 L250.5,42.5 L249.4,44.4 L253.2,43.1 L250.8,43.1 L254.6,41.4 L253.1,40.2 L254.1,36.3 L255.0,31.6 L256.5,36.3 L256.5,33.3 L254.2,36.1 L255.7,33.1 L259.3,34.2 L261.8,29.8" fill="none" stroke="#a71b6a" stroke-width="2.2" stroke-linejoin="round"/><path d="M187.0,48.6 L188.1,52.2 L187.3,50.1 L185.4,48.5 L184.2,49.4 L187.8,50.6 L191.5,50.4 L189.9,47.8 L187.4,47.7 L188.8,44.0 L192.5,42.5 L195.3,44.3 L194.4,41.1 L197.9,43.1 L197.6,47.8 L200.6,47.3 L202.7,42.8 L200.1,41.2 L203.6,41.6 L207.0,42.2" fill="none" stroke="#59b03c" stroke-width="2.8" stroke-linejoin="round"/><path d="M187.0,48.6 L187.7,45.4 L190.1,41.7 L192.9,41.5 L195.0,46.1 L193.8,43.4 L195.3,46.1 L194.9,49.1 L198.1,45.5 L197.1,43.0 L195.5,44.2 L199.5,45.1 L199.2,48.3 L197.5,46.2 L196.3,44.2 L199.2,44.9 L199.3,49.8 L198.6,45.7 L198.4,49.1 L199.4,44.9 L197.7,44.8 L195.1,42.8 L196.7,38.9 L198.6,36.9 L201.3,40.2 L199.4,40.2 L199.8,44.4 L202.5,46.2 L201.8,50.4 L203.5,47.1 L202.9,49.9 L201.4,49.9 L202.8,45.8 L206.5,48.1" fill="none" stroke="#59b03c" stroke-width="2.5" stroke-linejoin="round"/><path d="M222.0,46.1 L221.3,48.9 L221.2,45.9 L220.6,41.8 L224.6,41.9 L222.3,41.8 L220.6,39.9 L218.3,37.8 L216.9,41.9 L220.6,41.3 L222.7,38.6 L223.1,42.2 L223.2,45.4 L226.2,44.1 L225.8,40.5 L224.5,39.3 L224.2,42.1 L224.0,47.0 L223.5,42.3 L221.7,45.4 L220.0,44.1 L217.4,44.5 L220.1,48.2 L219.1,44.0 L222.5,43.9 L219.5,44.5 L219.6,40.8 L223.3,41.0 L226.7,42.3 L226.4,46.4 L226.3,42.7 L225.0,42.9 L228.2,43.8 L226.2,42.4 L223.8,45.1 L226.8,44.3 L226.1,47.1 L228.2,49.6 L227.1,51.7 L229.5,47.8 L228.5,50.5 L232.9,50.9 L235.6,53.6 L234.5,56.2 L233.9,58.7 L232.6,60.4 L229.9,60.7 L231.2,57.0 L231.3,59.3 L234.1,60.0 L238.0,59.9 L236.2,58.3 L237.0,53.1 L238.3,55.9 L240.3,57.6 L238.0,55.6 L241.3,54.8 L242.0,50.4 L240.5,51.7 L238.8,48.8 L237.4,47.2 L236.1,46.1 L236.8,49.2 L235.3,50.7 L237.9,46.8 L238.7,49.8 L241.7,49.7 L242.2,52.6 L239.8,53.8 L242.1,49.3 L240.4,47.5 L239.1,47.8 L240.4,51.0 L243.9,48.2 L246.1,52.1 L247.0,56.8 L249.5,53.3 L251.6,55.5 L248.9,53.4 L247.1,53.5 L247.8,48.5 L246.6,46.6 L246.9,43.2 L245.3,42.7 L248.0,45.1 L246.7,43.6 L245.6,46.7 L249.6,49.1 L252.1,50.8 L255.7,49.0 L256.6,52.3 L254.6,51.7 L257.0,53.2 L258.5,49.9 L262.7,48.0" fill="none" stroke="#8d8d8d" stroke-width="2.8" stroke-linejoin="round"/><path d="M222.0,45.8 L219.0,45.4 L218.1,42.9 L217.0,46.8 L220.6,49.4 L218.3,47.9 L222.4,45.8 L220.3,43.5 L224.1,43.1 L223.0,39.8 L225.1,36.0 L223.1,37.2 L226.0,38.9 L226.4,43.3 L225.5,40.4 L224.0,39.2 L220.9,38.9 L222.2,35.6 L221.4,34.2 L219.5,31.2 L222.0,28.2 L223.5,24.7 L225.1,20.9 L227.8,24.1 L228.7,22.3 L229.4,19.2 L227.4,22.5 L225.9,25.1 L228.9,28.9 L230.0,26.5 L231.3,24.9 L233.2,30.5 L232.4,26.8 L235.5,30.6 L233.8,29.1 L232.3,26.9 L235.9,28.7 L236.9,25.7 L238.6,31.3 L236.3,33.8 L238.4,37.1 L241.4,35.0 L240.4,34.2 L239.7,37.7 L242.4,34.5 L243.7,38.1 L247.2,40.2 L251.4,38.7 L252.8,35.0 L251.5,36.6 L254.9,37.7 L259.1,36.5 L260.8,39.8 L258.1,41.6 L255.8,39.6 L258.6,39.6 L257.2,44.1 L255.5,46.6 L253.4,45.6 L257.1,46.3 L259.7,50.7 L263.5,51.8" fill="none" stroke="#8d8d8d" stroke-width="2.4" stroke-linejoin="round"/><path d="M247.0,46.4 L246.3,42.1 L245.1,38.2 L246.8,35.4 L250.6,36.3 L254.9,38.3 L255.8,35.3 L258.8,32.3 L257.2,31.2 L259.8,30.7 L260.1,27.2 L263.4,29.3 L267.0,28.6 L267.0,32.7 L265.0,30.4 L263.6,28.7 L261.9,26.0 L261.0,29.6 L263.4,33.2 L262.3,32.1 L263.5,35.9 L264.8,32.7 L268.3,33.4 L267.4,36.6 L269.7,34.9 L269.1,31.6 L270.8,29.1 L269.3,28.8 L272.8,32.9" fill="none" stroke="#9d6e48" stroke-width="2.9" stroke-linejoin="round"/><path d="M247.0,46.7 L245.7,48.8 L244.9,50.6 L249.2,51.0 L252.0,48.1 L254.4,46.1 L257.8,46.1 L257.8,49.1 L255.1,47.4 L253.3,43.8 L256.7,45.5 L256.0,42.2 L258.2,44.2 L258.9,48.5 L258.1,51.6 L256.1,54.1 L258.6,49.6 L260.2,46.0 L260.3,42.4 L258.1,42.0 L258.0,39.7 L259.7,43.8 L262.7,44.5 L262.0,46.6 L260.5,44.6 L261.1,41.0 L258.6,43.8 L258.9,40.8 L260.9,38.2 L258.9,36.2 L257.4,34.6 L255.4,32.2 L257.3,30.4 L258.4,34.4 L259.6,31.5 L260.8,28.5 L260.0,26.8 L263.1,29.8 L261.3,28.1 L263.7,32.6 L267.0,31.4 L269.3,27.9 L273.2,27.7" fill="none" stroke="#9d6e48" stroke-width="2.5" stroke-linejoin="round"/><path d="M180.0,61.9 L179.2,58.9 L180.4,62.6 L179.4,59.6 L180.8,64.5 L181.3,67.5 L181.8,63.0 L183.0,59.5 L181.4,63.5 L179.9,66.9 L183.0,67.4 L185.3,64.7 L188.2,65.8 L186.8,67.9 L191.2,67.5 L193.3,71.2 L190.4,69.5 L193.1,68.4 L197.4,66.4 L200.4,63.7 L204.5,61.4 L204.8,65.3 L205.2,62.0 L206.6,57.2 L208.6,53.3 L207.0,56.6 L211.1,56.5 L208.9,58.5 L210.6,63.2 L208.7,62.3 L209.1,66.0 L212.3,65.9 L211.8,69.9 L210.2,68.2 L213.3,66.0 L213.3,70.2 L213.2,72.6 L213.0,68.8 L213.3,71.3 L212.1,72.3 L212.0,68.4 L210.3,68.9 L210.5,65.6 L212.2,67.7 L210.5,63.7 L212.9,66.5 L214.1,71.1 L211.6,68.8 L208.9,66.5 L213.0,68.5 L211.0,68.3 L209.8,66.1 L212.2,69.8 L210.6,69.5 L208.7,67.6 L212.6,68.9 L215.3,67.2 L218.0,71.2" fill="none" stroke="#d73229" stroke-width="2.6" stroke-linejoin="round"/><path d="M180.0,62.6 L179.7,59.0 L178.2,56.5 L176.8,60.5 L179.4,58.3 L176.9,59.8 L180.8,60.8 L178.2,59.7 L182.1,61.5 L181.4,58.2 L180.7,54.3 L180.6,51.8 L180.5,48.8 L181.2,45.9 L179.8,48.7 L178.3,49.0 L177.2,51.0 L176.5,49.4 L179.9,52.6 L180.5,56.4 L183.5,52.7 L184.6,57.3 L182.8,56.6 L181.3,56.5 L183.4,54.4 L187.2,53.7 L185.6,51.5 L184.0,51.5 L182.0,49.6 L186.2,51.6 L189.9,53.6 L187.3,55.7 L186.0,59.2 L189.7,62.0 L191.2,65.0 L195.4,66.4 L196.1,69.1 L199.0,72.5 L201.7,69.3 L200.8,64.5 L201.9,67.5 L205.2,64.9 L207.8,66.6 L211.6,66.7 L210.7,69.6 L209.7,71.1 L209.1,74.0 L211.6,76.4 L212.5,78.8 L216.2,78.5 L214.7,75.2 L215.4,77.3 L213.5,79.4 L210.7,76.8 L209.8,73.9 L207.7,76.5 L211.0,75.4 L212.5,71.6 L212.2,74.5 L215.1,70.1 L217.6,73.2" fill="none" stroke="#d73229" stroke-width="2.8" stroke-linejoin="round"/><path d="M237.0,63.4 L235.5,64.2 L238.7,60.7 L236.2,60.7 L240.2,59.7 L238.9,60.9 L237.8,56.9 L240.1,58.9 L239.3,57.2 L240.4,53.2 L238.9,50.3 L242.5,49.2 L243.9,54.4 L242.1,58.3 L244.5,62.9 L248.1,61.7 L245.9,59.3 L245.7,56.1 L248.5,56.8 L249.7,60.6 L248.0,64.3 L247.0,62.7 L250.5,65.8 L250.0,68.8 L250.0,71.3 L250.7,73.9 L252.1,70.0 L255.7,72.1" fill="none" stroke="#54c4c4" stroke-width="2.5" stroke-linejoin="round"/><path d="M237.0,61.1 L235.4,60.1 L239.5,58.1 L242.6,58.7 L246.1,56.8 L246.5,60.8 L245.8,57.4 L245.4,62.1 L244.0,59.8 L241.1,58.4 L238.4,58.0 L241.7,61.8 L239.6,59.9 L239.9,55.8 L241.5,53.7 L240.1,53.5 L243.0,54.0 L242.6,50.4 L243.2,48.1 L242.4,51.9 L245.8,52.0 L247.3,55.9 L249.1,60.5 L247.1,58.9 L246.1,63.4 L247.1,60.6 L249.6,57.7 L250.4,55.0 L251.4,58.0 L254.3,57.9" fill="none" stroke="#54c4c4" stroke-width="2.3" stroke-linejoin="round"/><path d="M212.0,74.4 L214.7,76.8 L213.7,72.8 L212.4,71.0 L211.3,74.5 L213.6,72.1 L213.6,67.5 L215.6,64.7 L213.3,67.5 L214.4,64.7 L213.4,63.3 L211.3,60.8 L214.4,63.8 L217.6,65.2 L215.9,64.8 L214.2,63.2 L216.0,68.3 L217.8,72.4 L221.5,73.5 L218.8,74.8 L217.4,72.4 L217.9,76.0 L215.1,75.9 L212.3,75.1 L215.0,74.7 L217.1,77.5 L216.1,80.2 L215.1,83.3 L219.3,83.6 L217.4,85.4 L215.0,82.2 L215.9,77.9 L218.7,78.2 L217.2,78.4 L215.4,81.2 L218.0,84.8 L220.4,86.0 L223.7,83.5 L227.2,85.6 L224.8,86.7 L225.2,91.1 L224.7,88.1 L225.9,84.4 L228.6,83.5 L231.7,83.8 L232.5,79.8" fill="none" stroke="#d73229" stroke-width="2.7" stroke-linejoin="round"/><path d="M212.0,72.8 L214.0,75.5 L215.3,71.4 L216.8,67.0 L214.6,67.2 L216.6,65.4 L219.5,63.7 L218.2,65.7 L220.5,63.7 L224.1,65.9 L226.6,70.3 L229.8,68.6 L227.8,71.3 L230.3,69.0 L230.4,72.3 L232.6,69.0" fill="none" stroke="#d73229" stroke-width="2.6" stroke-linejoin="round"/><path d="M197.0,77.5 L197.7,74.7 L200.4,77.9 L198.2,77.3 L201.8,76.2 L203.1,72.5 L201.7,75.6 L204.8,75.9 L207.1,73.5 L208.3,69.2 L211.0,73.4 L213.4,75.9 L215.7,78.6 L218.9,77.0 L220.0,79.7 L223.7,78.1" fill="none" stroke="#2d8dbe" stroke-width="2.9" stroke-linejoin="round"/><path d="M197.0,79.4 L197.7,75.6 L198.6,72.4 L200.5,75.8 L198.7,79.3 L197.8,75.6 L196.5,75.1 L195.0,78.3 L196.3,75.7 L196.7,80.3 L196.3,82.9 L195.0,78.6 L198.8,77.8 L200.0,82.8 L199.8,77.8 L201.4,73.5 L199.0,72.3 L199.3,68.2 L203.4,69.2 L206.6,68.1 L206.8,65.9 L206.6,61.9 L204.1,62.4 L205.4,59.2 L205.0,56.7 L209.2,55.8 L208.4,61.6 L208.6,59.7 L212.3,57.9 L212.0,62.4 L215.2,63.5 L215.6,67.2 L215.6,63.9 L214.4,65.5 L211.9,63.8 L214.7,64.5 L217.6,65.9 L219.4,69.8 L217.9,71.9 L220.9,74.2 L224.3,74.9" fill="none" stroke="#2d8dbe" stroke-width="2.7" stroke-linejoin="round"/><path d="M237.0,78.1 L235.1,77.2 L233.3,76.8 L232.7,80.9 L234.2,77.3 L236.8,75.6 L239.9,79.4 L242.8,75.4 L241.9,78.5 L240.5,79.2 L239.7,81.5 L240.5,77.6 L238.8,76.9 L237.2,76.3 L237.0,79.8 L238.1,75.6 L238.2,72.9 L236.0,70.4 L233.6,68.3 L231.3,71.3 L229.8,71.1 L233.7,70.5 L232.7,69.4 L231.2,69.5 L228.5,70.8 L229.0,75.6 L230.3,72.8 L229.5,70.3 L229.1,68.4 L230.7,64.5 L234.1,65.9 L237.4,63.8 L240.2,64.8 L243.1,61.8 L245.2,59.0 L244.0,59.3 L245.1,63.4 L244.3,61.3 L241.8,64.9 L243.0,68.9 L244.7,73.2 L247.7,71.0 L250.4,72.7 L248.6,71.9 L247.3,73.0 L247.3,76.0 L244.9,76.4 L247.6,78.0 L247.3,80.8 L244.7,79.5 L243.1,78.6 L246.4,80.1 L244.9,79.0 L246.7,82.9 L249.6,80.6 L253.2,77.3 L257.4,78.8 L255.0,79.4 L256.3,83.9 L258.6,81.6 L261.7,80.6" fill="none" stroke="#59b03c" stroke-width="2.5" stroke-linejoin="round"/><path d="M237.0,77.6 L238.7,73.5 L236.9,70.4 L239.9,73.9 L243.3,74.9 L242.3,71.1 L245.8,69.0 L248.2,71.6 L247.2,75.9 L246.4,71.6 L244.4,74.2 L243.9,71.8 L246.4,68.1 L247.2,64.8 L248.4,68.3 L250.4,66.0 L249.9,62.7 L253.1,67.0 L251.4,68.3 L249.2,66.9 L251.1,65.2 L252.7,69.1 L252.3,72.1 L253.7,74.9 L257.5,75.4 L257.2,78.9 L255.9,81.0 L254.0,84.5 L252.5,80.3 L252.5,83.5 L253.3,78.5 L254.8,75.7 L255.1,78.6 L255.0,74.4 L252.7,77.4 L254.9,79.3 L253.0,80.9 L255.7,82.7 L256.0,79.4 L255.5,82.8 L257.8,78.0 L258.4,81.4 L256.4,83.9 L257.9,79.8 L257.4,75.4 L257.5,72.3 L260.6,73.0" fill="none" stroke="#59b03c" stroke-width="2.4" stroke-linejoin="round"/><path d="M197.0,94.7 L197.7,98.3 L196.8,93.7 L196.6,89.5 L195.8,92.7 L194.3,94.8 L194.3,90.8 L193.4,89.2 L196.9,91.2 L197.5,95.6 L196.1,92.9 L196.0,96.0 L199.1,98.5 L198.8,100.9 L202.7,100.5 L205.3,103.8 L208.0,104.0 L207.6,107.8 L208.3,104.1 L207.4,106.4 L210.6,106.3 L211.6,102.8 L215.5,103.7 L216.4,100.5 L215.7,104.6 L217.4,107.0 L219.1,109.7 L220.5,105.9 L219.6,103.6 L221.2,98.5 L225.0,97.0 L224.8,93.7 L227.2,91.5 L230.5,92.5 L228.3,92.6 L225.9,90.9 L229.0,90.3 L232.3,89.9 L230.6,93.3 L229.8,97.8 L232.9,95.6 L234.3,91.1 L236.8,95.0 L237.0,99.3 L239.5,101.5 L243.2,101.9 L244.8,104.2 L244.4,107.0 L245.3,111.0 L249.0,109.0 L252.2,106.4" fill="none" stroke="#7c50a4" stroke-width="2.8" stroke-linejoin="round"/><path d="M197.0,94.7 L199.2,97.0 L197.5,100.1 L200.0,96.1 L198.6,94.1 L200.2,97.0 L202.4,99.6 L205.4,98.6 L208.4,94.5 L212.1,96.4 L211.7,98.6 L213.4,101.0 L212.2,103.5 L211.2,105.3 L209.4,101.8 L208.7,97.0 L209.7,99.7 L210.2,103.5 L209.7,105.4 L208.4,109.1 L207.5,110.9 L208.0,105.2 L211.9,104.6 L215.3,103.4 L219.5,102.5 L218.5,104.8 L217.0,101.7 L218.1,97.0 L218.6,94.2 L217.3,95.4 L221.3,94.0 L221.8,97.9 L218.8,98.8 L219.0,94.3 L216.1,94.4 L214.7,93.1 L217.8,92.3 L220.7,89.4 L218.2,91.7 L218.0,94.8 L215.4,96.0 L217.0,93.2 L214.8,94.6 L215.7,98.6 L216.9,93.8 L215.5,97.3 L214.8,101.0 L212.0,100.7 L213.3,96.6 L215.8,97.9 L215.2,94.4 L214.3,90.8 L218.0,93.8 L221.7,95.2 L222.1,98.9 L221.5,103.2 L223.0,105.9 L225.5,103.6 L225.7,98.3 L224.6,100.5 L225.0,97.5 L225.4,101.1 L227.6,96.9 L231.0,99.4 L228.7,100.2 L232.1,97.9 L230.4,100.8 L233.2,103.4 L231.6,106.8 L235.3,105.7 L238.4,104.0 L238.0,107.1 L235.9,108.3 L233.6,105.5 L230.9,106.3 L228.6,105.5 L227.3,108.8 L224.9,105.9 L228.4,104.1 L226.9,106.7 L225.3,109.7 L228.4,109.8 L229.9,113.8 L230.3,109.8 L230.2,106.6 L230.0,108.7 L230.5,104.3 L228.3,102.2 L227.9,97.3 L230.5,99.4 L228.7,99.9 L227.3,101.3 L225.9,98.2 L224.5,100.2 L222.7,98.2 L221.4,100.1 L219.2,101.9 L217.9,99.1 L217.3,95.2 L215.1,94.3 L212.1,93.9 L210.8,97.2 L211.8,94.0 L214.1,96.6 L212.9,98.6 L215.4,95.9 L216.2,99.7 L213.8,98.1 L216.5,96.2 L214.4,96.3 L216.6,100.9 L215.4,101.6 L214.3,99.8 L217.0,101.5 L215.2,104.4 L217.5,107.1 L216.7,102.2 L219.1,99.4 L222.0,102.7 L219.6,104.4 L217.3,106.6 L218.9,108.5 L217.8,110.8 L220.7,112.8 L218.8,115.6 L222.5,115.5 L226.0,115.1 L224.8,113.3 L224.1,116.1 L222.5,115.7 L223.0,118.1 L225.5,119.4 L222.9,116.4 L224.6,119.3 L227.0,116.1 L226.6,110.8 L227.2,106.0 L229.9,106.0 L227.8,107.7 L224.8,107.8 L222.3,108.9 L223.3,111.3 L223.2,107.3 L221.0,104.5 L220.9,107.6 L222.7,102.1 L226.0,99.2 L228.8,100.4 L227.2,103.0 L230.0,104.5 L233.8,104.7 L232.2,102.9 L230.2,101.5 L232.7,102.7 L234.9,105.2 L236.5,100.5 L235.0,99.5 L239.2,99.2 L242.4,99.4 L244.9,94.8 L247.0,96.9 L249.8,100.8 L248.7,98.0 L247.4,96.8 L251.4,96.7 L255.0,95.1" fill="none" stroke="#7c50a4" stroke-width="2.8" stroke-linejoin="round"/><path d="M212.0,94.3 L211.7,99.0 L212.7,94.3 L215.7,93.8 L215.7,97.6 L214.7,93.8 L214.9,97.5 L217.9,96.2 L215.6,93.9 L214.7,90.4 L214.0,86.1 L213.5,83.5 L211.6,82.9 L215.5,81.4 L212.8,80.8 L215.1,77.4 L218.6,75.6 L222.1,73.4 L220.3,72.4 L218.5,75.8 L221.2,72.8 L223.0,70.9 L225.0,67.6 L226.1,64.3 L224.4,68.3 L227.2,71.5 L230.9,74.8 L233.1,72.9" fill="none" stroke="#f16913" stroke-width="2.3" stroke-linejoin="round"/><path d="M212.0,90.6 L210.1,91.1 L208.8,90.6 L212.3,88.3 L210.6,84.8 L212.0,80.4 L212.1,77.3 L213.7,75.5 L213.3,72.8 L215.2,71.1 L214.2,68.8 L213.5,73.8 L210.9,76.5 L209.5,79.7 L211.2,82.9 L215.3,84.6 L216.4,80.3 L217.6,83.7 L216.5,81.4 L217.0,78.8 L220.7,81.4 L218.2,84.1 L221.3,88.0 L223.2,83.7 L221.1,80.8 L218.5,78.7 L217.6,83.6 L215.2,85.2 L215.2,89.3 L215.6,93.8 L213.5,90.4 L214.0,94.7 L213.8,97.2 L215.3,93.6 L213.5,93.0 L211.4,90.6 L210.1,89.0 L210.5,93.9 L214.2,92.1 L213.4,89.3 L214.3,93.4 L212.1,94.7 L212.7,97.8 L213.4,100.6 L216.5,98.9 L219.1,97.3 L218.0,98.2 L219.4,101.1 L218.9,97.2 L220.0,92.6 L220.1,88.7 L223.8,88.6 L225.1,93.1 L228.8,91.0 L227.2,94.9 L228.4,90.5 L227.2,92.7 L231.6,92.4 L229.6,89.2 L233.4,88.2" fill="none" stroke="#f16913" stroke-width="2.2" stroke-linejoin="round"/><path d="M197.0,106.6 L200.6,108.7 L199.2,111.8 L201.0,113.8 L200.2,109.0 L199.9,105.4 L197.8,108.9 L195.1,108.0 L192.9,105.2 L191.1,106.3 L193.8,106.9 L195.3,103.7 L194.7,100.1 L193.3,100.4 L191.3,98.7 L194.6,96.0 L195.7,99.9 L197.5,103.5 L198.4,107.2 L201.7,108.8 L199.9,108.4 L199.9,105.6 L198.9,107.5 L197.6,105.0 L201.8,106.4 L202.4,102.2 L202.3,107.1 L201.5,105.1 L200.6,103.5 L199.1,101.0 L202.7,104.0 L202.8,108.4 L200.1,109.9 L200.3,106.1 L202.6,109.3 L201.9,112.5 L200.3,110.5 L198.6,110.4 L200.8,113.5 L204.1,116.7 L206.0,113.1 L204.9,116.7 L204.2,118.5 L203.9,120.7 L205.0,115.7 L207.2,118.4 L205.1,116.0 L205.4,110.8 L203.8,112.0 L202.0,112.9 L203.5,109.1 L207.0,107.4 L209.0,110.2 L209.4,113.7 L208.4,116.4 L210.5,117.9 L211.0,112.8 L214.6,113.1 L214.3,107.9 L214.7,104.2 L213.6,107.0 L213.2,103.2 L211.7,104.4 L212.1,108.4 L215.2,110.9 L212.7,112.4 L210.8,114.1 L208.7,116.2 L212.3,114.8 L210.9,116.7 L211.6,119.4 L214.4,115.8 L212.0,114.0 L210.2,113.7 L210.8,116.7 L209.4,114.9 L207.6,112.8 L210.2,116.3 L212.6,114.3 L216.4,113.9 L220.3,112.9" fill="none" stroke="#2d8dbe" stroke-width="2.7" stroke-linejoin="round"/><path d="M197.0,105.2 L196.9,107.9 L196.2,109.8 L199.9,111.6 L202.2,113.0 L205.6,110.0 L204.5,113.3 L204.7,116.3 L207.3,118.9 L204.7,118.5 L202.7,119.5 L205.7,117.0 L204.5,112.1 L207.3,111.0 L210.9,112.3 L208.9,109.8 L210.7,113.6 L211.6,108.3 L215.3,107.6 L218.6,109.3" fill="none" stroke="#2d8dbe" stroke-width="2.7" stroke-linejoin="round"/><path d="M242.0,110.5 L243.4,113.1 L246.2,112.5 L250.3,111.7 L247.6,112.0 L251.4,110.2 L254.1,112.1 L255.4,108.2 L257.6,110.9 L256.9,113.5 L257.8,110.1 L258.1,107.1 L258.4,103.0 L258.0,101.0 L259.9,98.5 L263.6,101.7 L261.0,102.9 L260.6,99.2 L263.1,96.9 L266.5,99.0 L264.2,99.9 L267.3,102.2" fill="none" stroke="#7c50a4" stroke-width="2.5" stroke-linejoin="round"/><path d="M242.0,107.2 L241.2,111.8 L245.0,113.3 L243.5,116.0 L245.7,120.2 L249.4,117.2 L246.9,117.0 L248.4,119.1 L246.9,116.3 L245.7,118.5 L244.9,113.6 L243.6,110.4 L245.4,112.7 L242.5,112.4 L243.7,115.2 L242.8,110.8 L244.9,115.1 L247.6,113.1 L250.5,113.9 L248.8,110.8 L252.2,109.6 L253.8,106.9 L254.1,104.0 L257.3,102.6 L261.2,104.3 L264.5,106.1 L264.3,102.4 L266.2,98.7 L268.9,100.1" fill="none" stroke="#7c50a4" stroke-width="2.6" stroke-linejoin="round"/><path d="M190.0,113.2 L187.0,112.5 L185.8,110.0 L189.7,111.7 L189.6,115.8 L187.6,116.4 L190.4,118.6 L188.3,117.2 L187.1,121.1 L184.8,120.8 L184.5,116.4 L188.0,117.3 L186.6,115.1 L185.8,119.0 L184.4,118.3 L183.5,121.9 L186.3,121.9 L183.6,121.2 L186.9,123.7 L187.9,128.1 L189.3,123.5 L189.0,127.5 L191.1,123.3 L194.7,124.3 L197.9,126.4 L199.8,130.5 L197.9,128.3 L200.2,125.6 L202.1,127.3 L202.0,123.5 L200.4,123.3 L197.8,122.9 L200.9,118.9 L202.9,122.1 L202.1,119.9 L203.0,123.7 L204.6,120.4 L202.1,118.8 L200.5,115.0 L198.9,112.3 L197.3,110.2 L199.9,114.2 L202.7,112.1 L200.4,112.9 L202.0,108.8 L199.9,108.2 L200.8,113.1 L198.6,112.0 L201.1,110.7 L202.9,108.2 L203.7,111.1 L202.8,115.1 L203.3,118.0 L206.4,121.7 L205.4,116.9 L204.9,113.0 L202.8,113.0 L203.4,108.5 L203.0,105.8 L207.1,105.9 L205.1,108.4 L207.7,106.9 L206.9,110.6 L207.2,107.7 L210.8,105.7 L214.6,103.9 L213.9,100.5 L218.2,101.1 L220.8,100.6 L223.4,97.7 L225.9,99.8 L229.3,102.0 L233.5,103.4" fill="none" stroke="#1d9f78" stroke-width="2.7" stroke-linejoin="round"/><path d="M190.0,113.0 L194.1,113.7 L192.8,115.4 L193.9,118.8 L196.7,117.7 L198.9,114.5 L202.5,115.6 L201.9,112.0 L206.0,111.1 L208.8,111.5 L209.0,114.1 L207.7,115.4 L206.1,113.3 L210.2,112.0 L211.0,116.8 L214.6,119.0 L213.0,117.2 L213.8,121.2 L212.5,120.4 L212.1,117.3 L211.8,119.8 L212.4,124.5 L211.0,121.7 L211.1,124.7 L211.1,126.9 L211.7,122.6 L210.1,122.4 L209.0,120.7 L210.4,123.0 L209.2,124.7 L209.7,121.3 L212.0,119.1 L209.7,117.6 L209.7,120.2 L212.9,119.5 L213.2,115.3 L215.9,111.8 L218.2,110.1 L216.7,107.7 L216.0,110.9 L216.9,113.7 L215.1,116.2 L212.9,115.6 L215.8,114.8 L215.4,118.3 L213.2,118.6 L211.3,119.8 L213.6,116.7 L212.0,116.4 L215.6,113.7 L214.7,117.6 L218.5,118.1 L217.1,117.0 L220.9,116.0 L220.1,113.4 L221.4,116.5 L224.0,113.5 L222.8,112.6 L222.3,109.7 L221.9,106.5 L225.2,103.9 L223.7,106.4 L222.6,109.4 L221.9,111.9 L226.2,110.6 L229.6,108.4 L230.7,104.2 L235.0,106.0" fill="none" stroke="#1d9f78" stroke-width="2.4" stroke-linejoin="round"/><path d="M207.0,123.8 L209.5,127.2 L212.3,129.4 L211.7,126.4 L210.1,130.3 L213.8,132.8 L213.4,134.9 L211.6,132.9 L214.0,134.8 L211.6,136.5 L214.6,138.6 L213.6,136.1 L212.8,139.4 L212.8,142.1 L213.3,145.5 L216.5,145.7 L217.2,149.5 L216.7,151.2 L217.1,146.7 L215.0,142.7 L213.3,138.9 L217.0,139.8 L219.6,139.8 L217.5,137.3 L215.9,135.1 L219.4,131.5 L218.0,131.7 L221.0,135.0 L220.0,131.5 L223.0,134.9 L222.8,137.4 L220.7,135.2 L221.2,139.6 L218.6,139.5 L222.1,137.6 L224.1,134.2 L221.8,136.2 L220.1,138.3 L219.5,134.9 L216.7,134.1 L215.5,135.2 L217.7,137.2 L221.0,140.1 L223.4,136.8 L223.8,131.9 L227.5,133.0 L228.6,128.6 L231.7,126.5 L230.0,123.3 L232.7,124.3 L230.7,125.0 L229.0,124.6 L227.1,123.0 L225.8,124.7 L224.2,125.2 L221.2,124.5 L220.7,126.8 L224.9,126.6 L223.9,124.4 L224.9,120.4 L224.1,123.2 L226.9,119.9 L229.0,122.7 L232.4,124.7 L231.0,122.5 L231.9,119.2 L230.1,116.9 L234.3,117.3 L235.8,113.1 L233.2,112.5 L235.9,109.9 L237.0,113.5 L234.8,113.3 L235.2,117.0 L237.2,112.9 L239.3,117.5 L236.9,118.9 L239.2,117.5 L236.6,120.2 L235.7,118.5 L234.7,116.7 L234.9,112.1 L234.7,108.8 L235.2,112.7 L236.3,117.7 L233.8,120.6 L231.4,122.0 L233.1,125.0 L235.2,128.1 L236.5,125.3 L240.3,128.2 L240.5,124.0 L240.4,127.8 L237.9,129.5 L240.5,130.1 L242.6,125.3" fill="none" stroke="#ede92f" stroke-width="2.8" stroke-linejoin="round"/><path d="M207.0,123.5 L209.8,125.8 L212.3,126.7 L211.9,129.9 L210.2,127.0 L209.2,128.9 L206.8,128.5 L205.4,126.3 L209.0,125.3 L207.9,128.7 L205.9,131.2 L209.8,128.9 L208.4,126.1 L209.7,121.9 L207.9,119.1 L206.8,120.9 L208.1,124.0 L209.1,119.4 L211.1,115.9 L211.9,112.4 L209.7,116.2 L212.6,118.0 L214.4,120.8 L213.6,122.9 L212.3,122.3 L212.4,127.3 L209.7,127.3 L208.7,123.0 L212.1,121.9 L212.1,119.1 L215.9,120.8 L213.5,122.4 L214.7,126.2 L214.7,123.4 L214.6,118.8 L215.8,115.7 L219.5,116.4 L222.2,115.3 L219.9,115.8 L218.8,113.5 L217.8,111.7 L220.0,108.9 L220.4,112.8 L223.5,109.5 L223.6,107.1 L221.6,108.2 L224.4,106.5 L224.5,102.8 L226.4,106.0 L230.2,108.2 L233.1,113.0 L234.7,111.1 L232.4,113.2 L230.9,114.1 L234.2,115.5 L235.4,118.6 L235.4,116.1 L238.9,117.6 L238.2,121.0 L236.3,123.4 L234.9,123.5 L236.1,126.5 L234.9,126.6 L234.4,131.2 L233.2,129.7 L236.0,127.0 L238.7,125.6 L236.9,122.2 L239.4,119.2 L239.9,114.5 L238.0,116.8 L237.1,115.1 L237.5,119.9 L237.7,123.5 L238.0,120.0 L236.3,121.7 L237.4,126.4 L236.0,124.2 L235.3,126.7 L239.3,125.9 L238.4,122.1 L238.6,118.8 L241.9,115.9 L239.4,118.0 L242.7,117.4" fill="none" stroke="#ede92f" stroke-width="2.3" stroke-linejoin="round"/><path d="M197.0,129.2 L201.1,127.3 L198.9,127.3 L197.4,129.9 L199.7,133.8 L198.6,136.6 L196.7,135.8 L198.9,137.7 L200.3,142.1 L199.2,143.2 L198.5,146.2 L200.4,148.7 L203.4,147.6 L203.6,150.8 L205.0,145.3 L202.9,143.0 L203.3,145.3 L204.9,147.3 L208.2,149.6 L210.0,144.7 L212.2,148.1 L210.8,147.9 L212.9,149.0 L215.8,144.8 L213.5,145.6 L212.2,145.1 L211.5,142.2 L215.7,143.3 L214.5,141.0 L218.7,138.8" fill="none" stroke="#59b03c" stroke-width="2.5" stroke-linejoin="round"/><path d="M197.0,128.6 L198.3,125.6 L201.9,124.2 L200.8,120.2 L198.3,122.1 L196.7,125.9 L195.6,123.5 L199.1,124.1 L201.4,126.7 L199.0,126.2 L199.7,123.4 L200.7,119.8 L204.0,122.3 L206.3,125.7 L209.1,126.9 L208.1,128.7 L210.3,131.6 L207.8,130.8 L208.3,134.8 L211.9,134.9 L211.3,132.0 L212.1,129.0 L213.7,131.8 L216.0,133.6 L215.5,129.5 L217.3,127.1" fill="none" stroke="#59b03c" stroke-width="2.6" stroke-linejoin="round"/><path d="M227.0,128.7 L229.8,124.5 L228.5,125.2 L229.0,128.4 L232.1,127.9 L235.5,128.2 L235.0,130.8 L237.4,132.4 L236.0,134.2 L238.7,131.9 L236.8,134.3 L234.9,136.8 L233.0,133.7 L232.6,130.2 L232.0,126.4 L231.7,123.5 L229.6,124.5 L233.9,125.6 L236.5,122.9 L234.3,125.6 L233.4,129.0 L232.3,126.6 L234.8,125.4 L234.3,121.9 L233.5,125.4 L237.1,127.3 L240.0,130.8 L237.5,129.0 L241.0,129.2 L240.5,132.2 L244.1,132.4 L243.7,128.7 L246.9,131.2 L245.3,130.4 L249.0,130.3 L251.0,127.4 L249.1,126.4 L248.4,128.4 L247.4,130.0 L250.7,131.6 L250.9,128.5 L250.4,124.7 L253.0,128.7 L254.6,125.9 L259.0,126.4 L257.6,130.4 L260.4,134.2 L262.3,129.2" fill="none" stroke="#1d9f78" stroke-width="2.9" stroke-linejoin="round"/><path d="M227.0,127.3 L229.5,125.9 L228.1,122.6 L231.4,121.7 L233.2,125.3 L232.7,129.5 L236.1,128.3 L239.7,129.4 L242.2,127.9 L245.7,131.1 L244.6,133.7 L246.2,129.5 L246.5,126.3 L248.8,129.5 L247.3,130.0 L250.1,133.7 L253.4,134.6 L256.4,133.7 L260.1,136.0 L258.4,133.1 L257.1,130.0 L254.9,129.5 L254.6,125.4 L252.9,129.2 L252.9,126.1 L256.6,125.4 L254.8,123.8 L253.9,128.4 L256.9,128.7 L258.1,123.8 L260.6,125.8 L258.0,125.9 L256.6,123.8 L254.9,122.5 L252.5,123.2 L256.7,124.6 L255.3,122.1 L258.4,121.6 L256.8,123.9 L254.8,124.8 L253.5,121.3 L252.8,117.5 L256.0,116.9 L259.2,120.9 L257.6,124.6 L261.9,126.4 L265.2,127.4" fill="none" stroke="#1d9f78" stroke-width="2.9" stroke-linejoin="round"/><path d="M267.0,124.9 L265.8,122.1 L265.6,124.8 L264.0,123.2 L264.0,126.3 L263.5,130.9 L267.1,131.1 L268.5,127.6 L266.7,130.9 L265.3,131.0 L263.2,127.8 L260.7,128.0 L264.9,126.0 L266.8,121.9 L265.0,121.6 L269.1,123.2 L267.0,121.7 L269.5,124.5 L269.5,128.3 L271.9,123.8 L275.0,124.4 L277.1,127.2 L279.7,128.1 L278.0,126.8 L276.6,126.8 L275.1,128.6 L272.9,127.4 L271.7,129.4 L274.3,127.4 L273.0,125.6 L277.2,125.8 L275.2,126.9 L275.1,124.2 L275.3,129.1 L277.1,126.6 L281.2,128.2 L280.2,131.9 L284.0,130.2" fill="none" stroke="#8d8d8d" stroke-width="2.4" stroke-linejoin="round"/><path d="M267.0,128.1 L267.9,133.1 L265.7,129.7 L268.4,130.8 L267.9,128.0 L268.9,131.6 L268.5,135.1 L268.1,137.3 L270.2,133.6 L272.4,130.7 L271.0,127.8 L274.9,127.5 L273.5,127.0 L271.9,126.6 L272.0,122.1 L271.7,125.7 L269.8,122.8 L273.6,120.6 L276.8,121.2 L279.4,120.4 L279.0,116.9 L282.0,116.7 L280.4,118.4 L284.1,116.6" fill="none" stroke="#8d8d8d" stroke-width="2.4" stroke-linejoin="round"/><path d="M190.0,131.3 L193.1,127.7 L196.3,129.9 L194.8,130.5 L196.4,127.0 L194.7,123.5 L194.1,126.3 L193.3,128.5 L195.1,124.6 L199.4,123.8 L199.4,121.5 L198.1,118.6 L198.8,115.0 L197.2,117.1 L195.7,116.2 L196.0,120.7 L198.4,125.2 L201.9,125.8 L200.7,125.1 L201.7,129.5 L201.1,125.5 L204.3,126.0 L203.8,128.8 L202.7,132.2 L201.1,135.3 L199.3,134.2 L202.4,132.4 L202.3,135.8 L201.6,139.5 L203.1,141.7 L207.3,141.7 L206.8,143.4 L208.6,138.9 L207.2,137.7 L209.7,140.6 L210.4,136.6 L208.7,135.7 L212.1,131.9 L215.6,133.6 L216.0,129.4 L220.2,131.4 L222.2,127.6 L220.7,125.2 L219.4,125.4 L222.4,124.4 L220.1,123.9 L219.7,128.0 L218.5,130.9 L222.3,129.8 L221.7,134.4 L225.6,132.8 L223.7,131.4 L222.7,127.5 L221.0,125.5 L223.4,123.1 L222.1,122.1 L220.6,122.0 L221.0,126.7 L222.5,130.4 L223.1,133.9 L226.7,132.1 L224.1,133.3 L227.0,130.7 L225.8,129.0 L224.0,128.8 L221.9,127.5 L223.4,125.0 L221.7,121.8 L222.3,117.4 L223.5,122.4 L226.3,126.6 L225.8,129.3 L226.5,132.9 L226.7,136.1 L228.1,132.5" fill="none" stroke="#2cd13b" stroke-width="2.6" stroke-linejoin="round"/><path d="M190.0,130.8 L192.7,134.9 L191.1,135.4 L192.8,139.7 L195.4,140.5 L195.1,144.2 L199.1,144.2 L200.7,140.6 L202.9,138.5 L204.9,142.1 L207.2,137.1 L207.8,139.7 L206.1,139.7 L207.3,135.7 L207.9,139.9 L212.0,141.2 L216.1,140.2 L217.1,142.7 L220.9,141.4 L219.1,142.4 L217.7,142.5 L219.9,138.7 L222.2,140.6 L219.4,139.1 L220.5,135.8 L220.0,132.8 L219.1,129.8 L217.2,130.8 L219.9,134.8 L222.4,130.5 L220.7,134.1 L219.9,136.0 L217.8,138.3 L220.4,134.1 L222.1,130.6 L220.5,132.5 L218.8,135.8 L223.0,136.5 L221.1,139.2 L221.0,134.3 L223.5,137.2 L227.4,137.5" fill="none" stroke="#2cd13b" stroke-width="2.4" stroke-linejoin="round"/><path d="M212.0,139.9 L209.7,137.4 L208.1,137.3 L212.3,136.4 L216.7,137.4 L215.2,140.0 L218.9,140.0 L222.1,139.8 L222.5,135.2 L225.6,132.1 L225.9,136.8 L227.2,140.7 L230.5,143.4 L234.3,141.9 L231.5,140.1 L233.3,143.4 L236.3,144.3 L237.7,148.7 L235.0,149.4 L235.9,145.4 L237.4,148.4 L238.4,152.8 L236.6,155.3 L238.5,158.0 L242.0,160.2 L244.2,163.8 L247.2,164.6 L247.0,167.0 L250.2,165.1 L249.1,161.3 L251.2,158.1 L254.8,154.7 L256.4,158.8 L256.5,155.2 L256.1,151.5 L255.7,148.2 L257.3,144.2 L255.0,141.2 L256.5,138.5 L259.5,140.0 L260.3,136.1 L261.8,132.8 L264.9,129.3" fill="none" stroke="#e07e95" stroke-width="2.8" stroke-linejoin="round"/><path d="M212.0,141.4 L215.4,143.6 L216.1,146.2 L219.4,147.2 L220.9,144.0 L222.5,140.4 L222.9,137.1 L220.6,138.2 L218.3,138.9 L221.3,138.5 L218.6,137.2 L215.9,137.3 L215.7,140.8 L216.6,137.3 L219.4,136.1 L222.9,138.6 L224.0,134.5 L223.2,132.1 L224.7,136.9 L227.1,134.3 L225.4,137.6 L229.6,137.5 L230.4,140.7 L234.8,139.6 L231.9,138.5 L230.6,140.0 L230.2,137.0 L231.3,140.2 L232.8,143.3 L233.0,146.3 L231.7,142.3 L229.6,142.3 L232.7,140.4 L231.1,139.4 L234.0,141.4 L231.7,141.8 L230.0,139.9 L232.5,137.8 L234.4,134.8 L235.8,137.7 L237.8,140.7 L241.3,142.8 L243.6,138.2 L242.3,136.6 L243.7,139.6 L242.7,143.1 L244.5,147.1 L244.9,142.8 L248.3,145.6 L246.3,147.2 L244.4,147.7 L245.8,150.2 L246.8,153.1 L246.4,155.4 L247.7,151.7 L248.6,155.4 L248.9,151.8 L251.1,149.0 L249.0,149.8 L248.9,151.8 L249.0,155.3 L250.2,151.6 L249.0,147.5 L250.7,152.0 L250.3,154.0 L248.9,156.6 L249.7,159.7 L250.6,154.7 L248.7,152.5 L247.0,150.8 L248.2,146.2 L246.2,145.4 L244.3,144.0 L243.0,147.7 L246.1,149.0 L246.1,151.4 L245.9,153.8 L245.8,148.4 L248.6,149.7 L251.7,147.1 L255.1,144.3 L256.7,147.3 L254.0,147.9 L253.3,143.4 L256.9,144.7 L255.0,143.1 L254.2,140.7 L254.6,145.4 L258.4,148.0 L256.3,145.8 L254.9,143.0 L255.4,146.1 L254.4,147.4 L253.6,150.8 L251.9,147.2 L254.4,151.0 L254.8,153.5 L256.3,156.0 L260.1,153.8 L264.0,152.3" fill="none" stroke="#e07e95" stroke-width="2.7" stroke-linejoin="round"/><path d="M222.0,153.3 L223.8,151.0 L222.5,149.8 L226.9,148.5 L226.0,153.0 L228.1,157.4 L231.3,157.3 L230.3,159.2 L234.0,157.0 L235.1,153.3 L237.9,157.3 L235.8,155.7 L235.9,152.1 L233.4,153.1 L235.7,149.6 L235.0,153.0 L233.4,155.3 L231.4,155.0 L234.8,155.0 L239.2,155.8 L241.6,157.1 L241.5,154.3 L240.3,152.3 L242.1,148.6 L240.6,147.5 L239.3,147.3 L243.6,148.6 L245.7,152.4 L245.2,148.9 L244.6,151.8 L244.2,149.5 L247.4,148.8 L244.8,150.5 L248.1,152.0 L252.3,153.9 L252.9,156.7 L252.1,158.8 L251.4,156.5 L254.7,159.2 L257.7,162.2 L256.2,163.9 L254.4,160.4 L256.2,163.5 L258.2,159.6 L262.4,160.5 L260.0,161.7 L259.0,158.1 L258.7,155.1 L257.6,153.0 L261.0,150.2 L258.8,151.7 L262.3,151.4 L263.0,148.5 L262.8,146.4 L265.7,143.7 L266.9,140.6 L267.0,145.2 L266.1,143.3 L268.7,143.2 L271.6,144.0 L270.9,146.8 L272.8,143.9 L276.1,145.6 L273.7,143.9 L275.9,146.9 L279.4,145.1 L279.3,140.9 L280.0,138.4 L279.0,141.7 L276.7,139.8 L274.7,142.4 L276.1,145.7 L276.1,143.2 L276.7,147.8 L275.0,146.6 L276.4,143.8 L279.4,144.9 L278.2,142.3 L277.5,145.2 L276.1,145.2 L277.7,141.8 L281.6,142.4 L280.2,147.2 L278.1,145.2 L278.7,150.4 L277.4,152.2 L278.3,149.1 L279.1,152.4 L276.7,149.5 L278.3,146.2 L276.0,145.6 L274.9,142.9 L275.0,139.9 L276.6,136.6 L280.3,134.8 L283.9,136.6 L282.6,133.5 L283.0,129.5 L281.1,129.3 L279.7,128.8 L281.9,128.1 L279.7,129.2 L277.9,128.6 L278.5,127.1 L276.3,126.6 L277.5,131.0 L277.7,135.0 L274.8,135.8 L276.8,139.4 L276.8,143.3 L275.8,147.9 L278.0,151.5 L280.2,147.9 L278.7,152.0 L277.4,148.6 L277.9,145.8 L279.2,149.2 L281.2,151.7 L280.6,147.7 L284.1,147.8 L283.2,143.9 L282.5,148.2 L281.5,150.4 L283.1,153.1 L282.4,150.7 L286.6,148.9 L289.9,150.7 L291.5,146.0 L289.9,149.3 L288.3,149.5 L290.7,147.3 L290.5,151.3 L293.3,151.9" fill="none" stroke="#2cd13b" stroke-width="2.5" stroke-linejoin="round"/><path d="M222.0,151.0 L223.6,153.4 L224.8,148.9 L223.6,151.1 L223.8,147.3 L226.7,147.1 L230.2,147.1 L231.0,150.6 L228.4,151.0 L228.8,146.6 L229.5,151.1 L228.2,153.0 L230.5,150.7 L229.4,147.2 L227.1,145.5 L229.5,142.0 L227.3,142.8 L225.6,146.8 L224.4,149.8 L228.3,150.9 L231.1,152.5 L229.7,155.4 L231.9,158.9 L233.3,162.2 L234.8,158.9 L237.5,155.7 L236.2,156.0 L238.4,151.2 L240.0,155.8 L239.5,152.3 L243.7,151.8 L246.8,154.1 L244.7,154.8 L243.1,157.3 L247.1,157.5 L250.2,158.4 L252.9,161.1 L255.3,158.2 L256.6,154.6 L260.0,155.7 L263.8,156.6 L261.1,156.2 L260.7,158.9 L260.9,162.7 L259.0,165.8 L257.4,166.7 L257.4,168.5 L255.4,168.8 L254.7,170.4 L252.0,170.1 L252.1,166.2 L249.9,167.2 L251.6,170.3 L253.1,166.8 L250.5,168.4 L251.2,171.1 L251.6,172.8 L249.9,171.7 L253.9,168.5 L255.5,164.9 L254.4,166.4 L252.5,167.6 L255.5,169.5 L258.3,166.4 L257.0,168.1 L256.3,164.6 L254.6,164.9 L257.4,162.7 L255.5,162.9 L252.8,162.7 L250.8,164.4 L252.6,160.2 L255.6,161.1 L254.5,164.0 L253.2,163.8 L252.1,167.3 L253.7,169.7 L257.7,169.6 L257.8,164.8 L260.5,163.2 L262.6,158.0 L260.0,159.9 L263.7,161.2 L263.3,163.2 L266.4,165.0 L269.6,165.5 L267.4,163.6 L264.7,162.3 L263.4,157.6 L262.8,159.8 L266.1,162.6 L264.3,161.8 L265.1,156.4 L263.9,159.1 L263.9,154.6 L267.5,156.8 L267.4,160.0 L266.7,155.9 L266.6,152.9 L269.1,154.3 L266.1,155.7 L265.7,158.0 L266.9,154.4 L267.5,150.1 L270.4,149.4 L268.2,151.8 L271.2,154.1 L271.8,150.0 L273.3,146.8 L276.2,146.8 L279.2,150.6 L278.3,153.3 L276.7,154.5 L279.1,152.3 L279.1,155.9 L282.5,158.3 L283.3,154.9 L282.0,155.9 L283.0,160.7 L286.2,156.7 L289.5,154.7 L288.3,157.1 L291.6,154.1 L291.0,156.5 L294.2,152.6" fill="none" stroke="#2cd13b" stroke-width="2.6" stroke-linejoin="round"/><path d="M192.0,149.2 L195.2,150.3 L197.2,153.7 L195.2,154.0 L198.3,156.1 L195.8,155.8 L194.2,154.7 L192.3,156.1 L192.8,159.1 L196.8,156.8 L195.7,154.8 L194.7,156.9 L196.8,159.6 L195.5,162.5 L199.4,160.5 L198.3,157.0 L201.3,156.7 L199.6,160.1 L198.1,158.5 L198.5,162.5 L198.2,159.0 L195.6,156.7 L198.6,157.2 L202.7,157.4 L204.5,154.8 L204.1,150.5 L204.2,147.8 L207.7,146.6 L209.1,150.1 L212.2,153.9 L213.5,157.5 L212.3,155.7 L213.9,151.3 L217.5,151.5" fill="none" stroke="#f16913" stroke-width="2.7" stroke-linejoin="round"/><path d="M192.0,148.7 L196.1,147.7 L199.5,145.2 L200.5,141.3 L203.6,139.0 L201.6,140.5 L203.9,143.9 L202.4,144.9 L203.0,149.4 L202.7,153.0 L203.7,155.8 L205.5,158.5 L208.4,159.3 L209.2,154.7 L207.8,153.1 L211.4,153.5 L214.6,154.7 L212.3,154.7 L210.4,154.5 L212.4,158.8 L214.9,154.4 L212.1,153.1 L214.5,154.5 L214.2,157.4 L212.2,153.6 L215.6,151.0 L217.8,147.4" fill="none" stroke="#f16913" stroke-width="2.8" stroke-linejoin="round"/><path d="M217.0,150.3 L217.0,154.0 L217.8,158.4 L220.2,161.5 L219.7,158.0 L217.9,159.9 L219.9,163.2 L223.2,162.0 L222.7,164.2 L221.2,160.1 L221.8,164.1 L223.9,159.1 L224.5,162.7 L221.7,163.1 L223.8,165.3 L224.3,167.5 L223.1,168.1 L222.7,163.9 L220.6,165.9 L218.7,166.7 L216.4,167.2 L213.4,165.3 L211.8,161.6 L214.6,160.7 L217.5,159.4 L214.9,160.5 L219.3,160.3 L222.4,160.9 L226.8,161.6 L225.7,157.3 L223.3,156.1 L221.5,154.3 L220.4,153.0 L224.5,152.8 L222.9,149.5 L224.4,154.5 L223.8,150.6 L223.3,147.2 L222.3,145.3 L225.1,147.0 L224.5,144.8 L225.9,140.5 L225.8,145.0 L225.0,140.7 L228.2,140.5 L226.8,141.1 L227.1,137.5 L228.2,134.3 L228.2,131.8 L226.5,135.3 L225.4,140.4 L225.4,137.1 L223.7,137.5 L223.8,133.2 L224.5,138.1 L223.3,136.6 L224.8,133.7 L225.1,137.2 L226.3,140.8 L226.2,144.5 L229.5,145.7 L227.6,149.5 L231.0,150.4 L233.9,148.6 L235.3,146.0 L234.2,147.5 L236.3,143.2 L236.8,147.3 L238.7,152.3 L237.2,148.8 L236.4,151.3 L239.1,149.8 L238.0,145.5 L240.8,145.8 L241.3,142.5 L243.7,140.3" fill="none" stroke="#8d8d8d" stroke-width="2.3" stroke-linejoin="round"/><path d="M217.0,151.3 L214.6,154.1 L218.5,156.3 L221.9,154.7 L221.0,157.2 L224.5,157.1 L227.1,159.6 L227.4,163.3 L227.4,167.0 L229.8,164.5 L233.0,160.4 L234.0,164.7 L236.2,167.4 L238.2,170.2 L237.8,171.9 L241.5,173.6 L244.3,170.0" fill="none" stroke="#8d8d8d" stroke-width="2.7" stroke-linejoin="round"/><path d="M177.0,157.5 L175.3,158.1 L177.1,162.6 L178.5,165.3 L182.7,165.2 L184.0,168.9 L186.4,172.0 L183.7,173.3 L181.6,169.8 L179.2,166.9 L182.6,167.8 L185.5,169.2 L184.1,165.8 L182.5,164.1 L179.6,163.0 L178.8,160.7 L177.4,160.9 L176.9,164.2 L177.5,167.3 L176.3,168.8 L177.0,165.0 L177.2,160.3 L178.8,157.6 L178.0,160.2 L176.7,161.0 L175.5,163.9 L178.6,162.5 L179.1,166.5 L177.6,165.5 L177.6,167.8 L180.0,164.8 L182.3,161.6 L185.1,160.0 L188.4,157.5 L191.4,156.6 L190.2,155.6 L191.9,159.9 L194.5,163.5 L198.6,162.0 L201.1,159.8 L201.3,162.6 L204.2,160.6 L203.9,157.8 L202.1,159.2 L201.3,160.9 L200.0,159.7 L204.3,159.9 L203.1,156.1 L206.2,157.7 L209.3,157.9 L212.8,156.8 L213.3,153.6 L211.1,152.9 L214.8,151.6 L218.0,150.6 L220.6,154.2 L219.6,156.7 L222.5,157.0" fill="none" stroke="#345da9" stroke-width="2.9" stroke-linejoin="round"/><path d="M177.0,158.7 L176.5,161.0 L175.0,157.2 L176.7,160.4 L179.6,156.5 L177.2,154.8 L180.2,156.4 L180.3,151.9 L184.5,151.3 L184.3,148.0 L182.7,149.5 L182.8,152.7 L184.3,156.4 L185.4,152.9 L182.9,151.6 L186.1,152.4 L187.8,155.3 L187.8,160.0 L189.7,162.6 L187.4,160.2 L188.4,163.3 L192.1,163.5 L191.4,159.6 L195.0,159.9 L194.0,157.6 L197.8,156.3 L199.7,154.3 L201.2,151.1 L199.7,149.0 L203.1,148.1 L205.0,145.9 L203.1,147.7 L206.8,147.9 L206.7,152.1 L207.5,155.3 L206.0,158.0 L208.1,161.3 L208.0,158.2 L208.4,154.8 L210.3,158.5 L213.5,158.3 L210.7,157.1 L209.7,155.4 L213.8,153.4 L212.3,155.2 L209.9,154.8 L208.4,158.0 L209.9,160.6 L209.6,164.8 L211.4,161.5 L209.5,161.8 L208.5,158.8 L206.5,158.1 L209.6,156.2 L212.3,158.4 L216.2,156.4 L219.3,158.0 L221.1,160.8 L222.2,158.1" fill="none" stroke="#345da9" stroke-width="2.4" stroke-linejoin="round"/><path d="M187.0,164.1 L185.7,161.3 L189.1,162.1 L191.6,165.0 L195.8,163.7 L199.2,160.8 L198.2,163.1 L199.0,168.0 L200.0,165.1 L198.2,165.9 L201.5,168.3 L204.0,170.2" fill="none" stroke="#e07e95" stroke-width="2.4" stroke-linejoin="round"/><path d="M187.0,162.6 L190.4,164.6 L189.0,165.3 L191.1,163.0 L189.0,160.4 L191.5,158.4 L189.9,156.8 L186.9,157.8 L189.1,155.8 L191.4,158.8 L194.1,156.9 L196.0,159.4 L195.4,162.9 L192.6,163.6 L196.1,165.1 L198.3,163.1 L199.6,167.8 L203.6,165.8" fill="none" stroke="#e07e95" stroke-width="2.6" stroke-linejoin="round"/><path d="M222.0,157.2 L221.2,160.2 L219.0,161.6 L216.2,163.3 L218.9,161.2 L221.2,158.9 L220.5,160.9 L222.2,165.5 L221.2,163.4 L224.4,163.8 L222.3,166.0 L224.2,169.6 L224.4,173.3 L226.7,175.7 L227.4,171.5 L229.0,175.1 L227.1,175.2 L229.1,177.6 L228.7,173.7 L232.4,171.1 L235.5,170.8 L239.1,166.9 L241.2,169.7 L245.7,169.2 L244.2,168.0 L247.4,169.6 L249.7,164.5 L252.8,163.3 L255.9,160.8 L255.1,162.5 L254.5,160.0 L255.9,156.7 L254.3,158.6 L255.8,154.8 L259.3,151.8" fill="none" stroke="#f16913" stroke-width="3.0" stroke-linejoin="round"/><path d="M222.0,157.3 L225.5,155.5 L226.2,159.5 L230.5,158.2 L229.6,161.4 L233.8,159.8 L231.3,161.9 L234.0,165.1 L234.4,168.8 L231.5,167.5 L231.6,171.5 L230.5,167.7 L228.7,168.9 L231.3,171.9 L231.9,176.2 L230.0,174.6 L228.5,170.5 L230.2,166.2 L230.9,161.3 L229.4,164.3 L228.2,162.0 L228.6,165.7 L226.4,163.4 L224.0,162.7 L226.5,165.5 L225.8,162.7 L228.6,162.1 L230.9,159.2 L229.2,157.8 L232.0,156.8 L231.4,159.3 L229.3,160.3 L230.3,163.2 L228.7,159.1 L227.2,158.4 L230.3,161.9 L233.4,162.5 L234.8,166.0 L235.1,162.9 L233.5,165.1 L237.3,165.2 L240.7,168.3 L242.7,169.8 L245.2,167.3 L244.6,169.2 L247.1,165.8 L246.7,161.5 L245.4,159.3 L245.4,162.8 L245.3,160.0 L243.6,159.1 L242.4,156.9 L241.2,158.2 L242.8,155.1 L241.1,158.4 L239.5,155.2 L239.3,158.9 L237.1,156.3 L237.7,153.0 L240.5,153.2 L242.0,150.4 L240.6,149.7 L238.8,151.7 L240.0,156.3 L240.1,153.5 L243.1,151.4 L243.9,148.7 L243.9,152.8 L246.8,153.2 L244.8,155.4 L243.0,158.9 L244.3,161.9 L242.9,161.4 L242.2,158.7 L242.4,162.0 L240.9,160.9 L245.2,161.7 L244.3,159.7 L248.4,158.4 L248.6,161.9 L252.1,164.0 L251.0,159.3 L249.9,161.6 L253.3,164.4 L252.2,166.4 L253.2,163.0 L251.9,165.3 L250.3,162.7 L253.5,163.1 L256.7,160.4 L259.9,161.8" fill="none" stroke="#f16913" stroke-width="2.7" stroke-linejoin="round"/><path d="M197.0,171.9 L195.6,172.8 L194.7,170.7 L196.6,168.0 L199.0,170.7 L200.7,168.4 L202.7,171.7 L206.3,170.7 L207.8,167.0 L209.5,164.5 L207.4,163.4 L206.1,165.6 L206.5,161.3 L206.8,166.2 L206.2,170.3 L204.1,167.2 L202.0,170.8 L202.5,175.9 L199.9,173.7 L202.6,170.0 L206.3,168.3 L204.9,164.9 L205.4,162.5 L204.9,160.5 L205.8,157.9 L204.1,156.2 L206.1,153.0 L208.7,156.3 L208.3,161.0 L208.5,157.3 L208.3,161.8 L207.0,162.3 L209.6,164.5 L208.0,162.3 L208.6,160.0 L209.8,157.6 L211.7,154.2 L210.1,153.2 L213.2,151.9 L213.3,157.4 L216.4,158.8 L219.9,160.9 L218.5,157.6 L217.1,160.7 L220.5,161.3 L221.0,165.6 L221.4,163.2 L223.5,165.9 L221.2,166.6 L221.4,171.0 L221.0,175.1 L221.3,179.4 L220.6,181.2 L221.5,184.5 L220.4,186.7 L223.8,183.3 L223.6,178.5 L226.1,181.0 L226.4,176.2 L224.3,174.3 L222.9,176.1 L225.7,174.8 L228.3,176.1 L230.2,178.4 L233.5,179.8 L237.0,177.2 L241.4,177.7 L243.3,180.8 L242.3,182.4 L240.1,184.9 L237.7,183.0 L236.7,184.3 L240.7,184.8 L241.3,187.9 L239.8,190.2 L243.0,190.7 L242.9,193.0 L243.8,187.6 L242.4,185.5 L245.1,181.5 L245.8,177.3 L247.4,180.5 L245.6,182.7 L246.4,178.9 L246.2,182.7 L246.3,177.7 L244.8,180.2 L242.2,178.9 L245.0,174.7 L247.4,171.5 L245.7,169.3 L246.3,166.0 L249.7,166.1 L253.7,164.7 L256.4,161.2 L259.6,164.3 L261.4,161.0 L260.3,159.5 L258.5,163.3 L256.6,163.1 L260.4,165.6 L259.2,169.2 L258.8,171.9 L261.7,174.6 L265.5,175.7 L262.7,177.5 L265.7,177.5 L264.5,177.9 L267.8,180.2" fill="none" stroke="#9d6e48" stroke-width="2.6" stroke-linejoin="round"/><path d="M197.0,173.6 L199.5,171.7 L200.2,168.5 L202.3,165.1 L205.2,165.3 L206.0,162.3 L210.0,164.5 L212.4,162.4 L211.2,161.7 L208.7,160.9 L206.4,161.3 L205.5,165.1 L203.9,168.2 L202.2,166.4 L205.6,166.6 L206.7,169.7 L209.2,166.8 L212.6,166.9 L213.3,171.3 L211.8,171.9 L214.3,173.9 L217.0,176.1 L220.5,173.6 L218.9,175.2 L221.7,179.1 L224.5,174.8 L227.7,176.6 L229.2,181.0 L232.1,181.7 L230.6,181.8 L229.4,182.9 L232.8,181.2 L231.5,180.9 L234.7,177.2 L234.2,174.1 L235.0,178.3 L238.2,175.2 L236.1,178.6 L234.0,177.0 L232.7,176.0 L231.2,174.0 L229.2,175.3 L228.8,177.5 L232.2,178.2 L234.9,175.9 L235.6,171.1 L235.4,174.1 L233.2,173.9 L235.7,175.8 L233.9,177.6 L235.2,174.2 L233.2,170.8 L233.6,167.2 L233.7,170.6 L236.5,170.6 L235.2,172.1 L237.1,169.8 L237.4,165.3 L235.8,164.0 L233.2,165.2 L231.0,163.1 L228.6,161.0 L229.9,157.3 L228.9,155.8 L231.2,154.5 L235.1,158.1 L233.3,159.3 L235.9,157.5 L234.3,155.5 L237.0,153.2 L236.4,151.9 L234.6,150.4 L232.7,150.2 L235.9,152.2 L234.7,156.8 L236.8,160.3 L240.1,161.4 L241.0,165.6 L240.7,169.4 L238.6,168.4 L241.9,167.7 L245.7,167.6 L249.7,166.9 L248.3,170.9 L250.3,168.3 L249.5,171.0 L247.7,169.4 L250.7,166.3 L254.3,168.3 L255.0,173.0 L256.2,170.3 L254.9,174.0 L254.4,171.5 L256.6,175.7 L259.7,175.3 L261.7,172.7 L264.5,174.6 L266.7,177.2 L270.7,178.8" fill="none" stroke="#9d6e48" stroke-width="2.5" stroke-linejoin="round"/><path d="M192.0,179.7 L195.8,181.6 L196.2,177.9 L199.2,179.4 L202.4,179.1 L204.4,175.2 L203.7,172.5 L206.4,173.2 L203.8,172.9 L201.2,172.0 L200.8,174.9 L201.9,180.1 L199.7,180.1 L202.7,179.5 L206.9,180.2 L210.2,177.8 L207.9,178.8 L205.3,177.9 L203.9,179.4 L204.0,182.3 L203.3,185.7 L204.4,181.7 L204.6,186.6 L207.9,185.8 L205.8,185.9 L204.7,182.2 L208.3,182.7 L206.6,184.0 L206.0,180.0 L208.7,178.5 L210.9,174.7 L209.6,179.2 L209.9,183.8 L213.9,183.8 L210.9,184.8 L213.1,182.1 L212.7,179.6 L210.5,179.1 L214.1,180.3 L215.7,183.6 L218.3,185.2 L218.1,188.6 L216.9,190.1 L219.5,191.9 L217.6,191.8 L219.9,194.1 L220.1,196.8 L222.2,193.2" fill="none" stroke="#f16913" stroke-width="2.4" stroke-linejoin="round"/><path d="M192.0,180.7 L192.2,176.8 L190.7,179.4 L190.6,182.1 L193.0,178.8 L191.5,177.9 L190.1,175.0 L189.3,173.4 L189.3,178.2 L192.0,179.2 L196.2,177.7 L195.4,176.1 L196.7,172.9 L195.3,174.9 L198.9,172.6 L196.7,171.1 L194.8,172.1 L196.4,169.9 L197.4,175.2 L200.9,172.8 L204.1,176.2 L203.1,173.0 L205.7,174.8 L208.8,178.2 L212.5,179.8 L212.4,183.4 L216.3,182.8 L215.1,183.7 L213.3,183.6 L211.4,184.9 L213.4,187.8 L213.1,185.0 L215.7,182.9 L214.1,182.1 L217.6,180.8 L220.8,183.7 L221.9,180.7 L220.8,181.8 L220.1,178.5 L222.8,176.7" fill="none" stroke="#f16913" stroke-width="2.8" stroke-linejoin="round"/><path d="M202.0,16.6 L200.0,19.5 L199.6,15.5 L196.7,14.6 L197.6,17.6 L201.5,17.0 L199.3,16.8 L202.2,16.7 L201.8,14.4 L199.4,12.5 L197.0,13.3 L195.9,17.0 L198.8,16.6 L201.8,18.1 L204.0,20.0 L203.2,24.1 L200.5,25.5 L204.9,23.8 L204.6,19.8 L207.2,15.8 L209.9,13.3 L209.3,11.2 L206.6,13.7 L205.2,9.8 L206.2,13.0 L205.9,17.7 L204.8,19.7 L205.5,23.2 L208.0,26.9 L211.7,27.2 L213.9,22.3 L217.8,21.4 L221.0,23.0 L219.8,24.0 L217.9,21.2 L218.1,24.6 L220.6,20.7 L221.3,15.6 L219.4,19.0 L220.2,22.3 L220.2,18.9 L223.0,16.7 L226.3,16.1 L225.4,18.6 L225.2,14.3 L226.5,18.1 L226.3,20.9 L227.4,16.8 L228.5,20.4 L226.6,21.3 L225.9,24.6 L225.7,27.9 L227.6,29.9 L231.0,29.3 L234.4,29.2 L235.5,23.8 L238.0,22.2 L239.3,26.6 L239.2,30.7 L237.8,29.9 L238.7,32.6 L236.0,33.1 L236.5,29.3 L238.3,31.4 L236.1,32.9 L239.0,32.4 L242.7,32.9 L245.5,34.8 L249.5,36.3 L247.8,35.7 L245.7,32.3 L249.2,29.9 L249.3,24.3 L249.3,27.7 L248.8,23.2 L249.3,20.0 L250.7,22.6 L252.0,17.3" fill="none" stroke="#d73229" stroke-width="2.2" stroke-linejoin="round"/><path d="M202.0,18.9 L203.1,22.3 L201.8,21.5 L200.4,18.5 L201.0,21.9 L199.9,19.3 L203.1,21.8 L202.9,26.0 L204.0,22.6 L204.8,18.7 L203.4,16.2 L206.8,14.2 L210.3,14.2 L213.4,13.2 L215.7,10.9 L216.5,14.2 L219.5,12.5 L217.0,11.3 L221.3,9.9 L222.3,6.6 L220.9,9.9 L222.2,14.2 L220.8,16.6 L219.4,20.0 L219.2,22.4 L217.6,24.2 L219.5,21.6 L222.3,19.5 L220.4,18.4 L218.4,19.0 L221.6,22.4 L221.5,18.7 L221.8,22.8 L224.2,24.8 L226.9,27.2 L224.4,25.2 L222.5,25.0 L224.1,27.3 L221.2,26.6 L220.1,29.9 L221.4,33.8 L221.8,37.7 L224.1,34.1 L224.3,36.8 L223.8,32.8 L225.8,29.7 L223.7,27.6 L224.1,23.2 L227.1,24.3 L228.1,21.3 L228.1,18.5 L231.9,21.2 L235.5,21.8 L234.2,23.2 L237.6,20.5 L238.6,16.6 L237.3,13.6 L238.3,17.7 L237.2,20.3 L240.7,21.4 L238.9,19.6 L240.7,15.5 L244.5,15.7 L244.5,13.2 L241.6,13.2 L241.7,16.5 L240.6,18.0 L239.3,21.5 L238.7,16.6 L241.0,12.4 L245.2,11.9 L248.1,10.6 L251.3,8.7 L250.0,6.5 L253.0,4.7" fill="none" stroke="#d73229" stroke-width="2.3" stroke-linejoin="round"/><path d="M217.0,89.3 L220.1,89.5 L219.4,85.9 L223.2,86.3 L225.9,88.6 L229.9,89.8 L228.2,91.2 L225.7,91.5 L224.6,92.7 L228.3,93.7 L225.3,92.8 L225.8,89.6 L223.3,88.6 L222.6,85.1 L225.1,89.6 L228.0,87.7 L228.1,92.4 L230.8,89.5 L232.0,86.7 L234.7,87.1 L238.3,89.6 L241.4,88.6 L242.2,84.9 L246.7,84.7 L250.4,82.4" fill="none" stroke="#d73229" stroke-width="2.4" stroke-linejoin="round"/><path d="M217.0,87.0 L221.0,88.2 L224.2,91.7 L228.1,91.5 L230.6,87.7 L232.9,84.2 L235.7,82.1 L235.4,85.1 L235.1,82.3 L233.0,83.2 L231.9,81.5 L235.2,81.4 L238.2,77.8 L235.6,77.6 L234.8,80.9 L238.5,82.2 L237.9,79.0 L241.3,82.6 L239.9,85.8 L240.4,89.1 L239.3,85.8 L242.7,85.0 L242.3,82.5 L240.4,85.6 L242.4,81.9 L241.0,85.6 L242.2,90.2 L240.7,88.6 L241.5,85.4 L242.5,90.5 L245.8,92.0 L247.6,88.6" fill="none" stroke="#d73229" stroke-width="2.6" stroke-linejoin="round"/><path d="M237.0,138.0 L238.8,141.7 L238.6,138.8 L235.7,138.5 L239.3,135.3 L239.1,132.4 L241.8,130.3 L243.3,128.2 L243.6,133.4 L246.6,132.6 L251.0,132.8 L248.8,135.9 L251.6,134.1 L254.1,137.6 L257.3,141.1 L260.5,139.2 L262.6,142.5 L262.8,145.9 L266.3,144.5 L265.6,147.6 L265.7,143.0 L267.8,138.3" fill="none" stroke="#ede92f" stroke-width="2.8" stroke-linejoin="round"/><path d="M237.0,135.8 L240.5,136.0 L242.6,139.6 L242.2,136.8 L244.0,141.5 L245.0,137.5 L243.6,138.6 L246.7,139.4 L247.2,135.1 L246.8,138.6 L245.9,142.5 L244.7,143.3 L246.9,138.9 L246.0,141.1 L244.6,138.2 L246.4,141.8 L245.5,145.7 L248.0,140.9 L249.3,136.1 L249.5,132.0 L252.6,129.0 L256.2,131.6 L254.9,129.5 L257.4,125.9 L259.8,123.2 L258.1,126.3 L262.2,126.5 L266.6,126.6 L271.0,127.4" fill="none" stroke="#ede92f" stroke-width="2.6" stroke-linejoin="round"/><polygon points="202.4,14.4 206.2,10.5 211.0,12.8 210.3,18.2 205.0,19.2" fill="#f16913" stroke="#a85a20" stroke-width="0.9"/><circle cx="207.0" cy="15.0" r="1.2" fill="#c8187a"/><polygon points="222.5,81.3 226.3,77.5 231.1,79.9 230.3,85.2 224.9,86.1" fill="#f16913" stroke="#a85a20" stroke-width="0.9"/><circle cx="227.0" cy="82.0" r="1.2" fill="#c8187a"/><polygon points="242.8,80.1 247.5,77.4 251.5,81.0 249.3,86.0 243.9,85.4" fill="#f16913" stroke="#a85a20" stroke-width="0.9"/><circle cx="247.0" cy="82.0" r="1.2" fill="#c8187a"/><polygon points="271.4,69.3 267.2,72.6 262.7,69.6 264.2,64.4 269.6,64.2" fill="#f16913" stroke="#a85a20" stroke-width="0.9"/><circle cx="267.0" cy="68.0" r="1.2" fill="#c8187a"/><polygon points="283.6,68.3 280.1,72.5 275.1,70.5 275.5,65.1 280.7,63.7" fill="#f16913" stroke="#a85a20" stroke-width="0.9"/><circle cx="279.0" cy="68.0" r="1.2" fill="#c8187a"/><polygon points="205.6,179.9 200.3,181.3 197.4,176.7 200.8,172.6 205.9,174.5" fill="#d73229" stroke="#a85a20" stroke-width="0.9"/><circle cx="202.0" cy="177.0" r="1.2" fill="#c8187a"/><polygon points="230.8,174.4 230.7,179.8 225.5,181.3 222.4,176.9 225.7,172.6" fill="#d73229" stroke="#a85a20" stroke-width="0.9"/><circle cx="227.0" cy="177.0" r="1.2" fill="#c8187a"/><polygon points="241.5,176.0 246.7,174.7 249.6,179.3 246.1,183.5 241.1,181.4" fill="#d73229" stroke="#a85a20" stroke-width="0.9"/><circle cx="245.0" cy="179.0" r="1.2" fill="#c8187a"/><polygon points="263.6,169.6 268.7,171.3 268.7,176.7 263.5,178.4 260.4,174.0" fill="#d73229" stroke="#a85a20" stroke-width="0.9"/><circle cx="265.0" cy="174.0" r="1.2" fill="#c8187a"/><polygon points="194.4,142.2 197.4,137.7 202.6,139.1 202.9,144.5 197.8,146.4" fill="#d73229" stroke="#a85a20" stroke-width="0.9"/><circle cx="199.0" cy="142.0" r="1.2" fill="#c8187a"/><polygon points="215.3,30.7 220.6,32.1 220.9,37.5 215.8,39.5 212.4,35.3" fill="#f16913" stroke="#a85a20" stroke-width="0.9"/><circle cx="217.0" cy="35.0" r="1.2" fill="#c8187a"/><polygon points="229.2,108.3 234.6,108.2 236.4,113.3 232.1,116.6 227.7,113.5" fill="#f16913" stroke="#a85a20" stroke-width="0.9"/><circle cx="232.0" cy="112.0" r="1.2" fill="#c8187a"/><polygon points="209.2,60.7 207.6,55.5 212.1,52.4 216.4,55.6 214.6,60.8" fill="#d73229" stroke="#a85a20" stroke-width="0.9"/><circle cx="212.0" cy="57.0" r="1.2" fill="#c8187a"/><polygon points="248.7,143.8 254.0,142.8 256.6,147.6 252.9,151.5 248.0,149.2" fill="#d73229" stroke="#a85a20" stroke-width="0.9"/><circle cx="252.0" cy="147.0" r="1.2" fill="#c8187a"/><polygon points="196.6,102.5 192.9,106.5 188.0,104.2 188.6,98.9 193.9,97.8" fill="#f16913" stroke="#a85a20" stroke-width="0.9"/><circle cx="192.0" cy="102.0" r="1.2" fill="#c8187a"/><polygon points="277.3,20.8 278.9,15.1 284.7,14.8 286.8,20.3 282.3,24.0" fill="#8ce68c" stroke="#56a848" stroke-width="0.9"/><circle cx="282.0" cy="19.0" r="1.2" fill="#c8187a"/><polygon points="266.0,32.5 269.0,27.4 274.8,28.7 275.3,34.6 269.9,36.9" fill="#8ce68c" stroke="#56a848" stroke-width="0.9"/><circle cx="271.0" cy="32.0" r="1.2" fill="#c8187a"/><polygon points="279.0,37.6 276.0,32.5 280.0,28.1 285.3,30.5 284.7,36.4" fill="#8ce68c" stroke="#56a848" stroke-width="0.9"/><circle cx="281.0" cy="33.0" r="1.2" fill="#c8187a"/><polygon points="284.6,53.5 278.8,54.5 276.1,49.3 280.1,45.1 285.4,47.7" fill="#8ce68c" stroke="#56a848" stroke-width="0.9"/><circle cx="281.0" cy="50.0" r="1.2" fill="#c8187a"/><polygon points="260.0,50.0 263.4,45.3 269.0,47.0 269.1,52.9 263.5,54.8" fill="#8ce68c" stroke="#56a848" stroke-width="0.9"/><circle cx="265.0" cy="50.0" r="1.2" fill="#c8187a"/><polygon points="276.8,68.4 272.1,72.0 267.3,68.7 268.9,63.0 274.8,62.9" fill="#8ce68c" stroke="#56a848" stroke-width="0.9"/><circle cx="272.0" cy="67.0" r="1.2" fill="#c8187a"/><polygon points="268.3,81.6 274.1,80.5 277.0,85.6 273.0,89.9 267.6,87.5" fill="#8ce68c" stroke="#56a848" stroke-width="0.9"/><circle cx="272.0" cy="85.0" r="1.2" fill="#c8187a"/><polygon points="280.5,87.7 282.9,93.0 278.6,97.0 273.4,94.1 274.6,88.3" fill="#8ce68c" stroke="#56a848" stroke-width="0.9"/><circle cx="278.0" cy="92.0" r="1.2" fill="#c8187a"/><polygon points="294.0,102.6 296.9,97.5 302.7,98.6 303.4,104.4 298.0,106.9" fill="#8ce68c" stroke="#56a848" stroke-width="0.9"/><circle cx="299.0" cy="102.0" r="1.2" fill="#c8187a"/><polygon points="287.1,108.9 293.0,109.0 294.7,114.6 290.0,118.0 285.2,114.5" fill="#8ce68c" stroke="#56a848" stroke-width="0.9"/><circle cx="290.0" cy="113.0" r="1.2" fill="#c8187a"/><polygon points="276.1,113.9 270.5,115.8 267.0,111.1 270.4,106.3 276.0,108.0" fill="#8ce68c" stroke="#56a848" stroke-width="0.9"/><circle cx="272.0" cy="111.0" r="1.2" fill="#c8187a"/><polygon points="277.4,135.0 272.4,131.9 273.8,126.2 279.6,125.7 281.9,131.2" fill="#8ce68c" stroke="#56a848" stroke-width="0.9"/><circle cx="277.0" cy="130.0" r="1.2" fill="#c8187a"/><polygon points="279.1,158.1 281.4,152.7 287.3,153.2 288.6,159.0 283.5,162.0" fill="#8ce68c" stroke="#56a848" stroke-width="0.9"/><circle cx="284.0" cy="157.0" r="1.2" fill="#c8187a"/><polygon points="254.7,166.6 255.2,160.7 260.9,159.4 264.0,164.4 260.2,168.9" fill="#8ce68c" stroke="#56a848" stroke-width="0.9"/><circle cx="259.0" cy="164.0" r="1.2" fill="#c8187a"/><polygon points="279.4,172.4 274.1,174.9 270.0,170.6 272.9,165.5 278.6,166.6" fill="#8ce68c" stroke="#56a848" stroke-width="0.9"/><circle cx="275.0" cy="170.0" r="1.2" fill="#c8187a"/><polygon points="300.6,145.6 306.4,146.3 307.5,152.1 302.4,155.0 298.1,150.9" fill="#8ce68c" stroke="#56a848" stroke-width="0.9"/><circle cx="303.0" cy="150.0" r="1.2" fill="#c8187a"/></svg>
<div style="left:265px;top:319px;width:208px;height:143px;background:#e3e0b8;border-style:solid;border-width:1px;border-color:#b8b8a8 #8e8c6c #8e8c6c #b8b8a8;box-shadow:inset 1px 1px 0 #fbfbee"></div>
<div style="left:294px;top:332px;width:175px;height:119px;background:#fff"></div>
<div class="t" style="left:382px;top:321.01px;height:10.98px;line-height:10.98px;font-size:9.15px;font-weight:bold;color:#111;transform:translateX(-50%) scaleX(1.0);transform-origin:50% 50%;">Average Motility of Green Cells</div>
<div class="t" style="left:292.5px;top:334.78px;height:10.44px;line-height:10.44px;font-size:8.7px;color:#111;transform:translateX(-100%) scaleX(1.0);transform-origin:100% 50%;">0.5</div>
<div class="t" style="left:292.5px;top:440.28px;height:10.44px;line-height:10.44px;font-size:8.7px;color:#111;transform:translateX(-100%) scaleX(1.0);transform-origin:100% 50%;">-0.052</div>
<div class="t" style="left:289.5px;top:392.6px;height:11.04px;line-height:11.04px;transform:translate(-50%,-50%) rotate(-90deg);font-size:9.2px;color:#222">mu (micrometers/min)</div>
<div class="t" style="left:296px;top:451.28px;height:10.44px;line-height:10.44px;font-size:8.7px;color:#111;transform:translateX(-50%) scaleX(1.0);transform-origin:50% 50%;">0</div>
<div class="t" style="left:378.5px;top:451.16px;height:10.68px;line-height:10.68px;font-size:8.9px;color:#111;transform:translateX(-50%) scaleX(1.0);transform-origin:50% 50%;">Time (hours)</div>
<div class="t" style="left:467px;top:451.28px;height:10.44px;line-height:10.44px;font-size:8.7px;color:#111;transform:translateX(-100%) scaleX(1.0);transform-origin:100% 50%;">24</div>
<svg style="position:absolute;left:294px;top:332px" width="175" height="119"><line x1="0" y1="107.5" x2="175" y2="107.5" stroke="#222" stroke-width="1"/><polyline points="0.00,83.8 0.12,81.9 0.24,87.1 0.36,85.3 0.49,74.2 0.61,85.2 0.73,77.0 0.85,78.4 0.97,84.1 1.09,77.1 1.22,89.6 1.34,75.0 1.46,81.4 1.58,76.5 1.70,93.3 1.82,77.5 1.95,85.4 2.07,79.5 2.19,80.7 2.31,72.8 2.43,85.5 2.55,79.8 2.68,80.3 2.80,81.8 2.92,69.1 3.04,79.8 3.16,88.7 3.28,91.4 3.41,83.0 3.53,84.5 3.65,81.0 3.77,86.8 3.89,82.3 4.01,77.8 4.13,93.2 4.26,74.6 4.38,76.6 4.50,75.6 4.62,80.5 4.74,85.2 4.86,91.0 4.99,85.7 5.11,80.9 5.23,82.5 5.35,72.7 5.47,75.9 5.59,74.9 5.72,75.9 5.84,76.2 5.96,84.4 6.08,79.4 6.20,91.1 6.32,81.3 6.45,75.9 6.57,76.5 6.69,89.3 6.81,78.3 6.93,76.0 7.05,85.1 7.18,84.9 7.30,68.5 7.42,84.7 7.54,82.8 7.66,74.7 7.78,78.4 7.90,85.6 8.03,85.8 8.15,81.6 8.27,77.8 8.39,74.3 8.51,75.3 8.63,89.3 8.76,81.6 8.88,86.3 9.00,87.9 9.12,78.8 9.24,87.4 9.36,79.3 9.49,73.5 9.61,86.1 9.73,91.0 9.85,84.3 9.97,90.7 10.09,79.2 10.22,77.1 10.34,83.4 10.46,85.9 10.58,74.6 10.70,76.9 10.82,68.0 10.95,88.1 11.07,84.4 11.19,100.3 11.31,82.8 11.43,98.6 11.55,76.8 11.67,91.9 11.80,78.1 11.92,83.3 12.04,80.9 12.16,70.0 12.28,76.7 12.40,79.6 12.53,81.7 12.65,87.5 12.77,93.7 12.89,81.8 13.01,78.1 13.13,85.6 13.26,83.5 13.38,86.3 13.50,85.3 13.62,83.5 13.74,93.6 13.86,90.3 13.99,72.0 14.11,82.8 14.23,88.7 14.35,83.1 14.47,83.4 14.59,83.1 14.72,85.0 14.84,92.1 14.96,83.0 15.08,72.1 15.20,74.9 15.32,89.6 15.44,92.5 15.57,73.6 15.69,86.5 15.81,78.1 15.93,79.9 16.05,83.7 16.17,80.4 16.30,90.4 16.42,91.3 16.54,92.5 16.66,76.7 16.78,70.1 16.90,77.3 17.03,81.1 17.15,86.2 17.27,90.0 17.39,78.5 17.51,96.9 17.63,85.4 17.76,77.6 17.88,71.6 18.00,76.4 18.12,79.9 18.24,77.8 18.36,73.7 18.49,88.6 18.61,83.3 18.73,83.9 18.85,79.3 18.97,80.0 19.09,79.5 19.21,91.9 19.34,85.6 19.46,81.2 19.58,86.3 19.70,71.1 19.82,83.4 19.94,71.8 20.07,74.6 20.19,90.3 20.31,81.5 20.43,83.6 20.55,78.0 20.67,76.9 20.80,81.6 20.92,98.8 21.04,85.0 21.16,76.8 21.28,80.7 21.40,81.4 21.53,79.1 21.65,89.0 21.77,90.6 21.89,91.8 22.01,93.2 22.13,95.2 22.26,84.0 22.38,79.9 22.50,80.2 22.62,77.3 22.74,78.6 22.86,78.5 22.98,77.7 23.11,94.6 23.23,89.6 23.35,74.7 23.47,87.9 23.59,74.9 23.71,91.2 23.84,81.5 23.96,82.4 24.08,96.7 24.20,95.6 24.32,88.3 24.44,85.3 24.57,95.9 24.69,73.6 24.81,83.5 24.93,78.0 25.05,81.0 25.17,76.0 25.30,87.1 25.42,84.1 25.54,78.7 25.66,78.3 25.78,75.5 25.90,88.1 26.03,69.8 26.15,76.9 26.27,79.0 26.39,74.5 26.51,79.3 26.63,81.5 26.75,71.5 26.88,92.7 27.00,81.9 27.12,77.4 27.24,85.5 27.36,78.8 27.48,79.0 27.61,86.4 27.73,70.9 27.85,72.5 27.97,84.7 28.09,82.1 28.21,82.4 28.34,86.4 28.46,88.2 28.58,87.7 28.70,91.7 28.82,76.9 28.94,86.0 29.07,83.8 29.19,83.2 29.31,68.6 29.43,87.9 29.55,87.8 29.67,83.7 29.79,91.3 29.92,79.2 30.04,75.9 30.16,80.7 30.28,83.5 30.40,61.5 30.52,70.9 30.65,86.9 30.77,94.4 30.89,81.9 31.01,80.9 31.13,81.6 31.25,75.0 31.38,79.6 31.50,75.1 31.62,74.7 31.74,76.4 31.86,81.4 31.98,78.0 32.11,69.3 32.23,84.0 32.35,72.1 32.47,80.1 32.59,74.9 32.71,90.6 32.84,87.5 32.96,80.9 33.08,75.1 33.20,70.1 33.32,79.2 33.44,76.6 33.56,84.8 33.69,68.9 33.81,80.5 33.93,95.4 34.05,86.5 34.17,74.1 34.29,83.8 34.42,76.0 34.54,85.0 34.66,81.2 34.78,83.3 34.90,74.7 35.02,77.6 35.15,80.8 35.27,84.1 35.39,80.1 35.51,83.1 35.63,78.4 35.75,80.2 35.88,84.1 36.00,85.1 36.12,83.1 36.24,84.9 36.36,89.8 36.48,80.1 36.61,74.3 36.73,80.8 36.85,83.5 36.97,82.4 37.09,71.3 37.21,83.0 37.33,76.1 37.46,81.7 37.58,76.7 37.70,78.7 37.82,74.2 37.94,74.2 38.06,76.6 38.19,86.8 38.31,71.9 38.43,95.6 38.55,81.1 38.67,81.2 38.79,74.4 38.92,75.1 39.04,73.6 39.16,75.6 39.28,83.7 39.40,80.2 39.52,85.2 39.65,78.1 39.77,80.6 39.89,86.5 40.01,85.9 40.13,81.9 40.25,78.5 40.38,82.2 40.50,76.4 40.62,79.8 40.74,85.9 40.86,92.4 40.98,72.5 41.10,71.0 41.23,83.2 41.35,78.2 41.47,72.1 41.59,83.4 41.71,70.7 41.83,74.2 41.96,83.6 42.08,76.6 42.20,87.9 42.32,89.5 42.44,76.3 42.56,80.0 42.69,69.0 42.81,76.1 42.93,78.8 43.05,68.0 43.17,81.5 43.29,89.9 43.42,85.4 43.54,76.0 43.66,82.6 43.78,85.4 43.90,79.6 44.02,79.7 44.15,81.1 44.27,79.3 44.39,78.1 44.51,88.3 44.63,82.7 44.75,77.0 44.87,75.0 45.00,80.2 45.12,68.5 45.24,76.1 45.36,77.6 45.48,74.0 45.60,86.2 45.73,79.5 45.85,76.9 45.97,83.4 46.09,80.0 46.21,81.4 46.33,98.9 46.46,85.7 46.58,78.7 46.70,76.7 46.82,80.0 46.94,76.3 47.06,77.0 47.19,77.5 47.31,65.4 47.43,79.1 47.55,75.0 47.67,85.1 47.79,76.0 47.92,71.0 48.04,84.5 48.16,71.6 48.28,79.6 48.40,72.3 48.52,79.6 48.64,68.9 48.77,82.5 48.89,82.1 49.01,86.0 49.13,73.1 49.25,75.6 49.37,74.9 49.50,65.2 49.62,81.2 49.74,80.0 49.86,81.9 49.98,76.2 50.10,81.3 50.23,86.6 50.35,80.6 50.47,77.9 50.59,78.1 50.71,75.0 50.83,82.1 50.96,82.6 51.08,84.4 51.20,66.9 51.32,83.4 51.44,82.0 51.56,83.3 51.69,83.7 51.81,74.1 51.93,77.4 52.05,77.3 52.17,79.7 52.29,81.6 52.41,75.8 52.54,88.0 52.66,79.0 52.78,73.8 52.90,87.1 53.02,87.1 53.14,68.7 53.27,72.6 53.39,79.5 53.51,76.9 53.63,74.1 53.75,69.4 53.87,71.9 54.00,85.7 54.12,84.2 54.24,77.8 54.36,83.1 54.48,78.4 54.60,71.8 54.73,67.4 54.85,67.9 54.97,80.9 55.09,75.9 55.21,93.4 55.33,87.0 55.46,87.3 55.58,83.6 55.70,82.6 55.82,86.6 55.94,80.8 56.06,85.9 56.18,78.3 56.31,93.5 56.43,80.3 56.55,94.5 56.67,72.4 56.79,82.2 56.91,78.6 57.04,73.2 57.16,79.4 57.28,76.2 57.40,78.0 57.52,75.9 57.64,89.3 57.77,81.5 57.89,76.6 58.01,77.4 58.13,76.7 58.25,72.7 58.37,86.1 58.50,80.7 58.62,68.9 58.74,79.4 58.86,86.1 58.98,79.6 59.10,76.2 59.23,72.3 59.35,75.4 59.47,76.0 59.59,79.6 59.71,78.3 59.83,82.7 59.95,77.9 60.08,70.3 60.20,82.4 60.32,85.0 60.44,84.8 60.56,81.7 60.68,80.5 60.81,85.9 60.93,74.2 61.05,88.4 61.17,85.5 61.29,80.7 61.41,81.2 61.54,83.8 61.66,74.6 61.78,78.8 61.90,76.7 62.02,88.2 62.14,78.1 62.27,92.9 62.39,76.5 62.51,82.6 62.63,76.5 62.75,77.6 62.87,76.3 63.00,80.9 63.12,75.2 63.24,87.3 63.36,68.8 63.48,86.2 63.60,79.3 63.72,73.6 63.85,74.1 63.97,85.6 64.09,75.1 64.21,80.7 64.33,77.6 64.45,94.6 64.58,86.9 64.70,82.4 64.82,85.5 64.94,78.4 65.06,82.8 65.18,73.0 65.31,78.8 65.43,81.9 65.55,74.4 65.67,87.8 65.79,77.4 65.91,79.4 66.04,84.3 66.16,81.8 66.28,81.3 66.40,91.6 66.52,89.9 66.64,77.3 66.77,77.3 66.89,78.4 67.01,84.0 67.13,75.3 67.25,81.5 67.37,101.8 67.49,64.9 67.62,77.2 67.74,79.2 67.86,84.5 67.98,69.9 68.10,76.6 68.22,84.1 68.35,77.6 68.47,87.9 68.59,76.5 68.71,83.7 68.83,77.9 68.95,84.0 69.08,87.1 69.20,83.1 69.32,78.5 69.44,85.2 69.56,85.1 69.68,89.2 69.81,69.6 69.93,86.8 70.05,80.2 70.17,83.1 70.29,72.5 70.41,90.4 70.54,84.0 70.66,82.6 70.78,80.9 70.90,78.8 71.02,80.7 71.14,64.5 71.26,75.3 71.39,73.6 71.51,72.4 71.63,84.3 71.75,86.4 71.87,74.9 71.99,80.8 72.12,90.0 72.24,70.7 72.36,83.4 72.48,80.6 72.60,79.4 72.72,81.0 72.85,81.7 72.97,76.3 73.09,83.8 73.21,84.6 73.33,78.0 73.45,91.2 73.58,87.2 73.70,78.1 73.82,97.3 73.94,84.7 74.06,75.9 74.18,95.1 74.31,77.0 74.43,79.8 74.55,76.7 74.67,74.0 74.79,75.3 74.91,87.6 75.03,73.1 75.16,81.9 75.28,90.6 75.40,73.1 75.52,73.2 75.64,79.5 75.76,73.3 75.89,77.5 76.01,76.8 76.13,76.7 76.25,87.6 76.37,86.6 76.49,76.5 76.62,81.6 76.74,85.5 76.86,87.5 76.98,81.9 77.10,79.7 77.22,67.4 77.35,87.4 77.47,89.0 77.59,82.5 77.71,81.2 77.83,84.5 77.95,104.4 78.08,88.4 78.20,76.8 78.32,91.3 78.44,71.6 78.56,92.6 78.68,91.7 78.80,76.9 78.93,83.6 79.05,82.0 79.17,69.9 79.29,86.6 79.41,91.0 79.53,84.1 79.66,89.6 79.78,86.5 79.90,77.9 80.02,72.5 80.14,78.2 80.26,79.9 80.39,71.9 80.51,75.2 80.63,76.0 80.75,74.2 80.87,92.9 80.99,80.7 81.12,79.6 81.24,77.8 81.36,78.5 81.48,88.1 81.60,72.7 81.72,75.4 81.85,79.3 81.97,77.2 82.09,80.7 82.21,79.1 82.33,79.2 82.45,74.7 82.57,98.6 82.70,81.8 82.82,88.8 82.94,83.2 83.06,72.5 83.18,82.4 83.30,84.9 83.43,85.4 83.55,77.3 83.67,79.0 83.79,84.7 83.91,77.9 84.03,80.8 84.16,77.0 84.28,83.5 84.40,75.7 84.52,84.2 84.64,87.6 84.76,65.6 84.89,88.1 85.01,76.4 85.13,82.4 85.25,91.6 85.37,78.1 85.49,81.6 85.62,88.5 85.74,75.2 85.86,81.9 85.98,88.6 86.10,92.6 86.22,87.8 86.34,83.2 86.47,80.1 86.59,83.6 86.71,76.6 86.83,86.5 86.95,90.1 87.07,82.7 87.20,85.1 87.32,75.2 87.44,82.0 87.56,78.5 87.68,94.6 87.80,80.7 87.93,87.1 88.05,83.3 88.17,83.5 88.29,77.5 88.41,88.7 88.53,82.7 88.66,83.1 88.78,73.0 88.90,79.2 89.02,94.2 89.14,74.4 89.26,79.2 89.38,71.5 89.51,86.7 89.63,86.8 89.75,83.4 89.87,80.8 89.99,83.4 90.11,78.5 90.24,76.4 90.36,72.5 90.48,85.2 90.60,78.5 90.72,64.8 90.84,90.8 90.97,90.8 91.09,78.4 91.21,85.4 91.33,81.4 91.45,66.0 91.57,90.3 91.70,84.1 91.82,83.4 91.94,78.8 92.06,86.2 92.18,90.0 92.30,97.9 92.43,85.3 92.55,91.0 92.67,80.6 92.79,72.7 92.91,85.6 93.03,71.8 93.15,83.1 93.28,89.5 93.40,80.2 93.52,74.1 93.64,82.9 93.76,73.2 93.88,76.3 94.01,84.3 94.13,79.3 94.25,79.8 94.37,79.7 94.49,77.2 94.61,73.3 94.74,77.8 94.86,70.9 94.98,89.7 95.10,77.1 95.22,77.3 95.34,74.1 95.47,80.9 95.59,86.5 95.71,92.6 95.83,74.8 95.95,77.0 96.07,76.2 96.20,78.4 96.32,76.0 96.44,77.5 96.56,89.1 96.68,83.3 96.80,79.2 96.92,88.3 97.05,93.8 97.17,86.6 97.29,87.3 97.41,77.7 97.53,74.2 97.65,75.3 97.78,76.7 97.90,88.9 98.02,76.9 98.14,71.0 98.26,83.4 98.38,86.6 98.51,77.5 98.63,80.6 98.75,88.8 98.87,82.2 98.99,88.7 99.11,79.2 99.24,84.9 99.36,79.2 99.48,79.5 99.60,78.4 99.72,97.6 99.84,97.2 99.97,79.2 100.09,76.9 100.21,79.2 100.33,81.0 100.45,76.8 100.57,89.8 100.69,80.1 100.82,69.7 100.94,69.4 101.06,85.7 101.18,82.3 101.30,88.6 101.42,89.2 101.55,88.7 101.67,90.5 101.79,75.3 101.91,79.9 102.03,73.8 102.15,79.0 102.28,74.8 102.40,73.9 102.52,82.5 102.64,81.0 102.76,74.5 102.88,72.4 103.01,83.9 103.13,90.1 103.25,73.0 103.37,80.9 103.49,77.9 103.61,82.7 103.74,69.4 103.86,77.5 103.98,77.8 104.10,86.7 104.22,80.9 104.34,81.2 104.46,74.8 104.59,86.2 104.71,71.8 104.83,86.4 104.95,85.0 105.07,74.9 105.19,85.0 105.32,85.2 105.44,75.1 105.56,83.2 105.68,82.9 105.80,78.7 105.92,78.8 106.05,79.6 106.17,81.5 106.29,77.8 106.41,67.9 106.53,79.1 106.65,72.9 106.78,87.8 106.90,68.1 107.02,73.1 107.14,78.6 107.26,87.5 107.38,90.2 107.51,75.1 107.63,86.9 107.75,82.6 107.87,80.1 107.99,77.9 108.11,75.7 108.23,81.5 108.36,72.6 108.48,75.5 108.60,82.3 108.72,71.9 108.84,79.1 108.96,83.6 109.09,75.7 109.21,80.6 109.33,84.3 109.45,81.1 109.57,82.4 109.69,79.6 109.82,86.0 109.94,87.4 110.06,74.6 110.18,82.8 110.30,74.1 110.42,69.3 110.55,83.3 110.67,52.4 110.79,71.1 110.91,76.7 111.03,83.9 111.15,88.0 111.28,79.5 111.40,80.0 111.52,71.4 111.64,87.0 111.76,87.3 111.88,79.2 112.00,76.1 112.13,86.7 112.25,57.8 112.37,85.3 112.49,72.0 112.61,80.7 112.73,76.8 112.86,73.5 112.98,91.5 113.10,80.4 113.22,84.1 113.34,83.0 113.46,84.7 113.59,83.5 113.71,73.1 113.83,78.9 113.95,71.3 114.07,82.5 114.19,76.9 114.32,79.9 114.44,85.7 114.56,74.2 114.68,86.2 114.80,86.4 114.92,84.2 115.05,78.7 115.17,77.6 115.29,72.9 115.41,88.5 115.53,81.6 115.65,80.3 115.77,73.0 115.90,75.4 116.02,81.8 116.14,87.9 116.26,79.8 116.38,101.6 116.50,74.1 116.63,75.2 116.75,87.2 116.87,79.9 116.99,90.5 117.11,71.6 117.23,86.0 117.36,79.8 117.48,90.0 117.60,79.5 117.72,72.6 117.84,90.0 117.96,75.9 118.09,63.5 118.21,74.7 118.33,85.0 118.45,81.7 118.57,78.5 118.69,82.3 118.82,79.5 118.94,84.6 119.06,76.7 119.18,87.2 119.30,80.7 119.42,76.8 119.54,90.7 119.67,79.2 119.79,78.2 119.91,76.4 120.03,82.0 120.15,74.6 120.27,65.2 120.40,68.3 120.52,76.0 120.64,84.1 120.76,68.1 120.88,80.1 121.00,81.8 121.13,85.7 121.25,77.2 121.37,85.3 121.49,73.9 121.61,83.6 121.73,82.4 121.86,81.7 121.98,81.7 122.10,85.9 122.22,75.5 122.34,86.4 122.46,72.2 122.59,64.0 122.71,80.7 122.83,84.8 122.95,79.0 123.07,84.3 123.19,75.9 123.31,65.9 123.44,78.0 123.56,80.6 123.68,74.1 123.80,66.3 123.92,83.9 124.04,72.8 124.17,79.0 124.29,75.5 124.41,80.0 124.53,87.7 124.65,85.2 124.77,68.5 124.90,87.4 125.02,80.4 125.14,85.8 125.26,80.4 125.38,78.0 125.50,82.3 125.63,84.5 125.75,82.9 125.87,85.5 125.99,75.9 126.11,72.4 126.23,74.0 126.36,80.2 126.48,75.6 126.60,77.2 126.72,79.2 126.84,80.4 126.96,98.8 127.08,83.6 127.21,69.3 127.33,80.6 127.45,78.5 127.57,79.2 127.69,78.6 127.81,83.8 127.94,75.3 128.06,76.8 128.18,76.6 128.30,80.7 128.42,86.9 128.54,84.3 128.67,85.1 128.79,82.2 128.91,90.0 129.03,79.9 129.15,82.7 129.27,84.7 129.40,83.9 129.52,82.2 129.64,87.5 129.76,94.1 129.88,75.6 130.00,82.6 130.13,71.2 130.25,76.1 130.37,82.2 130.49,86.7 130.61,81.6 130.73,89.4 130.85,88.8 130.98,86.2 131.10,70.8 131.22,81.6 131.34,72.7 131.46,77.3 131.58,76.6 131.71,74.4 131.83,81.3 131.95,75.3 132.07,75.4 132.19,86.3 132.31,78.7 132.44,84.1 132.56,70.0 132.68,87.4 132.80,88.4 132.92,84.9 133.04,78.4 133.17,84.9 133.29,87.0 133.41,75.2 133.53,85.2 133.65,77.9 133.77,86.9 133.90,85.6 134.02,85.9 134.14,79.8 134.26,88.3 134.38,83.0 134.50,70.9 134.62,78.7 134.75,80.9 134.87,87.5 134.99,90.0 135.11,78.3 135.23,81.4 135.35,72.3 135.48,88.7 135.60,84.0 135.72,77.4 135.84,84.1 135.96,87.1 136.08,77.9 136.21,59.2 136.33,77.5 136.45,90.4 136.57,90.5 136.69,64.0 136.81,78.6 136.94,84.5 137.06,79.2 137.18,83.1 137.30,78.2 137.42,83.7 137.54,80.9 137.67,77.1 137.79,79.9 137.91,85.2 138.03,76.2 138.15,74.4 138.27,81.6 138.39,87.7 138.52,86.0 138.64,84.7 138.76,83.1 138.88,81.5 139.00,72.4 139.12,77.5 139.25,79.1 139.37,85.4 139.49,87.2 139.61,80.4 139.73,73.6 139.85,80.4 139.98,79.4 140.10,85.2 140.22,77.5 140.34,82.7 140.46,77.9 140.58,76.7 140.71,85.7 140.83,80.5 140.95,67.4 141.07,75.1 141.19,91.1 141.31,93.2 141.44,88.5 141.56,69.4 141.68,78.4 141.80,78.6 141.92,86.7 142.04,77.9 142.16,84.8 142.29,69.9 142.41,81.5 142.53,82.6 142.65,75.5 142.77,85.3 142.89,84.6 143.02,80.1 143.14,83.9 143.26,85.7 143.38,81.3 143.50,85.7 143.62,84.6 143.75,85.6 143.87,80.2 143.99,61.4 144.11,93.0 144.23,80.0 144.35,83.4 144.48,81.0 144.60,94.1 144.72,83.2 144.84,84.6 144.96,86.3 145.08,89.3 145.21,87.9 145.33,87.8 145.45,94.9 145.57,76.2 145.69,88.3 145.81,84.1 145.93,72.0 146.06,85.3 146.18,88.0 146.30,78.6 146.42,85.8 146.54,79.3 146.66,84.0 146.79,89.9 146.91,86.3 147.03,76.7 147.15,62.1 147.27,82.9 147.39,88.9 147.52,79.3 147.64,74.5 147.76,80.4 147.88,94.1 148.00,83.7 148.12,75.9 148.25,78.9 148.37,88.1 148.49,91.9 148.61,84.1 148.73,80.4 148.85,80.1 148.97,88.8 149.10,83.8 149.22,86.8 149.34,80.5 149.46,103.1 149.58,81.4 149.70,84.4 149.83,85.6 149.95,76.4 150.07,86.6 150.19,89.1 150.31,83.1 150.43,93.5 150.56,86.1 150.68,90.4 150.80,91.7 150.92,82.8 151.04,77.9 151.16,83.2 151.29,84.2 151.41,81.4 151.53,81.6 151.65,80.5 151.77,81.1 151.89,87.8 152.02,80.0 152.14,76.6 152.26,77.6 152.38,81.7 152.50,85.7 152.62,93.6 152.74,85.0 152.87,79.3 152.99,92.8 153.11,77.2 153.23,87.1 153.35,83.8 153.47,82.9 153.60,88.0 153.72,97.9 153.84,94.8 153.96,93.5 154.08,81.2 154.20,69.7 154.33,75.7 154.45,81.5 154.57,88.2 154.69,75.2 154.81,80.4 154.93,89.9 155.06,83.1 155.18,75.9 155.30,77.5 155.42,90.0 155.54,89.4 155.66,73.5 155.79,81.6 155.91,87.3 156.03,90.8 156.15,83.5 156.27,83.3 156.39,93.6 156.51,76.6 156.64,86.4 156.76,86.3 156.88,87.5 157.00,80.2 157.12,81.6 157.24,76.0 157.37,79.0 157.49,72.8 157.61,82.0 157.73,82.1 157.85,98.1 157.97,84.9 158.10,78.4 158.22,88.6 158.34,89.2 158.46,81.8 158.58,77.4 158.70,80.5 158.83,79.6 158.95,79.1 159.07,79.8 159.19,74.9 159.31,81.4 159.43,92.5 159.56,81.4 159.68,79.3 159.80,68.4 159.92,82.5 160.04,83.7 160.16,80.3 160.28,83.2 160.41,87.5 160.53,72.4 160.65,89.0 160.77,86.3 160.89,84.2 161.01,90.3 161.14,73.6 161.26,82.4 161.38,90.7 161.50,93.4 161.62,73.8 161.74,81.8 161.87,94.9 161.99,81.1 162.11,84.7 162.23,81.1 162.35,76.9 162.47,88.3 162.60,72.5 162.72,71.8 162.84,82.6 162.96,79.2 163.08,74.2 163.20,84.8 163.33,81.3 163.45,92.5 163.57,85.1 163.69,79.7 163.81,80.8 163.93,76.8 164.05,78.4 164.18,79.4 164.30,79.3 164.42,89.9 164.54,73.1 164.66,87.5 164.78,80.4 164.91,75.5 165.03,75.9 165.15,86.0 165.27,70.1 165.39,80.5 165.51,83.4 165.64,64.7 165.76,76.4 165.88,84.7 166.00,70.8 166.12,67.3 166.24,82.7 166.37,90.7 166.49,78.6 166.61,81.2 166.73,79.1 166.85,73.1 166.97,80.5 167.10,88.6 167.22,80.5 167.34,82.2 167.46,70.9 167.58,83.2 167.70,79.2 167.82,76.6 167.95,77.2 168.07,72.3 168.19,80.5 168.31,78.6 168.43,82.9 168.55,81.9 168.68,86.7 168.80,84.7 168.92,80.9 169.04,75.3 169.16,85.9 169.28,75.7 169.41,88.4 169.53,81.9 169.65,93.0 169.77,82.8 169.89,74.9 170.01,86.8 170.14,81.8 170.26,84.1 170.38,73.9 170.50,79.6 170.62,82.9 170.74,89.8 170.87,79.2 170.99,66.7 171.11,83.0 171.23,83.5 171.35,91.7 171.47,83.0 171.59,69.7 171.72,77.8 171.84,74.1 171.96,85.5 172.08,80.3 172.20,84.1 172.32,79.7 172.45,86.1 172.57,87.7 172.69,94.0 172.81,82.8 172.93,82.6 173.05,85.6 173.18,81.8 173.30,86.8 173.42,76.8 173.54,66.5 173.66,74.8 173.78,70.1 173.91,84.1 174.03,73.2 174.15,87.1 174.27,89.5 174.39,87.7 174.51,72.0 174.64,84.6 174.76,77.4 174.88,91.7 175.00,67.2" fill="none" stroke="#58ac3c" stroke-width="0.8"/></svg>
<div style="left:474px;top:319px;width:291px;height:143px;background:#e3e0b8;border-style:solid;border-width:1px;border-color:#b8b8a8 #8e8c6c #8e8c6c #b8b8a8;box-shadow:inset 1px 1px 0 #fbfbee"></div>
<div style="left:492px;top:332px;width:157px;height:119px;background:#fff"></div>
<div class="t" style="left:570px;top:321.01px;height:10.98px;line-height:10.98px;font-size:9.15px;font-weight:bold;color:#111;transform:translateX(-50%) scaleX(1.0);transform-origin:50% 50%;">Cell Count</div>
<div class="t" style="left:491px;top:334.78px;height:10.44px;line-height:10.44px;font-size:8.7px;color:#111;transform:translateX(-100%) scaleX(1.0);transform-origin:100% 50%;">569</div>
<div class="t" style="left:491px;top:440.78px;height:10.44px;line-height:10.44px;font-size:8.7px;color:#111;transform:translateX(-100%) scaleX(1.0);transform-origin:100% 50%;">0</div>
<div class="t" style="left:486.5px;top:392.7px;height:10.799999999999999px;line-height:10.799999999999999px;transform:translate(-50%,-50%) rotate(-90deg);font-size:9.0px;color:#222">Number of cells</div>
<div class="t" style="left:495px;top:451.78px;height:10.44px;line-height:10.44px;font-size:8.7px;color:#111;transform:translateX(-50%) scaleX(1.0);transform-origin:50% 50%;">0</div>
<div class="t" style="left:562px;top:451.66px;height:10.68px;line-height:10.68px;font-size:8.9px;color:#111;transform:translateX(-50%) scaleX(1.0);transform-origin:50% 50%;">Time (minutes)</div>
<div class="t" style="left:648px;top:451.78px;height:10.44px;line-height:10.44px;font-size:8.7px;color:#111;transform:translateX(-100%) scaleX(1.0);transform-origin:100% 50%;">1750</div>
<svg style="position:absolute;left:492px;top:332px" width="157" height="119"><polyline points="0.6,118.0 0.6,48.0 0.6,48.2 1.5,47.3 2.4,47.0 3.4,46.8 4.3,46.7 5.2,46.2 6.1,45.6 7.0,45.6 7.9,45.2 8.9,44.7 9.8,44.3 10.7,43.7 11.6,43.3 12.5,42.9 13.4,42.6 14.4,42.2 15.3,41.3 16.2,40.8 17.1,40.8 18.0,40.4 18.9,39.5 19.9,39.5 20.8,38.8 21.7,38.3 22.6,38.2 23.5,37.2 24.4,36.9 25.4,36.5 26.3,35.7 27.2,35.3 28.1,35.0 29.0,34.9 29.9,33.9 30.9,33.6 31.8,33.5 32.7,32.5 33.6,32.4 34.5,32.0 35.5,31.2 36.4,30.9 37.3,30.4 38.2,30.4 39.1,29.7 40.0,29.5 41.0,29.3 41.9,29.0 42.8,28.0 43.7,28.0 44.6,27.5 45.5,27.4 46.5,26.5 47.4,26.4 48.3,25.9 49.2,25.5 50.1,25.0 51.0,25.0 52.0,24.2 52.9,24.2 53.8,24.4 54.7,23.6 55.6,23.4 56.5,23.4 57.5,23.1 58.4,23.2 59.3,23.0 60.2,22.2 61.1,21.8 62.0,21.9 63.0,22.0 63.9,21.6 64.8,21.6 65.7,21.1 66.6,20.7 67.6,20.9 68.5,20.7 69.4,19.9 70.3,19.7 71.2,19.6 72.1,19.8 73.1,19.4 74.0,18.9 74.9,19.0 75.8,18.5 76.7,18.2 77.6,18.1 78.6,17.7 79.5,17.4 80.4,17.5 81.3,17.0 82.2,16.6 83.1,16.6 84.1,16.2 85.0,15.4 85.9,15.5 86.8,15.3 87.7,15.0 88.6,14.4 89.6,13.6 90.5,13.6 91.4,13.6 92.3,13.1 93.2,12.7 94.1,12.6 95.1,12.3 96.0,12.0 96.9,11.2 97.8,10.8 98.7,10.5 99.7,10.6 100.6,10.4 101.5,10.1 102.4,9.6 103.3,9.2 104.2,9.0 105.2,9.0 106.1,8.4 107.0,8.2 107.9,8.3 108.8,7.7 109.7,8.0 110.7,7.4 111.6,7.4 112.5,7.1 113.4,6.8 114.3,6.9 115.2,6.8 116.2,6.1 117.1,5.9 118.0,6.0 118.9,6.0 119.8,5.4 120.7,5.0 121.7,5.0 122.6,4.6 123.5,4.5 124.4,4.5 125.3,4.1 126.2,4.0 127.2,3.7 128.1,4.0 129.0,3.8" fill="none" stroke="#2a2a2a" stroke-width="1.3"/><polyline points="0.4,51.9 1.3,51.9 2.2,52.2 3.2,51.9 4.1,52.0 5.0,52.8 5.9,52.0 6.8,52.8 7.7,52.2 8.7,52.6 9.6,52.3 10.5,53.2 11.4,53.0 12.3,53.3 13.3,53.2 14.2,53.5 15.1,53.5 16.0,53.3 16.9,53.0 17.9,53.6 18.8,53.4 19.7,53.9 20.6,54.0 21.5,53.9 22.4,53.6 23.4,54.3 24.3,53.7 25.2,53.5 26.1,54.5 27.0,53.8 28.0,54.2 28.9,54.2 29.8,54.8 30.7,54.8 31.6,55.0 32.5,54.7 33.5,54.9 34.4,54.3 35.3,54.6 36.2,55.2 37.1,54.9 38.1,55.0 39.0,55.1 39.9,55.5 40.8,55.4 41.7,54.8 42.7,55.2 43.6,55.0 44.5,55.4 45.4,55.9 46.3,55.6 47.2,55.2 48.2,55.8 49.1,55.6 50.0,55.7 50.9,55.7 51.8,55.5 52.8,56.0 53.7,56.0 54.6,55.8 55.5,56.6 56.4,55.9 57.4,56.8 58.3,57.0 59.2,56.3 60.1,56.5 61.0,57.0 61.9,57.1 62.9,57.2 63.8,57.0 64.7,57.5 65.6,57.3 66.5,57.5 67.5,57.6 68.4,57.1 69.3,56.9 70.2,57.5 71.1,57.6 72.0,57.7 73.0,57.3 73.9,57.7 74.8,58.1 75.7,57.4 76.6,57.5 77.6,57.8 78.5,58.4 79.4,58.2 80.3,58.0 81.2,58.6 82.2,58.1 83.1,58.8 84.0,58.8 84.9,58.5 85.8,59.3 86.7,58.9 87.7,59.5 88.6,59.4 89.5,58.9 90.4,59.8 91.3,59.1 92.3,59.3 93.2,59.8 94.1,60.1 95.0,59.9 95.9,60.1 96.9,60.3 97.8,60.2 98.7,59.9 99.6,60.6 100.5,60.8 101.4,60.4 102.4,60.6 103.3,61.0 104.2,60.6 105.1,60.6 106.0,61.0 107.0,60.9 107.9,61.2 108.8,61.7 109.7,61.7 110.6,61.4 111.5,61.8 112.5,61.2 113.4,61.6 114.3,61.6 115.2,61.3 116.1,61.9 117.1,62.1 118.0,61.4 118.9,61.3 119.8,61.3 120.7,61.9 121.7,61.5 122.6,62.0 123.5,62.0 124.4,62.4 125.3,62.1 126.2,61.6 127.2,62.4 128.1,62.4 129.0,62.4" fill="none" stroke="#345da9" stroke-width="1.2"/><polyline points="1.0,117.9 1.9,117.3 2.8,116.8 3.7,117.1 4.7,116.6 5.6,115.9 6.5,116.2 7.4,115.1 8.3,115.4 9.2,114.8 10.1,114.3 11.1,114.6 12.0,114.4 12.9,113.4 13.8,113.8 14.7,113.3 15.6,113.3 16.5,112.6 17.5,111.9 18.4,112.6 19.3,112.1 20.2,111.7 21.1,111.1 22.0,110.6 22.9,110.3 23.9,110.2 24.8,110.0 25.7,109.5 26.6,108.9 27.5,109.0 28.4,109.0 29.3,108.5 30.3,108.4 31.2,108.1 32.1,107.7 33.0,106.5 33.9,106.0 34.8,106.1 35.7,105.7 36.7,105.6 37.6,105.1 38.5,104.2 39.4,104.0 40.3,103.6 41.2,103.2 42.1,102.8 43.1,103.0 44.0,102.7 44.9,101.6 45.8,101.4 46.7,101.4 47.6,101.1 48.5,100.2 49.5,100.0 50.4,99.7 51.3,98.9 52.2,98.7 53.1,97.9 54.0,98.2 54.9,97.7 55.9,97.6 56.8,97.1 57.7,97.1 58.6,97.1 59.5,96.7 60.4,96.6 61.3,97.2 62.3,96.5 63.2,96.3 64.1,96.5 65.0,96.1 65.9,96.0 66.8,95.5 67.7,95.7 68.7,95.9 69.6,95.7 70.5,95.2 71.4,94.6 72.3,95.0 73.2,94.4 74.1,94.2 75.1,94.2 76.0,94.6 76.9,94.0 77.8,94.2 78.7,93.7 79.6,93.3 80.5,93.1 81.5,93.1 82.4,93.1 83.3,93.3 84.2,92.2 85.1,92.3 86.0,92.6 86.9,91.9 87.9,92.3 88.8,91.3 89.7,91.8 90.6,91.7 91.5,91.0 92.4,91.2 93.3,91.0 94.3,90.2 95.2,90.8 96.1,90.0 97.0,89.8 97.9,89.6 98.8,89.9 99.7,89.3 100.7,88.8 101.6,89.1 102.5,88.8 103.4,88.0 104.3,88.0 105.2,87.9 106.1,88.8 107.1,88.0 108.0,87.9 108.9,88.0 109.8,88.6 110.7,88.6 111.6,88.4 112.5,87.7 113.5,88.3 114.4,88.0 115.3,88.2 116.2,87.5 117.1,87.7 118.0,88.0 118.9,87.9 119.9,87.9 120.8,87.6 121.7,87.7 122.6,88.1 123.5,87.9 124.4,87.7 125.3,88.1 126.3,87.6 127.2,87.8 128.1,88.1 129.0,87.9" fill="none" stroke="#8aa6dc" stroke-width="1.1"/><polyline points="0.0,113.5 0.9,113.5 1.8,113.4 2.8,113.3 3.7,113.4 4.6,113.4 5.5,113.5 6.5,113.3 7.4,113.4 8.3,113.3 9.2,113.5 10.1,113.4 11.1,113.5 12.0,113.5 12.9,113.4 13.8,113.5 14.7,113.3 15.7,113.5 16.6,113.3 17.5,113.5 18.4,113.5 19.4,113.3 20.3,113.4 21.2,113.4 22.1,113.5 23.0,113.3 24.0,113.5 24.9,113.5 25.8,113.5 26.7,113.4 27.6,113.5 28.6,113.5 29.5,113.5 30.4,113.3 31.3,113.3 32.2,113.4 33.2,113.5 34.1,113.5 35.0,113.4 35.9,113.3 36.9,113.4 37.8,113.3 38.7,113.4 39.6,113.3 40.5,113.3 41.5,113.5 42.4,113.4 43.3,113.5 44.2,113.3 45.1,113.3 46.1,113.5 47.0,113.4 47.9,113.5 48.8,113.3 49.8,113.5 50.7,113.4 51.6,113.4 52.5,113.5 53.4,113.3 54.4,113.4 55.3,113.3 56.2,113.5 57.1,113.3 58.0,113.4 59.0,113.3 59.9,113.3 60.8,113.5 61.7,113.5 62.7,113.5 63.6,113.3 64.5,113.4 65.4,113.3 66.3,113.5 67.3,113.5 68.2,113.4 69.1,113.5 70.0,113.5 71.0,113.3 71.9,113.4 72.8,113.3 73.7,113.3 74.6,113.4 75.6,113.4 76.5,113.5 77.4,113.4 78.3,113.3 79.2,113.3 80.2,113.5 81.1,113.3 82.0,113.5 82.9,113.4 83.8,113.3 84.8,113.4 85.7,113.5 86.6,113.4 87.5,113.5 88.5,113.5 89.4,113.3 90.3,113.3 91.2,113.4 92.1,113.3 93.1,113.4 94.0,113.5 94.9,113.5 95.8,113.4 96.8,113.5 97.7,113.3 98.6,113.5 99.5,113.4 100.4,113.4 101.4,113.4 102.3,113.5 103.2,113.5 104.1,113.3 105.0,113.3 106.0,113.3 106.9,113.5 107.8,113.3 108.7,113.4 109.7,113.3 110.6,113.5 111.5,113.3 112.4,113.4 113.3,113.3 114.3,113.5 115.2,113.5 116.1,113.3 117.0,113.5 117.9,113.4 118.9,113.4 119.8,113.5 120.7,113.3 121.6,113.3 122.5,113.5 123.5,113.5 124.4,113.5 125.3,113.4 126.2,113.4 127.2,113.3 128.1,113.4 129.0,113.4" fill="none" stroke="#8ae88a" stroke-width="1.0"/><polyline points="0.0,118.2 0.9,117.8 1.8,118.3 2.8,118.0 3.7,118.0 4.6,118.3 5.5,118.2 6.5,118.2 7.4,118.0 8.3,118.0 9.2,118.2 10.1,117.9 11.1,118.0 12.0,117.8 12.9,118.0 13.8,117.9 14.7,117.8 15.7,117.8 16.6,118.0 17.5,117.8 18.4,118.0 19.4,117.9 20.3,118.2 21.2,118.0 22.1,118.2 23.0,118.1 24.0,118.0 24.9,118.0 25.8,118.1 26.7,118.1 27.6,117.7 28.6,117.9 29.5,117.9 30.4,118.0 31.3,117.4 32.2,117.7 33.2,117.9 34.1,117.6 35.0,117.4 35.9,117.6 36.9,117.7 37.8,117.3 38.7,117.3 39.6,117.1 40.5,117.2 41.5,117.3 42.4,117.0 43.3,116.8 44.2,117.3 45.1,116.7 46.1,117.2 47.0,116.9 47.9,116.7 48.8,116.7 49.8,116.5 50.7,116.9 51.6,117.0 52.5,116.9 53.4,116.7 54.4,116.8 55.3,116.3 56.2,116.8 57.1,116.7 58.0,116.7 59.0,116.2 59.9,116.4 60.8,116.1 61.7,116.1 62.7,116.3 63.6,116.0 64.5,116.2 65.4,116.1 66.3,116.0 67.3,116.0 68.2,116.0 69.1,115.6 70.0,115.9 71.0,116.0 71.9,115.8 72.8,115.8 73.7,115.7 74.6,115.6 75.6,115.6 76.5,115.5 77.4,115.7 78.3,115.7 79.2,115.7 80.2,115.4 81.1,115.3 82.0,115.2 82.9,115.2 83.8,115.1 84.8,115.4 85.7,114.8 86.6,115.2 87.5,114.7 88.5,115.0 89.4,114.7 90.3,114.6 91.2,114.7 92.1,114.8 93.1,115.0 94.0,114.8 94.9,114.8 95.8,114.7 96.8,114.7 97.7,114.5 98.6,114.6 99.5,114.3 100.4,114.5 101.4,114.3 102.3,114.5 103.2,114.0 104.1,114.0 105.0,114.0 106.0,114.2 106.9,114.2 107.8,114.3 108.7,113.8 109.7,114.1 110.6,113.7 111.5,113.8 112.4,114.0 113.3,113.5 114.3,114.0 115.2,113.5 116.1,113.5 117.0,113.7 117.9,113.9 118.9,113.5 119.8,113.7 120.7,113.7 121.6,113.3 122.5,113.2 123.5,113.5 124.4,113.6 125.3,113.4 126.2,113.6 127.2,113.3 128.1,113.2 129.0,113.1" fill="none" stroke="#59b03c" stroke-width="1.0"/><polyline points="24.0,117.5 24.8,118.1 25.5,117.7 26.2,118.3 27.0,118.0 27.8,117.5 28.5,117.4 29.2,117.4 30.0,117.3 30.8,118.0 31.5,117.9 32.2,118.2 33.0,117.5 33.8,117.5 34.5,117.9 35.2,117.4 36.0,117.3 36.8,118.1 37.5,117.6 38.2,116.9 39.0,117.6 39.8,117.9 40.5,117.1 41.2,117.3 42.0,117.2 42.8,117.6 43.5,116.9 44.2,117.5 45.0,117.5 45.8,117.1 46.5,117.3 47.2,117.6 48.0,116.6 48.8,116.9 49.5,116.9 50.2,117.0 51.0,117.3 51.8,116.7 52.5,117.3 53.2,116.8 54.0,116.5 54.8,116.3 55.5,117.4 56.2,117.1 57.0,116.5 57.8,116.8 58.5,117.3 59.2,116.6 60.0,116.7 60.8,116.7 61.5,116.7 62.2,116.3 63.0,116.3 63.8,116.5 64.5,116.6 65.2,116.5 66.0,117.0 66.8,116.7 67.5,116.6 68.2,116.7 69.0,116.0 69.8,116.1 70.5,116.7 71.2,116.4 72.0,116.8 72.8,115.7 73.5,116.7 74.2,116.0 75.0,116.5 75.8,115.9 76.5,115.8 77.2,115.8 78.0,115.8 78.8,116.4 79.5,116.5 80.2,115.4 81.0,116.3 81.8,115.6 82.5,115.7 83.2,115.2 84.0,115.1 84.8,115.3 85.5,115.4 86.2,115.4 87.0,115.8 87.8,115.0 88.5,115.2 89.2,114.6 90.0,114.9 90.8,114.7 91.5,114.3 92.2,114.8 93.0,115.0 93.8,114.5 94.5,114.7 95.2,114.2 96.0,114.3 96.8,114.8 97.5,114.7 98.2,113.8 99.0,113.5 99.8,113.7 100.5,113.7 101.2,113.8 102.0,113.6 102.8,114.2 103.5,113.2 104.2,113.1 105.0,113.8 105.8,113.1 106.5,113.1 107.2,113.0 108.0,113.1 108.8,112.5 109.5,113.5 110.2,112.7 111.0,113.3 111.8,113.4 112.5,113.0 113.2,112.3 114.0,112.7 114.8,112.8 115.5,112.4 116.2,112.3 117.0,112.5 117.8,111.8 118.5,112.6 119.2,111.5 120.0,112.4 120.8,112.1 121.5,111.5 122.2,111.9 123.0,112.1 123.8,112.0 124.5,111.5 125.2,111.9 126.0,111.3 126.8,111.1 127.5,111.3 128.2,110.7 129.0,110.6" fill="none" stroke="#d73229" stroke-width="1.1"/><polyline points="0.0,118.3 0.9,118.2 1.8,117.8 2.8,118.5 3.7,118.1 4.6,118.6 5.5,117.6 6.5,117.8 7.4,118.3 8.3,118.5 9.2,117.6 10.1,118.6 11.1,117.7 12.0,117.7 12.9,117.6 13.8,117.7 14.7,118.5 15.7,118.4 16.6,117.9 17.5,117.9 18.4,118.3 19.4,118.5 20.3,117.9 21.2,118.6 22.1,118.3 23.0,118.5 24.0,118.5 24.9,118.0 25.8,118.5 26.7,118.4 27.6,117.3 28.6,117.7 29.5,117.3 30.4,118.0 31.3,118.1 32.2,118.3 33.2,118.0 34.1,117.2 35.0,117.4 35.9,118.1 36.9,117.4 37.8,117.7 38.7,117.4 39.6,117.1 40.5,118.1 41.5,117.3 42.4,117.7 43.3,118.0 44.2,117.2 45.1,117.3 46.1,117.3 47.0,117.6 47.9,117.7 48.8,117.7 49.8,116.9 50.7,117.4 51.6,117.5 52.5,117.3 53.4,117.1 54.4,117.2 55.3,117.8 56.2,117.3 57.1,117.0 58.0,116.9 59.0,117.6 59.9,117.6 60.8,116.7 61.7,116.6 62.7,117.1 63.6,116.9 64.5,116.5 65.4,116.6 66.3,117.4 67.3,117.1 68.2,117.0 69.1,116.9 70.0,117.0 71.0,116.4 71.9,117.2 72.8,117.2 73.7,116.7 74.6,116.9 75.6,116.6 76.5,116.8 77.4,116.9 78.3,116.0 79.2,116.6 80.2,116.4 81.1,117.0 82.0,115.9 82.9,116.8 83.8,115.9 84.8,115.7 85.7,116.1 86.6,116.1 87.5,115.5 88.5,115.3 89.4,115.4 90.3,116.1 91.2,115.5 92.1,115.0 93.1,115.9 94.0,115.4 94.9,114.7 95.8,114.6 96.8,115.2 97.7,114.4 98.6,114.9 99.5,115.3 100.4,115.0 101.4,114.1 102.3,114.2 103.2,113.9 104.1,113.7 105.0,113.7 106.0,114.0 106.9,113.5 107.8,113.9 108.7,114.0 109.7,113.9 110.6,113.2 111.5,113.4 112.4,113.3 113.3,113.4 114.3,113.2 115.2,112.8 116.1,112.7 117.0,113.7 117.9,113.5 118.9,113.1 119.8,113.2 120.7,112.4 121.6,112.5 122.5,112.0 123.5,112.9 124.4,112.9 125.3,112.8 126.2,111.9 127.2,111.9 128.1,111.9 129.0,112.4" fill="none" stroke="#f16913" stroke-width="1.1"/></svg>
<div style="left:651px;top:333px;width:10px;height:10px;background:#345da9;border:1px solid #333"></div>
<div class="t" style="left:662.5px;top:333.10px;height:10.39px;line-height:10.39px;font-size:8.66px;color:#111;transform:translateX(0) scaleX(1.0);transform-origin:0 50%;">Initial Cell, Adhesed</div>
<div style="left:651px;top:345px;width:10px;height:10px;background:#8aa6dc;border:1px solid #333"></div>
<div class="t" style="left:662.5px;top:345.15px;height:10.39px;line-height:10.39px;font-size:8.66px;color:#111;transform:translateX(0) scaleX(1.0);transform-origin:0 50%;">Daughter Cell, Adhesed</div>
<div style="left:651px;top:357px;width:10px;height:10px;background:#d73229;border:1px solid #333"></div>
<div class="t" style="left:662.5px;top:357.20px;height:10.39px;line-height:10.39px;font-size:8.66px;color:#111;transform:translateX(0) scaleX(1.0);transform-origin:0 50%;">Initial Blue Cell, L e+</div>
<div style="left:651px;top:369px;width:10px;height:10px;background:#59b03c;border:1px solid #333"></div>
<div class="t" style="left:662.5px;top:369.25px;height:10.39px;line-height:10.39px;font-size:8.66px;color:#111;transform:translateX(0) scaleX(1.0);transform-origin:0 50%;">Initial Cell, L e+</div>
<div style="left:651px;top:381px;width:10px;height:10px;background:#8ae88a;border:1px solid #333"></div>
<div class="t" style="left:662.5px;top:381.30px;height:10.39px;line-height:10.39px;font-size:8.66px;color:#111;transform:translateX(0) scaleX(1.0);transform-origin:0 50%;">Green Daughter Cell, L e+</div>
<div style="left:651px;top:393px;width:10px;height:10px;background:#f16913;border:1px solid #333"></div>
<div class="t" style="left:662.5px;top:393.35px;height:10.39px;line-height:10.39px;font-size:8.66px;color:#111;transform:translateX(0) scaleX(1.0);transform-origin:0 50%;">Red Daughter Cell, L e+</div>
<div style="left:651px;top:405px;width:10px;height:10px;background:#000;border:1px solid #333"></div>
<div class="t" style="left:662.5px;top:405.40px;height:10.39px;line-height:10.39px;font-size:8.66px;color:#111;transform:translateX(0) scaleX(1.0);transform-origin:0 50%;">Overall Count</div>
<div style="left:268px;top:466px;width:205px;height:124px;background:#e3e0b8;border-style:solid;border-width:1px;border-color:#b8b8a8 #8e8c6c #8e8c6c #b8b8a8;box-shadow:inset 1px 1px 0 #fbfbee"></div>
<div style="left:285px;top:478px;width:184px;height:100px;background:#fff"></div>
<div class="t" style="left:377px;top:468.01px;height:10.98px;line-height:10.98px;font-size:9.15px;font-weight:bold;color:#111;transform:translateX(-50%) scaleX(1.0);transform-origin:50% 50%;">Phase Histogram</div>
<div class="t" style="left:284px;top:481.78px;height:10.44px;line-height:10.44px;font-size:8.7px;color:#111;transform:translateX(-100%) scaleX(1.0);transform-origin:100% 50%;">409</div>
<div class="t" style="left:284px;top:567.78px;height:10.44px;line-height:10.44px;font-size:8.7px;color:#111;transform:translateX(-100%) scaleX(1.0);transform-origin:100% 50%;">0</div>
<div class="t" style="left:280.8px;top:530.3px;height:10.799999999999999px;line-height:10.799999999999999px;transform:translate(-50%,-50%) rotate(-90deg);font-size:9.0px;color:#222">Number of cells</div>
<div class="t" style="left:286px;top:579.28px;height:10.44px;line-height:10.44px;font-size:8.7px;color:#111;transform:translateX(0) scaleX(1.0);transform-origin:0 50%;">0 G1</div>
<div class="t" style="left:328.5px;top:579.28px;height:10.44px;line-height:10.44px;font-size:8.7px;color:#111;transform:translateX(0) scaleX(1.0);transform-origin:0 50%;">-</div>
<div class="t" style="left:356px;top:579.28px;height:10.44px;line-height:10.44px;font-size:8.7px;color:#111;transform:translateX(0) scaleX(1.0);transform-origin:0 50%;">S</div>
<div class="t" style="left:383.5px;top:579.28px;height:10.44px;line-height:10.44px;font-size:8.7px;color:#111;transform:translateX(0) scaleX(1.0);transform-origin:0 50%;">-</div>
<div class="t" style="left:413px;top:579.28px;height:10.44px;line-height:10.44px;font-size:8.7px;color:#111;transform:translateX(0) scaleX(1.0);transform-origin:0 50%;">M</div>
<div class="t" style="left:444px;top:579.28px;height:10.44px;line-height:10.44px;font-size:8.7px;color:#111;transform:translateX(0) scaleX(1.0);transform-origin:0 50%;">-</div>
<div class="t" style="left:452px;top:579.28px;height:10.44px;line-height:10.44px;font-size:8.7px;color:#111;transform:translateX(0) scaleX(1.0);transform-origin:0 50%;">... 4</div>
<svg style="position:absolute;left:285px;top:478px" width="184" height="101"><path d="M0.5,100 L0.5,1.5 L46.5,1.5 L46.5,91 L92.5,91 L92.5,99.5 L137.5,99.5 L137.5,73.5 L183,73.5 L183,100" fill="none" stroke="#333" stroke-width="1.3"/></svg>
<div style="left:474px;top:466px;width:292px;height:123px;background:#e3e0b8;border-style:solid;border-width:1px;border-color:#b8b8a8 #8e8c6c #8e8c6c #b8b8a8;box-shadow:inset 1px 1px 0 #fbfbee"></div>
<div style="left:493px;top:478px;width:246px;height:100px;background:#fff"></div>
<div class="t" style="left:616px;top:468.01px;height:10.98px;line-height:10.98px;font-size:9.15px;font-weight:bold;color:#111;transform:translateX(-50%) scaleX(1.0);transform-origin:50% 50%;">Phase Cycle</div>
<div class="t" style="left:491px;top:481.78px;height:10.44px;line-height:10.44px;font-size:8.7px;color:#111;transform:translateX(-100%) scaleX(1.0);transform-origin:100% 50%;">100</div>
<div class="t" style="left:491px;top:567.28px;height:10.44px;line-height:10.44px;font-size:8.7px;color:#111;transform:translateX(-100%) scaleX(1.0);transform-origin:100% 50%;">0</div>
<div class="t" style="left:488.5px;top:528.9px;height:10.799999999999999px;line-height:10.799999999999999px;transform:translate(-50%,-50%) rotate(-90deg);font-size:9.0px;color:#222">% of cells</div>
<div class="t" style="left:496px;top:578.28px;height:10.44px;line-height:10.44px;font-size:8.7px;color:#111;transform:translateX(-50%) scaleX(1.0);transform-origin:50% 50%;">0</div>
<div class="t" style="left:608px;top:578.16px;height:10.68px;line-height:10.68px;font-size:8.9px;color:#111;transform:translateX(-50%) scaleX(1.0);transform-origin:50% 50%;">Time (minutes)</div>
<div class="t" style="left:738px;top:578.28px;height:10.44px;line-height:10.44px;font-size:8.7px;color:#111;transform:translateX(-100%) scaleX(1.0);transform-origin:100% 50%;">1750</div>
<svg style="position:absolute;left:493px;top:478px" width="246" height="100"><polyline points="0.0,27.4 1.4,27.2 2.9,27.1 4.3,27.7 5.8,28.3 7.2,28.4 8.7,28.5 10.2,27.8 11.6,28.5 13.1,28.5 14.5,28.7 15.9,29.5 17.4,30.0 18.9,30.0 20.3,30.7 21.8,30.9 23.2,31.3 24.6,32.1 26.1,31.8 27.6,32.1 29.0,33.2 30.4,32.9 31.9,33.4 33.4,33.5 34.8,34.2 36.2,34.2 37.7,35.0 39.1,35.6 40.6,35.1 42.0,35.9 43.5,35.4 45.0,35.4 46.4,36.4 47.9,36.4 49.3,35.7 50.8,35.9 52.2,36.9 53.6,36.3 55.1,37.2 56.5,36.7 58.0,37.8 59.5,38.0 60.9,38.3 62.4,38.0 63.8,37.8 65.2,37.9 66.7,37.5 68.2,37.7 69.6,37.8 71.0,37.5 72.5,37.5 74.0,37.4 75.4,36.9 76.8,37.3 78.3,37.4 79.8,36.5 81.2,36.2 82.7,35.4 84.1,35.9 85.5,35.4 87.0,35.2 88.5,34.8 89.9,34.4 91.3,33.4 92.8,33.7 94.2,33.8 95.7,33.2 97.2,32.9 98.6,32.0 100.0,31.8 101.5,32.3 103.0,31.2 104.4,30.8 105.8,30.2 107.3,30.0 108.8,30.3 110.2,29.2 111.7,29.1 113.1,29.0 114.5,29.0 116.0,28.5 117.5,28.1 118.9,27.4 120.3,27.3 121.8,28.0 123.2,28.1 124.7,27.8 126.2,28.2 127.6,28.6 129.1,27.8 130.5,28.9 131.9,28.4 133.4,28.7 134.8,28.4 136.3,28.9 137.8,29.7 139.2,28.9 140.7,29.3 142.1,29.6 143.6,29.9 145.0,30.0 146.4,30.5 147.9,30.6 149.3,30.3 150.8,30.3 152.2,30.2 153.7,30.7 155.2,30.3 156.6,30.5 158.1,30.0 159.5,29.6 160.9,29.6 162.4,29.5 163.8,28.7 165.3,29.0 166.8,28.4 168.2,28.9 169.7,28.7 171.1,28.1 172.6,27.1 174.0,28.0 175.4,26.6 176.9,27.5 178.3,26.9 179.8,26.9 181.2,26.6 182.7,25.9 184.2,26.7 185.6,26.6 187.1,26.3 188.5,26.1 189.9,26.4 191.4,26.9 192.8,26.1 194.3,26.5 195.8,27.2 197.2,26.9 198.7,26.6 200.1,27.3 201.6,27.3 203.0,26.3" fill="none" stroke="#345da9" stroke-width="1.2"/><polyline points="0.0,76.4 1.4,76.7 2.9,76.6 4.3,75.9 5.8,76.5 7.2,76.5 8.7,76.0 10.2,76.5 11.6,75.8 13.1,75.6 14.5,75.7 15.9,75.6 17.4,75.6 18.9,76.2 20.3,75.2 21.8,75.2 23.2,75.6 24.6,74.5 26.1,75.3 27.6,74.0 29.0,74.3 30.4,74.2 31.9,73.3 33.4,73.9 34.8,73.6 36.2,72.5 37.7,72.4 39.1,72.9 40.6,72.0 42.0,71.3 43.5,71.3 45.0,70.9 46.4,71.0 47.9,71.2 49.3,71.0 50.8,70.2 52.2,70.3 53.6,70.5 55.1,70.3 56.5,70.0 58.0,69.6 59.5,69.7 60.9,68.9 62.4,69.7 63.8,69.6 65.2,69.4 66.7,69.0 68.2,68.5 69.6,68.4 71.0,67.8 72.5,67.9 74.0,68.0 75.4,68.1 76.8,68.3 78.3,67.6 79.8,68.2 81.2,68.4 82.7,68.8 84.1,68.4 85.5,68.3 87.0,68.6 88.5,69.0 89.9,69.7 91.3,69.2 92.8,69.4 94.2,70.9 95.7,70.4 97.2,71.3 98.6,72.3 100.0,72.5 101.5,73.1 103.0,72.9 104.4,74.1 105.8,74.0 107.3,74.7 108.8,75.0 110.2,75.8 111.7,76.1 113.1,77.3 114.5,77.6 116.0,77.7 117.5,78.1 118.9,78.7 120.3,79.3 121.8,79.6 123.2,78.7 124.7,78.9 126.2,78.5 127.6,78.8 129.1,78.2 130.5,78.4 131.9,77.7 133.4,77.7 134.8,77.9 136.3,77.8 137.8,76.8 139.2,77.4 140.7,76.3 142.1,76.4 143.6,76.6 145.0,76.6 146.4,76.2 147.9,75.8 149.3,76.1 150.8,76.2 152.2,75.8 153.7,75.1 155.2,75.0 156.6,75.6 158.1,75.4 159.5,75.5 160.9,74.9 162.4,74.2 163.8,74.6 165.3,74.8 166.8,75.3 168.2,75.7 169.7,75.5 171.1,76.0 172.6,76.0 174.0,75.7 175.4,76.2 176.9,76.3 178.3,76.4 179.8,76.8 181.2,76.8 182.7,76.9 184.2,77.3 185.6,78.5 187.1,77.7 188.5,78.6 189.9,78.8 191.4,78.5 192.8,79.0 194.3,78.9 195.8,79.5 197.2,80.3 198.7,79.5 200.1,79.7 201.6,80.7 203.0,80.6" fill="none" stroke="#59b03c" stroke-width="1.2"/><polyline points="0.0,94.3 1.4,93.8 2.9,93.9 4.3,93.5 5.8,93.2 7.2,93.1 8.7,93.3 10.2,93.1 11.6,92.8 13.1,93.1 14.5,93.4 15.9,93.1 17.4,93.0 18.9,93.2 20.3,92.4 21.8,92.8 23.2,92.9 24.6,92.5 26.1,92.0 27.6,92.4 29.0,92.1 30.4,92.0 31.9,91.8 33.4,91.4 34.8,91.4 36.2,92.0 37.7,91.4 39.1,91.6 40.6,91.0 42.0,91.4 43.5,90.9 45.0,91.1 46.4,90.8 47.9,91.0 49.3,90.6 50.8,91.1 52.2,90.6 53.6,90.9 55.1,90.4 56.5,90.1 58.0,90.2 59.5,90.6 60.9,90.8 62.4,90.5 63.8,91.2 65.2,91.4 66.7,91.2 68.2,91.2 69.6,91.5 71.0,91.6 72.5,92.5 74.0,92.8 75.4,92.5 76.8,92.6 78.3,93.4 79.8,93.1 81.2,93.1 82.7,93.9 84.1,94.3 85.5,94.1 87.0,93.9 88.5,94.5 89.9,94.0 91.3,94.7 92.8,94.4 94.2,93.8 95.7,94.5 97.2,94.4 98.6,94.0 100.0,94.1 101.5,93.8 103.0,93.3 104.4,93.1 105.8,93.0 107.3,92.9 108.8,93.3 110.2,92.5 111.7,92.9 113.1,92.2 114.5,92.6 116.0,92.1 117.5,92.6 118.9,93.0 120.3,92.2 121.8,92.7 123.2,92.4 124.7,92.7 126.2,92.8 127.6,93.3 129.1,93.3 130.5,93.5 131.9,93.3 133.4,92.6 134.8,93.1 136.3,93.5 137.8,93.2 139.2,93.5 140.7,93.0 142.1,93.4 143.6,92.9 145.0,93.5 146.4,93.3 147.9,93.5 149.3,93.7 150.8,94.0 152.2,94.1 153.7,93.3 155.2,93.5 156.6,93.7 158.1,93.9 159.5,93.8 160.9,93.9 162.4,93.8 163.8,93.8 165.3,93.9 166.8,93.8 168.2,93.9 169.7,94.4 171.1,93.9 172.6,94.6 174.0,94.4 175.4,94.2 176.9,94.9 178.3,95.0 179.8,95.0 181.2,94.1 182.7,94.7 184.2,94.2 185.6,94.0 187.1,93.6 188.5,93.2 189.9,92.6 191.4,92.5 192.8,92.0 194.3,91.8 195.8,91.7 197.2,91.3 198.7,91.8 200.1,91.4 201.6,91.9 203.0,91.9" fill="none" stroke="#d73229" stroke-width="1.1"/><line x1="0" y1="98.5" x2="203" y2="98.5" stroke="#9a9a9a" stroke-width="0.9" stroke-dasharray="1.5 1"/></svg>
<div style="left:742px;top:478px;width:10px;height:10px;background:#345da9;border:1px solid #333"></div>
<div class="t" style="left:753px;top:479.40px;height:10.80px;line-height:10.80px;font-size:9.0px;color:#111;transform:translateX(0) scaleX(1.0);transform-origin:0 50%;">G1</div>
<div style="left:742px;top:490px;width:10px;height:10px;background:#d73229;border:1px solid #333"></div>
<div class="t" style="left:753px;top:491.40px;height:10.80px;line-height:10.80px;font-size:9.0px;color:#111;transform:translateX(0) scaleX(1.0);transform-origin:0 50%;">S</div>
<div style="left:742px;top:502px;width:10px;height:10px;background:#59b03c;border:1px solid #333"></div>
<div class="t" style="left:753px;top:503.40px;height:10.80px;line-height:10.80px;font-size:9.0px;color:#111;transform:translateX(0) scaleX(1.0);transform-origin:0 50%;">G2</div>
<div style="left:742px;top:514px;width:10px;height:10px;background:#8d8d8d;border:1px solid #333"></div>
<div class="t" style="left:753px;top:515.40px;height:10.80px;line-height:10.80px;font-size:9.0px;color:#111;transform:translateX(0) scaleX(1.0);transform-origin:0 50%;">M</div>
<div style="left:5px;top:600px;width:788px;height:5px;background:#e4e4e4;border-top:1px solid #c4c4c4"></div>
<svg style="position:absolute;left:9px;top:601px" width="20" height="4"><path d="M0 4 L5 4 L2.5 0Z M7 0 L12 0 L9.5 4Z" fill="#111"/></svg>
<div style="left:6px;top:605px;width:736px;height:11px;background:#bcbce6"></div>
<div style="left:742px;top:605px;width:50px;height:11px;background:#ececec"></div>
<div class="t" style="left:7px;top:605.96px;height:10.68px;line-height:10.68px;font-size:8.9px;font-weight:bold;color:#0a0a24;transform:translateX(0) scaleX(1.0);transform-origin:0 50%;">Command Center</div>
<div style="left:743px;top:606px;width:11px;height:10px;background:linear-gradient(#f4f4f4,#d8d8d8);border:1px solid #8a8a8a;border-radius:1px"></div>
<svg style="position:absolute;left:745px;top:607px" width="8" height="8"><path d="M0 0 L4 0 L0 4Z M8 8 L4 8 L8 4Z M1 1 L7 7" stroke="#111" stroke-width="1.4" fill="#111"/></svg>
<div style="left:755px;top:606px;width:36px;height:10px;background:linear-gradient(#fafafa,#dadada);border:1px solid #8a8a8a;border-radius:2px"></div>
<div class="t" style="left:772.5px;top:606.24px;height:9.12px;line-height:9.12px;font-size:7.6px;color:#222;transform:translateX(-50%) scaleX(1.0);transform-origin:50% 50%;">Clear</div>
<div style="left:6px;top:616px;width:770px;height:11px;background:#acd8dc;border-bottom:1px solid #8a9c9c"></div>
<div style="left:776px;top:616px;width:16px;height:11px;background:#f0f0f0"></div>
<svg style="position:absolute;left:782px;top:618px" width="4" height="8"><path d="M0 2 L4 2 L2 0Z M0 6 L4 6 L2 8Z" fill="#222"/></svg>
<div style="left:6px;top:627px;width:41px;height:11px;background:#bcbce6"></div>
<div class="t" style="left:6.5px;top:627.98px;height:10.44px;line-height:10.44px;font-size:8.7px;color:#222;transform:translateX(0) scaleX(1.0);transform-origin:0 50%;">observer&gt;</div>
<div style="left:47px;top:627px;width:731px;height:11px;background:#acd8dc;border-top:1px solid #8a9c9c;border-left:1px solid #8a9c9c"></div>
<div style="left:779px;top:627px;width:12px;height:11px;background:#fdfdfd;border:1px solid #b4b4b4"></div>
<svg style="position:absolute;left:781px;top:630px" width="8" height="5"><path d="M0 0 L8 0 L4 5Z" fill="#000"/></svg>
<div style="left:5px;top:638px;width:789px;height:3px;background:#f6f6f6"></div>
<div style="left:0px;top:642px;width:800px;height:4px;background:#b4c6de"></div>
<div style="left:0px;top:646px;width:800px;height:2px;background:#5e6e8a"></div>
</body></html>
